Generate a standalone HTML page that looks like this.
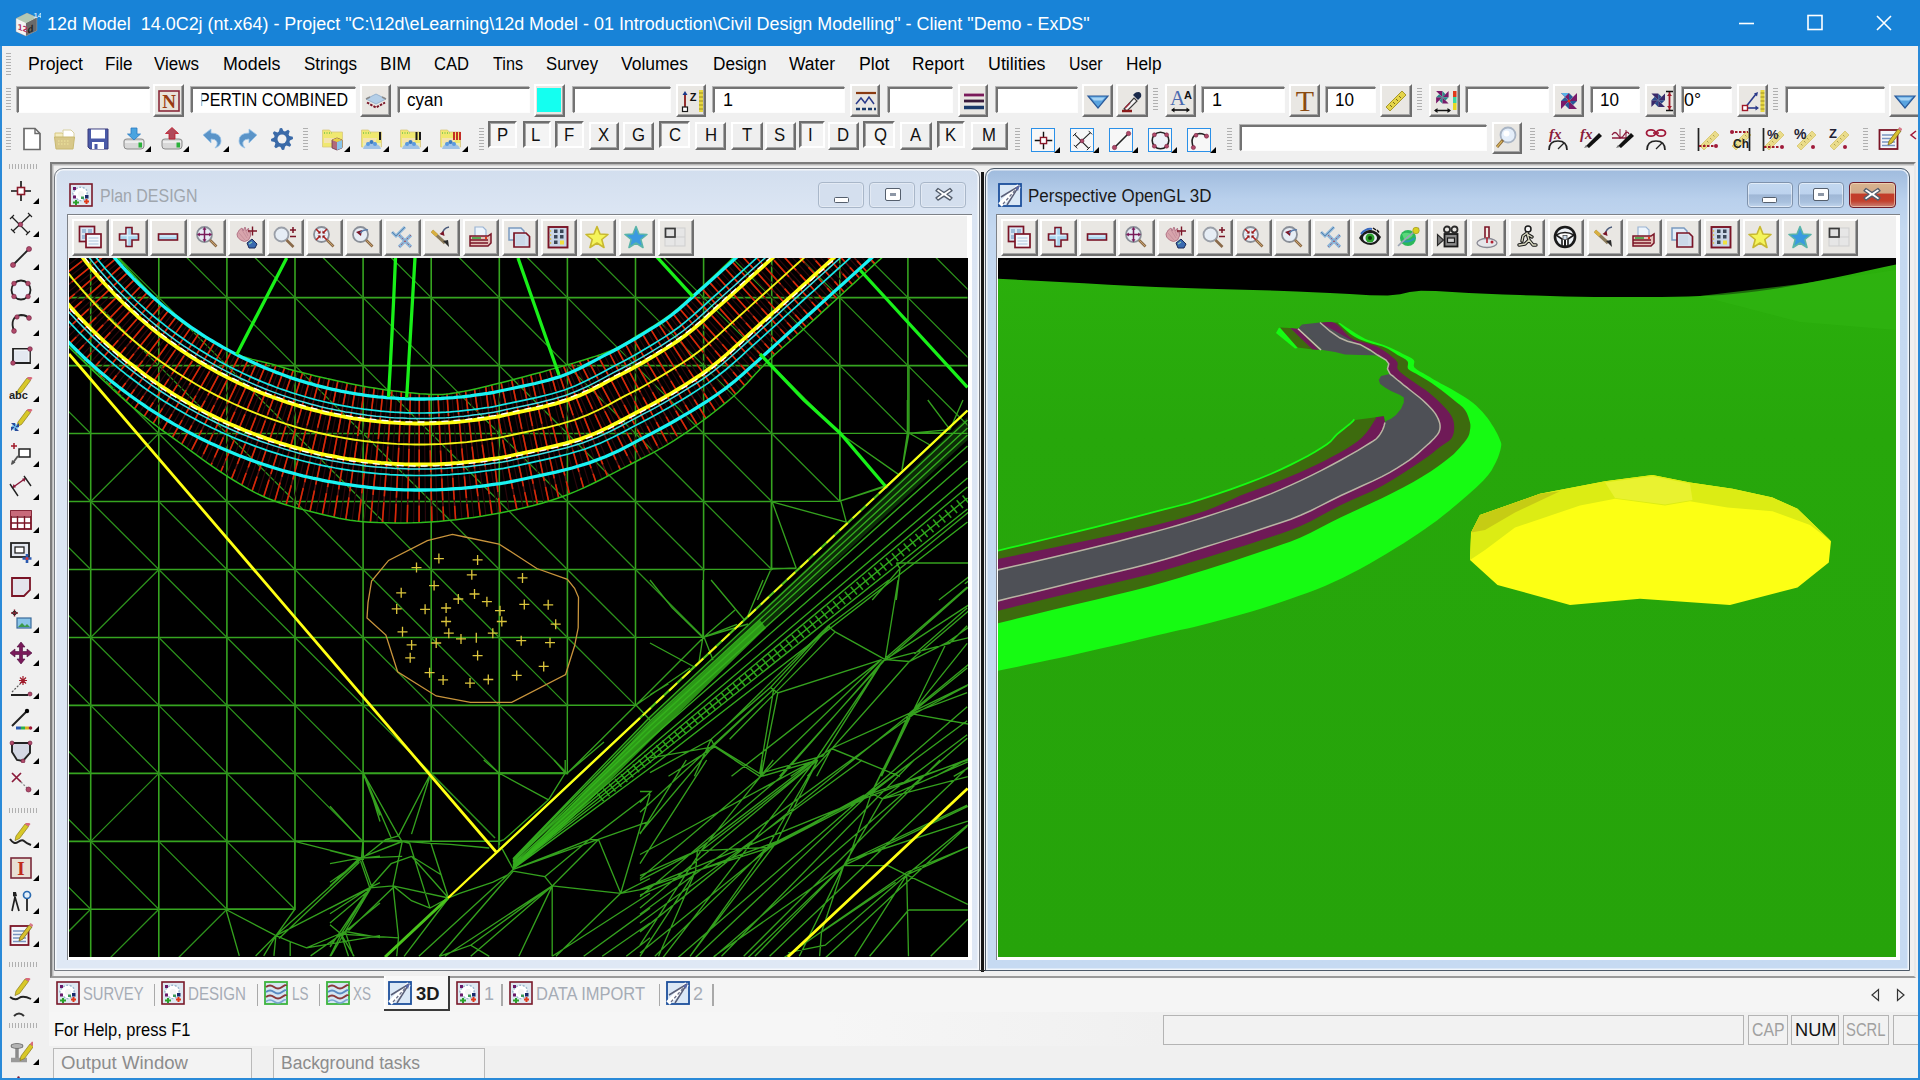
<!DOCTYPE html>
<html><head><meta charset="utf-8"><title>12d Model</title>
<style>
html,body{margin:0;padding:0}
body{width:1920px;height:1080px;position:relative;overflow:hidden;background:#f0f0f0;font-family:"Liberation Sans",sans-serif}
.abs{position:absolute}
.t{position:absolute;white-space:pre;line-height:1}
.inp{position:absolute;background:#fff;border-style:solid;border-width:2px 1px 1px 2px;border-color:#737373 #fdfdfd #fdfdfd #737373;box-shadow:-1px -1px 0 #b4b4b4}
.btn{position:absolute;background:#e9e7e3;border-style:solid;border-width:2px;border-color:#fff #6e6e6e #6e6e6e #fff;box-shadow:inset -1px -1px 0 #a6a6a6}
.btnf{position:absolute;background:#efefef;border-style:solid;border-width:2px;border-color:#fff #6e6e6e #6e6e6e #fff;box-shadow:inset -1px -1px 0 #a6a6a6}
.btns{position:absolute;background:#f4f4f4;border-style:solid;border-width:2px;border-color:#6e6e6e #fff #fff #6e6e6e;box-shadow:inset 1px 1px 0 #a6a6a6}
.gripv{position:absolute;width:5px;background:repeating-linear-gradient(180deg,#b0b0b0 0 1px,transparent 1px 3px)}
.griph{position:absolute;height:5px;background:repeating-linear-gradient(90deg,#b0b0b0 0 1px,transparent 1px 3px)}
.tri{position:absolute;width:0;height:0;border-left:6px solid transparent;border-bottom:6px solid #000}
</style></head>
<body>
<div style="position:absolute;left:0px;top:0px;width:1920px;height:46px;background:#1883d7"></div>
<div class="t" style="left:46.5px;top:14.6px;font-size:18px;color:#fff;transform:scaleX(0.9968);transform-origin:0 0;">12d Model  14.0C2j (nt.x64) - Project &quot;C:\12d\eLearning\12d Model - 01 Introduction\Civil Design Modelling&quot; - Client &quot;Demo - ExDS&quot;</div>
<div style="position:absolute;left:0px;top:46px;width:2px;height:1034px;background:#2a8ad8;z-index:9"></div>
<div style="position:absolute;left:1918px;top:46px;width:2px;height:1034px;background:#2a8ad8;z-index:9"></div>
<div style="position:absolute;left:0px;top:1078px;width:1920px;height:2px;background:#2a8ad8;z-index:9"></div>
<svg class="abs" style="left:1720px;top:0" width="200" height="46" viewBox="0 0 200 46"><g stroke="#fff" stroke-width="1.6" fill="none"><path d="M19 23.5h15"/><rect x="88" y="15.5" width="14" height="14"/><path d="M157 16l14 14M171 16l-14 14"/></g></svg>
<div class="t" style="left:27.5px;top:55.4px;font-size:18px;color:#000;transform:scaleX(0.9816);transform-origin:0 0;">Project</div>
<div class="t" style="left:105.0px;top:55.4px;font-size:18px;color:#000;transform:scaleX(0.9478);transform-origin:0 0;">File</div>
<div class="t" style="left:154.0px;top:55.4px;font-size:18px;color:#000;transform:scaleX(0.9436);transform-origin:0 0;">Views</div>
<div class="t" style="left:222.5px;top:55.4px;font-size:18px;color:#000;transform:scaleX(0.9906);transform-origin:0 0;">Models</div>
<div class="t" style="left:303.5px;top:55.4px;font-size:18px;color:#000;transform:scaleX(0.9459);transform-origin:0 0;">Strings</div>
<div class="t" style="left:380.0px;top:55.4px;font-size:18px;color:#000;transform:scaleX(0.9688);transform-origin:0 0;">BIM</div>
<div class="t" style="left:434.0px;top:55.4px;font-size:18px;color:#000;transform:scaleX(0.9211);transform-origin:0 0;">CAD</div>
<div class="t" style="left:492.5px;top:55.4px;font-size:18px;color:#000;transform:scaleX(0.8997);transform-origin:0 0;">Tins</div>
<div class="t" style="left:546.0px;top:55.4px;font-size:18px;color:#000;transform:scaleX(0.9281);transform-origin:0 0;">Survey</div>
<div class="t" style="left:621.0px;top:55.4px;font-size:18px;color:#000;transform:scaleX(0.9704);transform-origin:0 0;">Volumes</div>
<div class="t" style="left:712.5px;top:55.4px;font-size:18px;color:#000;transform:scaleX(0.9546);transform-origin:0 0;">Design</div>
<div class="t" style="left:789.0px;top:55.4px;font-size:18px;color:#000;transform:scaleX(0.9716);transform-origin:0 0;">Water</div>
<div class="t" style="left:858.5px;top:55.4px;font-size:18px;color:#000;transform:scaleX(0.9834);transform-origin:0 0;">Plot</div>
<div class="t" style="left:912.0px;top:55.4px;font-size:18px;color:#000;transform:scaleX(0.9621);transform-origin:0 0;">Report</div>
<div class="t" style="left:987.5px;top:55.4px;font-size:18px;color:#000;transform:scaleX(0.9911);transform-origin:0 0;">Utilities</div>
<div class="t" style="left:1069.0px;top:55.4px;font-size:18px;color:#000;transform:scaleX(0.8812);transform-origin:0 0;">User</div>
<div class="t" style="left:1126.0px;top:55.4px;font-size:18px;color:#000;transform:scaleX(0.9586);transform-origin:0 0;">Help</div>
<div class="gripv" style="left:6px;top:53px;height:22px"></div>
<div class="gripv" style="left:6px;top:88px;height:24px"></div>
<div class="inp" style="left:17px;top:87px;width:129.5px;height:23px"></div>
<div class="btn" style="left:153px;top:84px;width:27px;height:29px"></div>
<div class="inp" style="left:191px;top:87px;width:162px;height:23px"></div>
<div class="btn" style="left:360px;top:84px;width:27px;height:29px"></div>
<div class="inp" style="left:398px;top:87px;width:128.5px;height:23px"></div>
<div class="btn" style="left:534px;top:84px;width:27px;height:29px"></div>
<div class="inp" style="left:572.5px;top:87px;width:95.5px;height:23px"></div>
<div class="btn" style="left:675.5px;top:84px;width:26.5px;height:29px"></div>
<div class="inp" style="left:713px;top:87px;width:129px;height:23px"></div>
<div class="btn" style="left:849.5px;top:84px;width:26.5px;height:29px"></div>
<div class="inp" style="left:887.5px;top:87px;width:62px;height:23px"></div>
<div class="btn" style="left:957.5px;top:84px;width:26.5px;height:29px"></div>
<div class="inp" style="left:995.5px;top:87px;width:79px;height:23px"></div>
<div class="btn" style="left:1082px;top:84px;width:27px;height:29px"></div>
<div class="btn" style="left:1116px;top:84px;width:27.5px;height:29px"></div>
<div class="gripv" style="left:1153px;top:88px;height:24px"></div>
<div class="btn" style="left:1164.5px;top:84px;width:27px;height:29px"></div>
<div class="inp" style="left:1202px;top:87px;width:79.5px;height:23px"></div>
<div class="btn" style="left:1288.5px;top:84px;width:27.5px;height:29px"></div>
<div class="inp" style="left:1326px;top:87px;width:47px;height:23px"></div>
<div class="btn" style="left:1380px;top:84px;width:27.5px;height:29px"></div>
<div class="gripv" style="left:1417px;top:88px;height:24px"></div>
<div class="btn" style="left:1428.5px;top:84px;width:27px;height:29px"></div>
<div class="inp" style="left:1466px;top:87px;width:79.5px;height:23px"></div>
<div class="btn" style="left:1553px;top:84px;width:27px;height:29px"></div>
<div class="inp" style="left:1591px;top:87px;width:45.5px;height:23px"></div>
<div class="btn" style="left:1644.5px;top:84px;width:27px;height:29px"></div>
<div class="inp" style="left:1681.5px;top:87px;width:47.5px;height:23px"></div>
<div class="btn" style="left:1736.5px;top:84px;width:27px;height:29px"></div>
<div class="gripv" style="left:1773px;top:88px;height:24px"></div>
<div class="inp" style="left:1786px;top:87px;width:96px;height:23px"></div>
<div class="btn" style="left:1889px;top:84px;width:29px;height:29px"></div>
<div class="t" style="left:199.0px;top:91.3px;font-size:18px;color:#000;transform:scaleX(0.8886);transform-origin:0 0;clip-path:inset(0 0 0 3px);">PERTIN COMBINED</div>
<div class="t" style="left:407.0px;top:91.3px;font-size:18px;color:#000;transform:scaleX(0.9466);transform-origin:0 0;">cyan</div>
<div style="position:absolute;left:537px;top:88px;width:24px;height:24px;background:#14fff0"></div>
<div class="t" style="left:723.0px;top:91.3px;font-size:18px;color:#000;">1</div>
<div class="t" style="left:1212.0px;top:91.3px;font-size:18px;color:#000;">1</div>
<div class="t" style="left:1334.5px;top:91.3px;font-size:18px;color:#000;transform:scaleX(0.9485);transform-origin:0 0;">10</div>
<div class="t" style="left:1599.5px;top:91.3px;font-size:18px;color:#000;transform:scaleX(0.9485);transform-origin:0 0;">10</div>
<div class="t" style="left:1684.0px;top:91.3px;font-size:18px;color:#000;transform:scaleX(0.9873);transform-origin:0 0;">0°</div>
<div class="gripv" style="left:6px;top:128px;height:24px"></div>
<div class="gripv" style="left:303px;top:128px;height:24px"></div>
<div class="gripv" style="left:479px;top:128px;height:24px"></div>
<div class="btns" style="left:487.5px;top:121px;width:25.5px;height:23px"></div>
<div class="t" style="left:496.9px;top:125.8px;font-size:18px;color:#111;transform:scaleX(0.93);transform-origin:0 0;">P</div>
<div class="btns" style="left:522.5px;top:121px;width:24.5px;height:23px"></div>
<div class="t" style="left:531.3px;top:125.8px;font-size:18px;color:#111;transform:scaleX(0.93);transform-origin:0 0;">L</div>
<div class="btns" style="left:555px;top:121px;width:25px;height:23px"></div>
<div class="t" style="left:564.4px;top:125.8px;font-size:18px;color:#111;transform:scaleX(0.93);transform-origin:0 0;">F</div>
<div class="btnf" style="left:588.5px;top:122px;width:26.5px;height:24px"></div>
<div class="t" style="left:598.2px;top:125.8px;font-size:18px;color:#111;transform:scaleX(0.93);transform-origin:0 0;">X</div>
<div class="btnf" style="left:623px;top:122px;width:27px;height:24px"></div>
<div class="t" style="left:632.2px;top:125.8px;font-size:18px;color:#111;transform:scaleX(0.93);transform-origin:0 0;">G</div>
<div class="btns" style="left:658.5px;top:121px;width:27px;height:23px"></div>
<div class="t" style="left:668.5px;top:125.8px;font-size:18px;color:#111;transform:scaleX(0.93);transform-origin:0 0;">C</div>
<div class="btnf" style="left:695px;top:122px;width:27px;height:24px"></div>
<div class="t" style="left:705.0px;top:125.8px;font-size:18px;color:#111;transform:scaleX(0.93);transform-origin:0 0;">H</div>
<div class="btnf" style="left:731px;top:122px;width:27.5px;height:24px"></div>
<div class="t" style="left:742.4px;top:125.8px;font-size:18px;color:#111;transform:scaleX(0.93);transform-origin:0 0;">T</div>
<div class="btnf" style="left:765px;top:122px;width:26.5px;height:24px"></div>
<div class="t" style="left:774.4px;top:125.8px;font-size:18px;color:#111;transform:scaleX(0.93);transform-origin:0 0;">S</div>
<div class="btns" style="left:798.5px;top:121px;width:22.5px;height:23px"></div>
<div class="t" style="left:808.2px;top:125.8px;font-size:18px;color:#111;transform:scaleX(0.93);transform-origin:0 0;">I</div>
<div class="btnf" style="left:827.5px;top:122px;width:27.5px;height:24px"></div>
<div class="t" style="left:837.0px;top:125.8px;font-size:18px;color:#111;transform:scaleX(0.93);transform-origin:0 0;">D</div>
<div class="btns" style="left:862.5px;top:121px;width:28.5px;height:23px"></div>
<div class="t" style="left:873.5px;top:125.8px;font-size:18px;color:#111;transform:scaleX(0.93);transform-origin:0 0;">Q</div>
<div class="btnf" style="left:900px;top:122px;width:28px;height:24px"></div>
<div class="t" style="left:910.4px;top:125.8px;font-size:18px;color:#111;transform:scaleX(0.93);transform-origin:0 0;">A</div>
<div class="btns" style="left:937px;top:121px;width:24px;height:23px"></div>
<div class="t" style="left:945.4px;top:125.8px;font-size:18px;color:#111;transform:scaleX(0.93);transform-origin:0 0;">K</div>
<div class="btnf" style="left:971px;top:122px;width:32.5px;height:24px"></div>
<div class="t" style="left:982.0px;top:125.8px;font-size:18px;color:#111;transform:scaleX(0.93);transform-origin:0 0;">M</div>
<div class="gripv" style="left:1015px;top:128px;height:24px"></div>
<div style="position:absolute;left:1030.5px;top:127.5px;width:22px;height:22px;border:1.5px solid #2a90e8;background:#f7f7f7"></div>
<div class="tri" style="left:1054px;top:147px"></div>
<div style="position:absolute;left:1069.5px;top:127.5px;width:22px;height:22px;border:1.5px solid #2a90e8;background:#f7f7f7"></div>
<div class="tri" style="left:1093px;top:147px"></div>
<div style="position:absolute;left:1108.5px;top:127.5px;width:22px;height:22px;border:1.5px solid #2a90e8;background:#f7f7f7"></div>
<div class="tri" style="left:1132px;top:147px"></div>
<div style="position:absolute;left:1147.5px;top:127.5px;width:22px;height:22px;border:1.5px solid #2a90e8;background:#f7f7f7"></div>
<div class="tri" style="left:1171px;top:147px"></div>
<div style="position:absolute;left:1186.5px;top:127.5px;width:22px;height:22px;border:1.5px solid #2a90e8;background:#f7f7f7"></div>
<div class="tri" style="left:1210px;top:147px"></div>
<div class="gripv" style="left:1227px;top:128px;height:24px"></div>
<div class="inp" style="left:1240px;top:125px;width:244px;height:23px"></div>
<div class="btn" style="left:1491.5px;top:122px;width:26.5px;height:28px"></div>
<div class="gripv" style="left:1530px;top:128px;height:24px"></div>
<div class="gripv" style="left:1680px;top:128px;height:24px"></div>
<div class="gripv" style="left:1863px;top:128px;height:24px"></div>
<div style="position:absolute;left:49.5px;top:162px;width:1866px;height:815.5px;background:#f0f0f0;border-style:solid;border-width:2.5px;border-color:#7c7c7c #e8e8e8 #9a9a9a #7c7c7c;box-sizing:border-box;box-shadow:inset 1.5px 1.5px 0 #b9b9b9"></div>
<div style="position:absolute;left:981.3px;top:172px;width:3px;height:799.5px;background:#161616"></div>
<div style="position:absolute;left:56px;top:969.6px;width:1853px;height:1.9px;background:#2c2c2c"></div>
<div class="abs" style="left:54px;top:167.5px;width:924px;height:801.5px;background:linear-gradient(180deg,#d2deee 0px,#dbe5f3 40px,#dfe8f5 100%);border:1.5px solid #767b82;border-radius:9px 9px 0 0;box-shadow:inset 0 0 0 1.5px rgba(255,255,255,.75)"></div>
<div style="position:absolute;left:66.8px;top:214.3px;width:905.2px;height:745.7px;background:#fff;border-style:solid;border-color:#7d8187;border-width:1.5px 0 0 1.5px;box-sizing:border-box"></div>
<div style="position:absolute;left:68.3px;top:215.8px;width:899.2px;height:42.2px;background:#f0f0f0"></div>
<div class="btn" style="left:72px;top:219px;width:32.5px;height:32.5px"></div>
<div class="btn" style="left:111.05px;top:219px;width:32.5px;height:32.5px"></div>
<div class="btn" style="left:150.1px;top:219px;width:32.5px;height:32.5px"></div>
<div class="btn" style="left:189.15px;top:219px;width:32.5px;height:32.5px"></div>
<div class="btn" style="left:228.2px;top:219px;width:32.5px;height:32.5px"></div>
<div class="btn" style="left:267.25px;top:219px;width:32.5px;height:32.5px"></div>
<div class="btn" style="left:306.3px;top:219px;width:32.5px;height:32.5px"></div>
<div class="btn" style="left:345.35px;top:219px;width:32.5px;height:32.5px"></div>
<div class="btn" style="left:384.4px;top:219px;width:32.5px;height:32.5px"></div>
<div class="btn" style="left:423.45px;top:219px;width:32.5px;height:32.5px"></div>
<div class="btn" style="left:462.5px;top:219px;width:32.5px;height:32.5px"></div>
<div class="btn" style="left:501.55px;top:219px;width:32.5px;height:32.5px"></div>
<div class="btn" style="left:540.6px;top:219px;width:32.5px;height:32.5px"></div>
<div class="btn" style="left:579.65px;top:219px;width:32.5px;height:32.5px"></div>
<div class="btn" style="left:618.7px;top:219px;width:32.5px;height:32.5px"></div>
<div class="btn" style="left:657.75px;top:219px;width:32.5px;height:32.5px"></div>
<div class="t" style="left:99.5px;top:186.8px;font-size:18px;color:#a0a6ad;transform:scaleX(0.8861);transform-origin:0 0;">Plan DESIGN</div>
<div class="abs" style="left:818px;top:182px;width:44px;height:23.5px;border:1.5px solid #a9b7c9;border-radius:4px;background:#d4dfee;box-shadow:inset 0 0 0 1px rgba(255,255,255,.35)"></div>
<div class="abs" style="left:833.5px;top:196.5px;width:13px;height:4px;background:#fff;border:1.5px solid #555f6d;border-radius:1.5px"></div>
<div class="abs" style="left:869px;top:182px;width:44px;height:23.5px;border:1.5px solid #a9b7c9;border-radius:4px;background:#d4dfee;box-shadow:inset 0 0 0 1px rgba(255,255,255,.35)"></div>
<div class="abs" style="left:885.5px;top:188.5px;width:6px;height:3px;background:#8d97a6;border:4px solid #fff;outline:1.5px solid #555f6d;border-radius:1px"></div>
<div class="abs" style="left:920px;top:182px;width:44px;height:23.5px;border:1.5px solid #a9b7c9;border-radius:4px;background:#d4dfee;box-shadow:inset 0 0 0 1px rgba(255,255,255,.35)"></div>
<svg class="abs" style="left:933.5px;top:186px" width="20" height="16" viewBox="0 0 20 16"><path d="M4 2.5l6 4 6-4 2 2.2-5 3.6 5 3.6-2 2.2-6-4-6 4-2-2.2 5-3.6-5-3.6z" fill="#fff" stroke="#555f6d" stroke-width="1.4" stroke-linejoin="round"/></svg>
<div class="abs" style="left:984.5px;top:167.5px;width:923.5px;height:801.5px;background:linear-gradient(180deg,#9fbbdd 0px,#b9d0ec 30px,#c4d8f0 60px,#c6daf2 100%);border:1.5px solid #4d5a68;border-radius:9px 9px 0 0;box-shadow:inset 0 0 0 1.5px rgba(255,255,255,.75)"></div>
<div style="position:absolute;left:995.8px;top:214.3px;width:904.7px;height:745.7px;background:#fff;border-style:solid;border-color:#7d8187;border-width:1.5px 0 0 1.5px;box-sizing:border-box"></div>
<div style="position:absolute;left:997.3px;top:215.8px;width:898.7px;height:42.2px;background:#f0f0f0"></div>
<div class="btn" style="left:1001px;top:219px;width:32.5px;height:32.5px"></div>
<div class="btn" style="left:1040.05px;top:219px;width:32.5px;height:32.5px"></div>
<div class="btn" style="left:1079.1px;top:219px;width:32.5px;height:32.5px"></div>
<div class="btn" style="left:1118.15px;top:219px;width:32.5px;height:32.5px"></div>
<div class="btn" style="left:1157.2px;top:219px;width:32.5px;height:32.5px"></div>
<div class="btn" style="left:1196.25px;top:219px;width:32.5px;height:32.5px"></div>
<div class="btn" style="left:1235.3px;top:219px;width:32.5px;height:32.5px"></div>
<div class="btn" style="left:1274.35px;top:219px;width:32.5px;height:32.5px"></div>
<div class="btn" style="left:1313.4px;top:219px;width:32.5px;height:32.5px"></div>
<div class="btn" style="left:1352.45px;top:219px;width:32.5px;height:32.5px"></div>
<div class="btn" style="left:1391.5px;top:219px;width:32.5px;height:32.5px"></div>
<div class="btn" style="left:1430.55px;top:219px;width:32.5px;height:32.5px"></div>
<div class="btn" style="left:1469.6px;top:219px;width:32.5px;height:32.5px"></div>
<div class="btn" style="left:1508.65px;top:219px;width:32.5px;height:32.5px"></div>
<div class="btn" style="left:1547.7px;top:219px;width:32.5px;height:32.5px"></div>
<div class="btn" style="left:1586.75px;top:219px;width:32.5px;height:32.5px"></div>
<div class="btn" style="left:1625.8px;top:219px;width:32.5px;height:32.5px"></div>
<div class="btn" style="left:1664.85px;top:219px;width:32.5px;height:32.5px"></div>
<div class="btn" style="left:1703.9px;top:219px;width:32.5px;height:32.5px"></div>
<div class="btn" style="left:1742.95px;top:219px;width:32.5px;height:32.5px"></div>
<div class="btn" style="left:1782px;top:219px;width:32.5px;height:32.5px"></div>
<div class="btn" style="left:1821.05px;top:219px;width:32.5px;height:32.5px"></div>
<div class="t" style="left:1028.0px;top:186.8px;font-size:18px;color:#1a1a1a;transform:scaleX(0.9436);transform-origin:0 0;">Perspective OpenGL 3D</div>
<div class="abs" style="left:1746.5px;top:182px;width:44px;height:23.5px;border:1.5px solid #7f93ad;border-radius:4px;background:linear-gradient(180deg,#c3d8f0 0,#bdd3ee 45%,#9fb7d6 50%,#a9c1de 80%,#c2d6ee 100%);box-shadow:inset 0 0 0 1px rgba(255,255,255,.5)"></div>
<div class="abs" style="left:1762px;top:196.5px;width:13px;height:4px;background:#fff;border:1.5px solid #555f6d;border-radius:1.5px"></div>
<div class="abs" style="left:1797.5px;top:182px;width:44px;height:23.5px;border:1.5px solid #7f93ad;border-radius:4px;background:linear-gradient(180deg,#c3d8f0 0,#bdd3ee 45%,#9fb7d6 50%,#a9c1de 80%,#c2d6ee 100%);box-shadow:inset 0 0 0 1px rgba(255,255,255,.5)"></div>
<div class="abs" style="left:1814px;top:188.5px;width:6px;height:3px;background:#8d97a6;border:4px solid #fff;outline:1.5px solid #555f6d;border-radius:1px"></div>
<div class="abs" style="left:1848.5px;top:182px;width:45px;height:23.5px;border:1.5px solid #6e1e2c;border-radius:4px;background:linear-gradient(180deg,#d8b48e 0,#d2a98a 42%,#c23c2a 46%,#c2402c 75%,#c98378 100%);box-shadow:inset 0 0 0 1px rgba(255,230,200,.55)"></div>
<svg class="abs" style="left:1862px;top:186px" width="20" height="16" viewBox="0 0 20 16"><path d="M4 2.5l6 4 6-4 2 2.2-5 3.6 5 3.6-2 2.2-6-4-6 4-2-2.2 5-3.6-5-3.6z" fill="#fff" stroke="#555f6d" stroke-width="1.4" stroke-linejoin="round"/></svg>
<div style="position:absolute;left:69px;top:258px;width:898.5px;height:699px;background:#000"></div>
<div style="position:absolute;left:998px;top:258px;width:898px;height:699px;background:#26a50a"></div>
<svg class="abs" style="left:69px;top:258px" width="898.5" height="699" viewBox="69 258 898.5 699">
<rect x="69" y="258" width="899" height="699" fill="#000"/>
<defs><clipPath id="reg"><polygon points="69.0,258.0 967.5,258.0 967.5,434.0 841.0,434.0 841.0,502.0 772.8,502.0 772.8,570.0 704.5,570.0 704.5,638.0 636.5,638.0 636.5,706.0 568.2,706.0 568.2,774.2 363.1,774.2 363.1,842.0 295.0,842.0 295.0,910.0 225.8,910.0 225.8,957.0 69.0,957.0"/></clipPath></defs>
<g clip-path="url(#reg)">
<path d="M22.6 229.6L90.7 229.6M22.6 229.6L22.6 297.6M22.6 297.6L90.7 297.6M22.6 297.6L22.6 365.6M22.6 365.6L90.7 365.6M22.6 365.6L22.6 433.5M22.6 433.5L90.7 433.5M22.6 433.5L22.6 501.5M22.6 501.5L90.7 501.5M22.6 501.5L22.6 569.5M22.6 569.5L90.7 569.5M22.6 569.5L22.6 637.5M22.6 637.5L90.7 637.5M22.6 637.5L22.6 705.4M22.6 705.4L90.7 705.4M22.6 705.4L22.6 773.4M22.6 773.4L90.7 773.4M22.6 773.4L22.6 841.4M22.6 841.4L90.7 841.4M22.6 841.4L22.6 909.3M22.6 909.3L90.7 909.3M22.6 909.3L22.6 977.3M90.7 229.6L158.8 229.6M90.7 229.6L90.7 297.6M90.7 297.6L158.8 297.6M90.7 297.6L90.7 365.6M90.7 365.6L158.8 365.6M90.7 365.6L90.7 433.5M90.7 433.5L158.8 433.5M90.7 433.5L90.7 501.5M90.7 501.5L158.8 501.5M90.7 501.5L90.7 569.5M90.7 569.5L158.8 569.5M90.7 569.5L90.7 637.5M90.7 637.5L158.8 637.5M90.7 637.5L90.7 705.4M90.7 705.4L158.8 705.4M90.7 705.4L90.7 773.4M90.7 773.4L158.8 773.4M90.7 773.4L90.7 841.4M90.7 841.4L158.8 841.4M90.7 841.4L90.7 909.3M90.7 909.3L158.8 909.3M90.7 909.3L90.7 977.3M158.8 229.6L226.9 229.6M158.8 229.6L158.8 297.6M158.8 297.6L226.9 297.6M158.8 297.6L158.8 365.6M158.8 365.6L226.9 365.6M158.8 365.6L158.8 433.5M158.8 433.5L226.9 433.5M158.8 433.5L158.8 501.5M158.8 501.5L226.9 501.5M158.8 501.5L158.8 569.5M158.8 569.5L226.9 569.5M158.8 569.5L158.8 637.5M158.8 637.5L226.9 637.5M158.8 637.5L158.8 705.4M158.8 705.4L226.9 705.4M158.8 705.4L158.8 773.4M158.8 773.4L226.9 773.4M158.8 773.4L158.8 841.4M158.8 841.4L226.9 841.4M158.8 841.4L158.8 909.3M158.8 909.3L226.9 909.3M158.8 909.3L158.8 977.3M226.9 229.6L295.0 229.6M226.9 229.6L226.9 297.6M226.9 297.6L295.0 297.6M226.9 297.6L226.9 365.6M226.9 365.6L295.0 365.6M226.9 365.6L226.9 433.5M226.9 433.5L295.0 433.5M226.9 433.5L226.9 501.5M226.9 501.5L295.0 501.5M226.9 501.5L226.9 569.5M226.9 569.5L295.0 569.5M226.9 569.5L226.9 637.5M226.9 637.5L295.0 637.5M226.9 637.5L226.9 705.4M226.9 705.4L295.0 705.4M226.9 705.4L226.9 773.4M226.9 773.4L295.0 773.4M226.9 773.4L226.9 841.4M226.9 841.4L295.0 841.4M226.9 841.4L226.9 909.3M226.9 909.3L295.0 909.3M226.9 909.3L226.9 977.3M295.0 229.6L363.1 229.6M295.0 229.6L295.0 297.6M295.0 297.6L363.1 297.6M295.0 297.6L295.0 365.6M295.0 365.6L363.1 365.6M295.0 365.6L295.0 433.5M295.0 433.5L363.1 433.5M295.0 433.5L295.0 501.5M295.0 501.5L363.1 501.5M295.0 501.5L295.0 569.5M295.0 569.5L363.1 569.5M295.0 569.5L295.0 637.5M295.0 637.5L363.1 637.5M295.0 637.5L295.0 705.4M295.0 705.4L363.1 705.4M295.0 705.4L295.0 773.4M295.0 773.4L363.1 773.4M295.0 773.4L295.0 841.4M295.0 841.4L363.1 841.4M295.0 841.4L295.0 909.3M295.0 909.3L363.1 909.3M295.0 909.3L295.0 977.3M363.1 229.6L431.2 229.6M363.1 229.6L363.1 297.6M363.1 297.6L431.2 297.6M363.1 297.6L363.1 365.6M363.1 365.6L431.2 365.6M363.1 365.6L363.1 433.5M363.1 433.5L431.2 433.5M363.1 433.5L363.1 501.5M363.1 501.5L431.2 501.5M363.1 501.5L363.1 569.5M363.1 569.5L431.2 569.5M363.1 569.5L363.1 637.5M363.1 637.5L431.2 637.5M363.1 637.5L363.1 705.4M363.1 705.4L431.2 705.4M363.1 705.4L363.1 773.4M363.1 773.4L431.2 773.4M363.1 773.4L363.1 841.4M363.1 841.4L431.2 841.4M363.1 841.4L363.1 909.3M363.1 909.3L431.2 909.3M363.1 909.3L363.1 977.3M431.2 229.6L499.3 229.6M431.2 229.6L431.2 297.6M431.2 297.6L499.3 297.6M431.2 297.6L431.2 365.6M431.2 365.6L499.3 365.6M431.2 365.6L431.2 433.5M431.2 433.5L499.3 433.5M431.2 433.5L431.2 501.5M431.2 501.5L499.3 501.5M431.2 501.5L431.2 569.5M431.2 569.5L499.3 569.5M431.2 569.5L431.2 637.5M431.2 637.5L499.3 637.5M431.2 637.5L431.2 705.4M431.2 705.4L499.3 705.4M431.2 705.4L431.2 773.4M431.2 773.4L499.3 773.4M431.2 773.4L431.2 841.4M431.2 841.4L499.3 841.4M431.2 841.4L431.2 909.3M431.2 909.3L499.3 909.3M431.2 909.3L431.2 977.3M499.3 229.6L567.4 229.6M499.3 229.6L499.3 297.6M499.3 297.6L567.4 297.6M499.3 297.6L499.3 365.6M499.3 365.6L567.4 365.6M499.3 365.6L499.3 433.5M499.3 433.5L567.4 433.5M499.3 433.5L499.3 501.5M499.3 501.5L567.4 501.5M499.3 501.5L499.3 569.5M499.3 569.5L567.4 569.5M499.3 569.5L499.3 637.5M499.3 637.5L567.4 637.5M499.3 637.5L499.3 705.4M499.3 705.4L567.4 705.4M499.3 705.4L499.3 773.4M499.3 773.4L567.4 773.4M499.3 773.4L499.3 841.4M499.3 841.4L567.4 841.4M499.3 841.4L499.3 909.3M499.3 909.3L567.4 909.3M499.3 909.3L499.3 977.3M567.4 229.6L635.5 229.6M567.4 229.6L567.4 297.6M567.4 297.6L635.5 297.6M567.4 297.6L567.4 365.6M567.4 365.6L635.5 365.6M567.4 365.6L567.4 433.5M567.4 433.5L635.5 433.5M567.4 433.5L567.4 501.5M567.4 501.5L635.5 501.5M567.4 501.5L567.4 569.5M567.4 569.5L635.5 569.5M567.4 569.5L567.4 637.5M567.4 637.5L635.5 637.5M567.4 637.5L567.4 705.4M567.4 705.4L635.5 705.4M567.4 705.4L567.4 773.4M567.4 773.4L635.5 773.4M567.4 773.4L567.4 841.4M567.4 841.4L635.5 841.4M567.4 841.4L567.4 909.3M567.4 909.3L635.5 909.3M567.4 909.3L567.4 977.3M635.5 229.6L703.6 229.6M635.5 229.6L635.5 297.6M635.5 297.6L703.6 297.6M635.5 297.6L635.5 365.6M635.5 365.6L703.6 365.6M635.5 365.6L635.5 433.5M635.5 433.5L703.6 433.5M635.5 433.5L635.5 501.5M635.5 501.5L703.6 501.5M635.5 501.5L635.5 569.5M635.5 569.5L703.6 569.5M635.5 569.5L635.5 637.5M635.5 637.5L703.6 637.5M635.5 637.5L635.5 705.4M635.5 705.4L703.6 705.4M635.5 705.4L635.5 773.4M635.5 773.4L703.6 773.4M635.5 773.4L635.5 841.4M635.5 841.4L703.6 841.4M635.5 841.4L635.5 909.3M635.5 909.3L703.6 909.3M635.5 909.3L635.5 977.3M703.6 229.6L771.7 229.6M703.6 229.6L703.6 297.6M703.6 297.6L771.7 297.6M703.6 297.6L703.6 365.6M703.6 365.6L771.7 365.6M703.6 365.6L703.6 433.5M703.6 433.5L771.7 433.5M703.6 433.5L703.6 501.5M703.6 501.5L771.7 501.5M703.6 501.5L703.6 569.5M703.6 569.5L771.7 569.5M703.6 569.5L703.6 637.5M703.6 637.5L771.7 637.5M703.6 637.5L703.6 705.4M703.6 705.4L771.7 705.4M703.6 705.4L703.6 773.4M703.6 773.4L771.7 773.4M703.6 773.4L703.6 841.4M703.6 841.4L771.7 841.4M703.6 841.4L703.6 909.3M703.6 909.3L771.7 909.3M703.6 909.3L703.6 977.3M771.7 229.6L839.8 229.6M771.7 229.6L771.7 297.6M771.7 297.6L839.8 297.6M771.7 297.6L771.7 365.6M771.7 365.6L839.8 365.6M771.7 365.6L771.7 433.5M771.7 433.5L839.8 433.5M771.7 433.5L771.7 501.5M771.7 501.5L839.8 501.5M771.7 501.5L771.7 569.5M771.7 569.5L839.8 569.5M771.7 569.5L771.7 637.5M771.7 637.5L839.8 637.5M771.7 637.5L771.7 705.4M771.7 705.4L839.8 705.4M771.7 705.4L771.7 773.4M771.7 773.4L839.8 773.4M771.7 773.4L771.7 841.4M771.7 841.4L839.8 841.4M771.7 841.4L771.7 909.3M771.7 909.3L839.8 909.3M771.7 909.3L771.7 977.3M839.8 229.6L907.9 229.6M839.8 229.6L839.8 297.6M839.8 297.6L907.9 297.6M839.8 297.6L839.8 365.6M839.8 365.6L907.9 365.6M839.8 365.6L839.8 433.5M839.8 433.5L907.9 433.5M839.8 433.5L839.8 501.5M839.8 501.5L907.9 501.5M839.8 501.5L839.8 569.5M839.8 569.5L907.9 569.5M839.8 569.5L839.8 637.5M839.8 637.5L907.9 637.5M839.8 637.5L839.8 705.4M839.8 705.4L907.9 705.4M839.8 705.4L839.8 773.4M839.8 773.4L907.9 773.4M839.8 773.4L839.8 841.4M839.8 841.4L907.9 841.4M839.8 841.4L839.8 909.3M839.8 909.3L907.9 909.3M839.8 909.3L839.8 977.3M907.9 229.6L976.0 229.6M907.9 229.6L907.9 297.6M907.9 297.6L976.0 297.6M907.9 297.6L907.9 365.6M907.9 365.6L976.0 365.6M907.9 365.6L907.9 433.5M907.9 433.5L976.0 433.5M907.9 433.5L907.9 501.5M907.9 501.5L976.0 501.5M907.9 501.5L907.9 569.5M907.9 569.5L976.0 569.5M907.9 569.5L907.9 637.5M907.9 637.5L976.0 637.5M907.9 637.5L907.9 705.4M907.9 705.4L976.0 705.4M907.9 705.4L907.9 773.4M907.9 773.4L976.0 773.4M907.9 773.4L907.9 841.4M907.9 841.4L976.0 841.4M907.9 841.4L907.9 909.3M907.9 909.3L976.0 909.3M907.9 909.3L907.9 977.3" stroke="#36a420" stroke-width="1.6" fill="none"/>
<path d="M22.6 229.6L90.7 297.6M22.6 297.6L90.7 365.6M22.6 365.6L90.7 433.5M22.6 433.5L90.7 501.5M22.6 501.5L90.7 569.5M22.6 569.5L90.7 637.5M22.6 637.5L90.7 705.4M22.6 705.4L90.7 773.4M22.6 773.4L90.7 841.4M22.6 841.4L90.7 909.3M90.7 909.3L22.6 977.3M90.7 229.6L158.8 297.6M90.7 297.6L158.8 365.6M90.7 365.6L158.8 433.5M158.8 433.5L90.7 501.5M90.7 501.5L158.8 569.5M158.8 569.5L90.7 637.5M90.7 637.5L158.8 705.4M90.7 705.4L158.8 773.4M158.8 773.4L90.7 841.4M90.7 841.4L158.8 909.3M158.8 909.3L90.7 977.3M158.8 229.6L226.9 297.6M158.8 297.6L226.9 365.6M158.8 365.6L226.9 433.5M158.8 433.5L226.9 501.5M158.8 501.5L226.9 569.5M158.8 569.5L226.9 637.5M158.8 637.5L226.9 705.4M158.8 705.4L226.9 773.4M158.8 773.4L226.9 841.4M158.8 841.4L226.9 909.3M226.9 909.3L158.8 977.3M226.9 229.6L295.0 297.6M226.9 297.6L295.0 365.6M226.9 365.6L295.0 433.5M226.9 433.5L295.0 501.5M226.9 501.5L295.0 569.5M226.9 569.5L295.0 637.5M226.9 637.5L295.0 705.4M226.9 705.4L295.0 773.4M226.9 773.4L295.0 841.4M226.9 841.4L295.0 909.3M226.9 909.3L295.0 977.3M295.0 229.6L363.1 297.6M295.0 297.6L363.1 365.6M295.0 365.6L363.1 433.5M295.0 433.5L363.1 501.5M295.0 501.5L363.1 569.5M295.0 569.5L363.1 637.5M295.0 637.5L363.1 705.4M295.0 705.4L363.1 773.4M295.0 773.4L363.1 841.4M295.0 841.4L363.1 909.3M295.0 909.3L363.1 977.3M363.1 229.6L431.2 297.6M363.1 297.6L431.2 365.6M363.1 365.6L431.2 433.5M363.1 433.5L431.2 501.5M363.1 501.5L431.2 569.5M363.1 569.5L431.2 637.5M363.1 637.5L431.2 705.4M363.1 705.4L431.2 773.4M363.1 773.4L431.2 841.4M363.1 841.4L431.2 909.3M363.1 909.3L431.2 977.3M431.2 229.6L499.3 297.6M431.2 297.6L499.3 365.6M431.2 365.6L499.3 433.5M431.2 433.5L499.3 501.5M431.2 501.5L499.3 569.5M431.2 569.5L499.3 637.5M431.2 637.5L499.3 705.4M431.2 705.4L499.3 773.4M431.2 773.4L499.3 841.4M431.2 841.4L499.3 909.3M431.2 909.3L499.3 977.3M499.3 229.6L567.4 297.6M499.3 297.6L567.4 365.6M499.3 365.6L567.4 433.5M499.3 433.5L567.4 501.5M499.3 501.5L567.4 569.5M499.3 569.5L567.4 637.5M499.3 637.5L567.4 705.4M499.3 705.4L567.4 773.4M499.3 773.4L567.4 841.4M499.3 841.4L567.4 909.3M499.3 909.3L567.4 977.3M567.4 229.6L635.5 297.6M567.4 297.6L635.5 365.6M567.4 365.6L635.5 433.5M567.4 433.5L635.5 501.5M567.4 501.5L635.5 569.5M567.4 569.5L635.5 637.5M567.4 637.5L635.5 705.4M567.4 705.4L635.5 773.4M567.4 773.4L635.5 841.4M567.4 841.4L635.5 909.3M567.4 909.3L635.5 977.3M635.5 229.6L703.6 297.6M635.5 297.6L703.6 365.6M635.5 365.6L703.6 433.5M635.5 433.5L703.6 501.5M635.5 501.5L703.6 569.5M635.5 569.5L703.6 637.5M635.5 637.5L703.6 705.4M635.5 705.4L703.6 773.4M635.5 773.4L703.6 841.4M635.5 841.4L703.6 909.3M635.5 909.3L703.6 977.3M703.6 229.6L771.7 297.6M703.6 297.6L771.7 365.6M703.6 365.6L771.7 433.5M703.6 433.5L771.7 501.5M703.6 501.5L771.7 569.5M703.6 569.5L771.7 637.5M703.6 637.5L771.7 705.4M703.6 705.4L771.7 773.4M703.6 773.4L771.7 841.4M703.6 841.4L771.7 909.3M703.6 909.3L771.7 977.3M771.7 229.6L839.8 297.6M771.7 297.6L839.8 365.6M771.7 365.6L839.8 433.5M771.7 433.5L839.8 501.5M771.7 501.5L839.8 569.5M771.7 569.5L839.8 637.5M771.7 637.5L839.8 705.4M771.7 705.4L839.8 773.4M771.7 773.4L839.8 841.4M771.7 841.4L839.8 909.3M771.7 909.3L839.8 977.3M839.8 229.6L907.9 297.6M839.8 297.6L907.9 365.6M839.8 365.6L907.9 433.5M839.8 433.5L907.9 501.5M839.8 501.5L907.9 569.5M839.8 569.5L907.9 637.5M839.8 637.5L907.9 705.4M839.8 705.4L907.9 773.4M839.8 773.4L907.9 841.4M839.8 841.4L907.9 909.3M839.8 909.3L907.9 977.3M907.9 229.6L976.0 297.6M907.9 297.6L976.0 365.6M907.9 365.6L976.0 433.5M907.9 433.5L976.0 501.5M907.9 501.5L976.0 569.5M907.9 569.5L976.0 637.5M907.9 637.5L976.0 705.4M907.9 705.4L976.0 773.4M907.9 773.4L976.0 841.4M907.9 841.4L976.0 909.3M907.9 909.3L976.0 977.3" stroke="#2c901c" stroke-width="1.3" fill="none"/>
</g>
<path d="M363.1 773.4H568M431.2 773.4V841.3M499.3 773.4V845M363.1 841.3H499.3M363.1 841.3V857M226.9 909.3H295V841.3H363.1" stroke="#36a420" stroke-width="1.6" fill="none"/>
<path d="M431.2 773.4L495 838" stroke="#2c901c" stroke-width="1.5" fill="none"/>
<path d="M363.3 773.0L363.3 860.0M430.9 773.0L430.9 841.5M498.9 773.0L498.9 850.7M330.0 841.5L407.8 841.5L430.9 843.3L450.4 844.3L489.3 848.0M363.3 773.0L398.5 835.9M430.9 773.0L398.5 835.9M430.9 773.0L411.5 834.1M363.3 773.0L391.1 837.8M330.0 806.3L360.6 839.6M402.2 841.5L359.6 858.1M402.2 841.5L393.0 885.9M409.6 843.3L430.0 908.1M398.5 835.9L402.2 841.5L409.6 843.3M330.0 850.7L359.6 858.1L402.2 856.3M359.6 858.1L330.0 885.9M359.6 858.1L369.8 887.8M369.8 887.8L330.0 908.1M369.8 887.8L393.0 885.9M393.0 885.9L398.5 937.8L396.7 956.3M393.0 885.9L448.5 898.0M411.5 856.3L448.5 898.0M430.9 843.3L448.5 898.0M430.9 843.3L441.1 874.8M448.5 898.0L430.0 908.1L411.5 900.7L393.0 885.9M341.1 934.1L330.0 924.8M341.1 934.1L330.0 943.3M341.1 934.1L348.5 956.3M341.1 934.1L354.1 956.3M341.1 934.1L398.5 937.8M341.1 934.1L369.8 887.8M330.0 882.2L348.5 869.3L385.6 839.6L407.8 841.5M330.0 913.7L369.8 887.8L391.1 863.7L411.5 856.3M330.0 923.0L369.8 889.6M348.5 930.4L393.0 887.8M330.0 956.3L341.1 934.1M330.0 863.7L359.6 858.1M385.6 839.6L398.5 835.9M330.0 947.0L369.8 887.8M498.9 773.0L548.5 799.8M498.9 773.0L565.2 773.0M565.2 760.0L565.2 773.0L548.5 799.8M548.5 799.8L504.1 839.6M498.9 841.5L504.1 839.6M483.7 760.0L498.9 773.0M554.1 760.0L565.2 773.0M441.1 874.8L411.5 856.3M441.1 874.8L448.5 898.0M513.3 869.3L502.2 848.9M513.3 869.3L507.8 874.8L493.0 882.2L459.6 893.3L448.5 898.0M513.3 871.1L544.8 876.7L552.2 885.9L620.7 893.3M513.3 869.3L589.3 839.6L650.0 793.3M513.3 869.3L650.0 821.1M620.7 893.3L598.5 839.6M620.7 893.3L650.0 794.3M620.7 893.3L650.0 878.5M620.7 893.3L650.0 887.8M598.5 839.6L589.3 839.6L524.4 865.6M418.9 956.3L507.8 874.8M439.3 956.3L513.3 871.1M444.8 956.3L552.2 885.9M470.7 956.3L552.2 885.9M518.9 956.3L552.2 885.9M552.2 885.9L552.2 956.3M552.2 956.3L650.0 893.3M583.7 956.3L650.0 908.1M602.2 956.3L650.0 923.0M439.3 956.3L470.7 945.2L489.3 956.3M470.7 945.2L552.2 885.9M552.2 885.9L598.5 839.6M555.9 956.3L620.7 893.3M626.3 956.3L650.0 937.8M544.8 876.7L589.3 839.6M404.1 956.3L448.5 898.0M385.6 956.3L448.5 898.0M640.0 863.7L706.7 760.0M640.0 945.2L701.1 850.7L760.4 776.7L773.3 760.0M654.8 956.3L769.6 845.2L871.5 793.3L967.8 760.0M690.0 956.3L767.8 847.0L817.8 760.0M640.0 791.5L651.1 791.5L640.0 802.6M734.4 760.0L760.4 776.7L762.2 760.0M760.4 776.7L817.8 760.0M760.4 776.7L640.0 878.5M695.6 871.1L697.4 850.7M695.6 871.1L765.9 848.9M695.6 871.1L640.0 889.6M695.6 871.1L640.0 956.3M695.6 871.1L777.0 841.5M697.4 850.7L640.0 880.4M701.1 850.7L817.8 760.0M777.0 841.5L871.5 793.3M777.0 841.5L817.8 760.0M765.9 848.9L864.1 795.2M777.0 841.5L690.0 956.3M871.5 793.3L882.6 798.9M871.5 793.3L888.1 760.0M882.6 798.9L967.8 761.9M882.6 798.9L843.7 865.6M843.7 865.6L888.1 865.6M843.7 865.6L821.5 932.2M843.7 865.6L714.1 956.3M843.7 865.6L754.8 956.3M906.7 874.8L888.1 865.6M906.7 874.8L967.8 847.0M906.7 874.8L967.8 904.4M906.7 874.8L908.5 956.3M906.7 874.8L825.2 945.2L788.1 952.6M906.7 874.8L854.8 956.3M908.5 910.0L967.8 910.0M908.5 910.0L869.6 956.3M967.8 919.3L930.7 956.3M821.5 932.2L819.6 956.3M821.5 932.2L895.6 882.2M640.0 908.1L817.8 760.0M640.0 923.0L862.2 760.0M721.5 956.3L914.1 760.0M743.7 956.3L940.0 760.0M769.6 956.3L967.8 767.4M871.5 793.3L914.1 760.0M843.7 865.6L967.8 806.3M849.3 860.0L967.8 821.1M906.7 874.8L967.8 824.8M640.0 834.1L686.3 760.0M640.0 895.2L695.6 871.1M658.5 956.3L695.6 871.1M882.6 798.9L967.8 776.7M799.3 956.3L843.7 865.6M650.0 637.4L702.8 637.4M702.8 580.0L702.8 637.4L699.1 661.5M650.0 580.0L672.2 607.8L702.8 637.4M711.1 580.0L744.4 619.8M763.0 580.0L748.1 615.2M702.8 637.4L737.0 624.4M650.0 643.0L694.4 667.0M650.0 694.8L668.5 683.7M650.0 772.6L711.1 739.3L770.4 687.4L827.8 626.3L888.9 580.0M711.1 739.3L714.8 746.7L759.3 776.3M714.8 746.7L650.0 757.8M714.8 746.7L668.5 776.3M711.1 739.3L694.4 776.3M770.4 687.4L777.8 693.0L881.5 659.6M777.8 693.0L761.1 776.3M761.1 776.3L881.5 659.6M827.8 626.3L835.2 631.9L885.2 659.6M885.2 659.6L898.1 580.0M885.2 659.6L909.3 661.5L946.3 643.0L970.0 637.4M885.2 659.6L970.0 604.1M885.2 659.6L779.6 776.3M909.3 661.5L970.0 609.6M909.3 661.5L807.4 776.3M946.3 643.0L970.0 626.3M946.3 643.0L881.5 776.3M909.3 713.3L831.5 748.5L816.7 776.3M909.3 713.3L970.0 663.3M909.3 713.3L881.5 776.3M909.3 713.3L970.0 683.7M831.5 748.5L900.0 776.3M831.5 748.5L790.7 776.3M970.0 757.8L935.2 776.3M970.0 767.0L953.7 776.3M909.3 713.3L970.0 724.4M970.0 585.6L888.9 657.8M970.0 580.0L964.8 583.7M881.5 659.6L816.7 709.6L731.5 776.3M827.8 626.3L724.1 728.1M835.2 631.9L729.6 739.3M840.7 500.9L887.0 485.2M772.2 501.9L846.3 522.2M840.7 500.9L846.3 522.2M772.2 501.9L796.3 568.5M907.4 433.3L901.9 470.4M907.4 400.0L907.4 433.3M839.8 400.0L839.8 500.9M771.3 501.9L771.3 570.4M770.4 570.4L757.4 600.0M771.3 568.5L796.3 568.5M907.4 433.3L950.0 429.6M927.8 400.0L950.0 429.6M963.0 400.0L950.0 429.6M842.6 435.2L898.1 474.1M896.3 563.0L970.0 563.0M896.3 563.0L900.0 568.5L896.3 600.0M900.0 568.5L872.2 600.0M970.0 575.9L938.9 600.0M900.0 568.5L970.0 511.1M226.0 909.5L239.3 955.9M226.0 909.5L275.9 935.6M294.7 841.4L361.5 858.2M362.9 841.4L361.5 858.2L380.0 856.1M361.5 858.2L371.7 886.7M361.5 858.2L275.9 935.6M359.4 862.2L279.0 938.6M371.7 886.7L275.9 935.6M371.7 886.7L380.0 882.6M371.7 886.7L345.2 931.5M275.9 935.6L255.6 955.9M275.9 935.6L263.7 955.9M275.9 935.6L273.9 955.9M275.9 935.6L290.2 941.7L306.5 947.8L345.2 931.5M345.2 931.5L380.0 937.6M345.2 931.5L353.3 955.9M345.2 931.5L330.9 955.9M345.2 931.5L310.6 955.9M345.2 931.5L380.0 903.0M294.7 909.5L275.9 935.6M290.2 941.7L290.2 955.9M306.5 947.8L380.0 935.6M362.9 772.6L380.0 815.4M362.9 772.6L373.7 801.1L380.0 821.5M636.0 705.0L704.0 637.0M636.0 705.0L690.0 668.0M567.5 773.0L636.0 705.0M567.5 773.0L604.0 742.0M704.0 637.0L735.0 610.0M704.0 637.0L748.0 624.0M772.0 569.0L796.0 568.0M840.0 501.0L887.0 486.0M909.0 433.0L902.0 470.0M909.0 433.0L946.0 433.0M909.0 365.0L909.0 433.0M909.0 433.0L930.0 445.0M636.0 705.0L650.0 720.0M704.0 637.0L713.0 660.0M640.0 812.2L773.7 689.1L830.0 625.7M640.0 875.6L696.3 850.9L770.2 847.4L865.2 798.2L967.2 759.5M640.0 896.7L780.7 777.0L882.8 660.9L949.6 643.3L967.2 625.7M661.1 960.0L815.9 759.5L882.8 660.9M692.8 960.0L872.2 791.1L967.2 720.7M640.0 931.9L967.2 668.0M640.0 914.3L914.5 713.7L967.2 685.6M640.0 854.5L815.9 759.5M640.0 953.0L770.2 847.4M696.3 850.9L815.9 759.5M770.2 847.4L872.2 791.1L910.9 713.7L967.2 692.6M745.6 960.0L847.6 861.5L967.2 805.2M780.7 960.0L907.4 872.0L967.2 847.4M847.6 861.5L872.2 791.1M640.0 833.3L713.9 745.4L759.6 773.5L823.0 755.9L882.8 660.9M713.9 745.4L773.7 689.1M759.6 773.5L773.7 689.1M967.2 587.0L886.3 657.4M967.2 608.1L914.5 653.9M967.2 643.3L910.9 713.7M967.2 734.8L882.8 798.2M675.2 960.0L967.2 706.7M710.4 960.0L967.2 738.3M823.0 960.0L967.2 826.3M640.0 889.6L865.2 798.2" stroke="#34a01e" stroke-width="1.35" fill="none"/><path d="M513.0 858.7L650.0 717.0L967.5 420.0M513.0 859.5L650.0 721.0L967.5 428.0M513.0 860.9L650.0 726.0L967.5 435.0M513.0 861.8L650.0 731.0L967.5 446.0M513.0 863.5L650.0 739.0L967.5 461.0M513.0 865.0L650.0 747.0L967.5 478.0M513.0 866.1L650.0 752.0L967.5 487.0M513.0 867.0L650.0 757.0L967.5 498.0M513.0 867.8L650.0 762.0L967.5 509.0M513.0 868.9L650.0 768.0L967.5 522.0" stroke="#33a81e" stroke-width="1.4" fill="none"/><path d="M600 797.8L967.5 498" stroke="#2fae1c" stroke-width="10" stroke-dasharray="1.6 6" fill="none" opacity="0.9"/><polygon points="513,869 530,849 650,722 760,620 766,628 650,741 560,830" fill="#36b61c" opacity="0.8"/><polygon points="513,869 650,716 967.5,417 967.5,440 650,733" fill="#2fae1c" opacity="0.25"/>
<path d="M34.8 107.6L-53.6 133.0M37.5 116.7L-50.6 143.3M40.2 125.1L-47.0 154.3M43.4 134.3L-43.1 165.6M46.6 142.8L-39.2 176.1M50.0 151.3L-35.0 186.5M53.8 160.3L-30.3 197.5M57.6 168.5L-25.6 207.7M61.6 176.7L-20.8 217.8M66.1 185.4L-15.3 228.5M70.4 193.4L-9.9 238.3M74.9 201.3L-4.4 248.0M80.0 209.6L1.9 258.3M84.9 217.3L7.9 267.7M89.9 224.8L14.1 277.0M95.6 232.8L21.1 286.8M101.0 240.1L27.7 295.8M107.1 246.9L34.6 304.6M114.0 253.9L42.2 313.9M120.2 260.5L49.4 322.4M126.7 267.7L57.5 331.4M132.8 274.4L63.4 341.1M138.9 281.1L71.2 349.2M145.5 288.2L79.9 357.7M151.8 294.8L87.9 365.5M158.3 301.2L96.0 373.3M165.8 307.5L104.8 381.7M172.9 313.2L113.0 389.5M180.1 318.7L121.3 397.2M188.0 324.5L130.5 405.3M195.5 329.6L139.3 412.6M203.0 334.6L148.3 419.6M211.3 339.8L158.0 427.1M219.1 344.5L167.3 433.9M227.1 349.0L176.7 440.6M235.7 353.5L186.8 447.9M244.2 356.9L196.2 454.8M253.0 359.5L205.7 461.7M262.5 361.8L216.2 469.0M271.4 364.0L226.1 475.5M280.0 366.5L236.2 481.8M289.2 369.3L247.3 488.4M297.9 371.6L257.9 494.0M306.6 373.7L268.8 498.8M315.9 376.0L280.9 503.2M324.5 378.0L292.2 506.6M333.9 380.1L304.6 510.0M342.6 382.0L316.2 512.9M351.3 383.9L327.8 515.7M360.7 385.7L340.3 518.6M369.4 387.3L352.1 520.5M378.2 388.7L364.0 521.8M387.8 390.1L376.9 522.5M396.6 391.2L388.8 522.9M405.5 392.3L400.8 522.9M415.2 393.3L413.6 522.7M424.1 394.0L425.5 522.2M433.2 394.5L437.4 521.5M442.9 394.4L450.1 520.3M451.8 393.3L461.9 519.0M460.7 391.9L473.7 517.5M469.7 390.2L485.9 515.6M479.2 388.1L497.7 513.4M488.5 385.9L509.2 511.1M496.0 384.0L523.3 508.0M507.9 381.0L533.8 505.4M517.7 378.4L544.0 502.5M526.4 376.1L553.6 499.6M535.2 373.8L564.0 496.0M545.8 370.9L577.8 490.4M553.5 368.7L589.6 485.1M560.2 366.8L601.9 479.1M566.7 365.0L612.9 473.5M574.8 362.7L625.0 467.1M582.7 360.3L635.5 461.7M591.9 357.5L645.4 456.6M603.5 353.5L653.9 452.2M612.2 350.0L663.1 447.1M621.0 345.8L673.2 441.1M629.0 341.0L683.0 434.7M637.5 335.7L692.7 428.0M646.5 330.2L702.0 421.2M654.5 325.2L711.3 414.2M661.4 320.8L720.0 407.4M669.2 315.3L730.9 398.5M675.6 310.4L740.5 389.8M681.9 305.2L748.6 381.6M689.0 298.8L756.4 373.0M696.2 292.3L763.0 365.9M704.3 284.9L770.3 358.8M712.5 277.3L779.0 350.9M719.6 270.6L786.5 344.2M726.7 263.9L793.8 337.8M734.8 256.3L802.0 330.6M742.0 249.7L809.2 324.1M751.3 243.3L817.5 316.6M758.5 236.8L824.7 310.0M766.8 229.3L832.9 302.5M774.0 222.8L840.1 295.9M782.3 215.3L848.3 288.4M789.5 208.8L855.5 281.8M797.8 201.3L863.7 274.3M805.0 194.8L870.9 267.7M813.3 187.3L879.1 260.2M820.5 180.8L882.2 249.1M828.8 173.3L890.4 241.6M836.0 166.8L897.7 235.1M844.3 159.3L905.9 227.6M851.5 152.8L913.2 221.1M858.7 146.3L920.4 214.5M867.0 138.8L928.7 207.1M874.2 132.3L935.9 200.5M882.5 124.8L944.2 193.1M889.8 118.2L951.5 186.5M897.9 110.8L959.6 179.1M905.1 104.4L966.8 172.7M913.6 96.7L975.2 165.0" stroke="#2a080c" stroke-width="1.2" fill="none"/>
<path d="M33.2 102.0L-55.0 127.9M36.1 112.0L-52.2 137.8M38.9 121.1L-48.7 149.2M41.8 129.7L-45.1 160.0M44.9 138.3L-41.3 170.5M48.4 147.4L-37.0 181.7M51.9 155.8L-32.7 192.0M55.6 164.1L-28.2 202.2M59.7 172.9L-23.0 213.1M63.8 181.1L-18.0 223.1M68.0 189.1L-12.8 233.0M72.8 197.6L-6.9 243.5M77.4 205.5L-1.3 253.1M82.2 213.2L4.6 262.6M87.6 221.4L11.2 272.7M92.7 228.9L17.6 281.9M98.1 236.2L24.1 291.0M104.1 243.9L31.4 300.5M110.6 250.4L38.3 309.3M117.3 257.4L46.1 318.5M123.5 264.1L53.4 326.9M129.5 270.8L60.0 336.0M136.1 278.0L67.6 345.5M142.2 284.7L75.5 353.5M148.4 291.3L83.6 361.3M155.3 298.3L92.3 369.7M162.0 304.4L100.4 377.5M169.0 310.1L108.6 385.3M176.7 316.2L117.5 393.7M184.0 321.6L125.9 401.3M191.4 326.9L134.5 408.7M199.5 332.4L144.1 416.4M207.2 337.3L153.1 423.4M214.9 342.0L162.3 430.3M223.4 346.9L172.3 437.5M231.4 351.3L181.7 444.2M239.6 355.1L191.1 451.1M248.9 358.4L201.3 458.5M257.7 360.7L210.9 465.4M266.7 362.8L220.7 472.0M276.1 365.3L231.5 478.9M284.6 367.9L241.7 485.2M293.2 370.4L252.1 491.1M302.6 372.8L263.7 496.7M311.2 374.9L274.8 501.1M319.9 377.0L286.1 504.8M329.2 379.1L298.4 508.4M337.9 381.0L310.0 511.3M347.3 383.0L322.4 514.4M356.0 384.8L334.0 517.2M364.7 386.5L345.8 519.6M374.2 388.1L358.5 521.3M383.0 389.4L370.4 522.2M391.9 390.6L382.4 522.7M401.4 391.8L395.2 523.0M410.4 392.8L407.2 522.9M419.3 393.6L419.1 522.5M429.0 394.3L431.9 521.9M438.0 394.5L443.7 520.9M447.0 394.0L455.6 519.8M456.6 392.6L468.3 518.2M465.5 391.0L480.3 516.5M474.5 389.2L492.0 514.5M485.7 386.6L500.4 512.9M491.6 385.1L516.9 509.5M501.1 382.7L527.9 506.9M511.6 380.0L537.5 504.4M522.0 377.3L548.6 501.1M530.8 375.0L558.7 497.9M539.5 372.6L569.4 493.9M549.8 369.8L583.6 487.9M557.0 367.8L595.9 482.1M563.5 365.9L607.5 476.2M571.6 363.6L620.4 469.6M579.5 361.3L631.5 463.8M587.3 358.9L640.8 459.0M597.8 355.5L650.4 454.1M608.6 351.5L659.2 449.3M616.7 348.0L668.2 444.2M625.0 343.4L678.1 437.9M633.1 338.4L687.9 431.3M641.9 333.0L697.2 424.7M650.0 328.1L705.9 418.3M658.0 323.0L715.6 410.9M664.8 318.5L724.6 403.7M672.4 312.9L735.8 394.2M678.8 307.8L744.7 385.6M684.9 302.5L752.1 377.7M693.1 295.1L760.4 368.8M701.3 287.7L767.2 361.8M708.4 281.1L774.7 354.8M715.5 274.5L782.2 348.0M723.7 266.8L790.7 340.6M730.8 260.1L797.8 334.3M738.9 252.5L806.1 326.9M747.1 247.1L813.3 320.4M755.4 239.6L821.6 312.9M762.6 233.1L828.8 306.3M770.9 225.6L837.0 298.8M778.1 219.1L844.2 292.2M786.4 211.6L852.4 284.6M793.6 205.1L859.6 278.1M800.9 198.5L866.7 271.5M809.1 191.1L875.0 263.9M816.4 184.5L882.2 257.5M824.6 177.1L886.3 245.3M831.9 170.5L893.5 238.8M840.1 163.1L901.8 231.3M847.4 156.5L909.0 224.8M855.6 149.1L917.3 217.3M862.9 142.5L924.5 210.8M871.1 135.1L932.8 203.3M878.4 128.5L940.0 196.8M886.6 121.1L948.3 189.3M894.4 114.1L956.0 182.4M901.6 107.6L963.2 175.9M909.6 100.3L971.2 168.6M916.8 93.8L978.5 162.1" stroke="#5a1412" stroke-width="1.5" fill="none"/>
<path d="M33.2 102.0L-55.0 127.9M36.1 112.0L-52.2 137.8M38.9 121.1L-48.7 149.2M41.8 129.7L-45.1 160.0M44.9 138.3L-41.3 170.5M48.4 147.4L-37.0 181.7M51.9 155.8L-32.7 192.0M55.6 164.1L-28.2 202.2M59.7 172.9L-23.0 213.1M63.8 181.1L-18.0 223.1M68.0 189.1L-12.8 233.0M72.8 197.6L-6.9 243.5M77.4 205.5L-1.3 253.1M82.2 213.2L4.6 262.6M87.6 221.4L11.2 272.7M92.7 228.9L17.6 281.9M98.1 236.2L24.1 291.0M104.1 243.9L31.4 300.5M110.6 250.4L38.3 309.3M117.3 257.4L46.1 318.5M123.5 264.1L53.4 326.9M129.5 270.8L60.0 336.0M136.1 278.0L67.6 345.5M142.2 284.7L75.5 353.5M148.4 291.3L83.6 361.3M155.3 298.3L92.3 369.7M162.0 304.4L100.4 377.5M169.0 310.1L108.6 385.3M176.7 316.2L117.5 393.7M184.0 321.6L125.9 401.3M191.4 326.9L134.5 408.7M199.5 332.4L144.1 416.4M207.2 337.3L153.1 423.4M214.9 342.0L162.3 430.3M223.4 346.9L172.3 437.5M231.4 351.3L181.7 444.2M239.6 355.1L191.1 451.1M248.9 358.4L201.3 458.5M257.7 360.7L210.9 465.4M266.7 362.8L220.7 472.0M276.1 365.3L231.5 478.9M284.6 367.9L241.7 485.2M293.2 370.4L252.1 491.1M302.6 372.8L263.7 496.7M311.2 374.9L274.8 501.1M319.9 377.0L286.1 504.8M329.2 379.1L298.4 508.4M337.9 381.0L310.0 511.3M347.3 383.0L322.4 514.4M356.0 384.8L334.0 517.2M364.7 386.5L345.8 519.6M374.2 388.1L358.5 521.3M383.0 389.4L370.4 522.2M391.9 390.6L382.4 522.7M401.4 391.8L395.2 523.0M410.4 392.8L407.2 522.9M419.3 393.6L419.1 522.5M429.0 394.3L431.9 521.9M438.0 394.5L443.7 520.9M447.0 394.0L455.6 519.8M456.6 392.6L468.3 518.2M465.5 391.0L480.3 516.5M474.5 389.2L492.0 514.5M485.7 386.6L500.4 512.9M491.6 385.1L516.9 509.5M501.1 382.7L527.9 506.9M511.6 380.0L537.5 504.4M522.0 377.3L548.6 501.1M530.8 375.0L558.7 497.9M539.5 372.6L569.4 493.9M549.8 369.8L583.6 487.9M557.0 367.8L595.9 482.1M563.5 365.9L607.5 476.2M571.6 363.6L620.4 469.6M579.5 361.3L631.5 463.8M587.3 358.9L640.8 459.0M597.8 355.5L650.4 454.1M608.6 351.5L659.2 449.3M616.7 348.0L668.2 444.2M625.0 343.4L678.1 437.9M633.1 338.4L687.9 431.3M641.9 333.0L697.2 424.7M650.0 328.1L705.9 418.3M658.0 323.0L715.6 410.9M664.8 318.5L724.6 403.7M672.4 312.9L735.8 394.2M678.8 307.8L744.7 385.6M684.9 302.5L752.1 377.7M693.1 295.1L760.4 368.8M701.3 287.7L767.2 361.8M708.4 281.1L774.7 354.8M715.5 274.5L782.2 348.0M723.7 266.8L790.7 340.6M730.8 260.1L797.8 334.3M738.9 252.5L806.1 326.9M747.1 247.1L813.3 320.4M755.4 239.6L821.6 312.9M762.6 233.1L828.8 306.3M770.9 225.6L837.0 298.8M778.1 219.1L844.2 292.2M786.4 211.6L852.4 284.6M793.6 205.1L859.6 278.1M800.9 198.5L866.7 271.5M809.1 191.1L875.0 263.9M816.4 184.5L882.2 257.5M824.6 177.1L886.3 245.3M831.9 170.5L893.5 238.8M840.1 163.1L901.8 231.3M847.4 156.5L909.0 224.8M855.6 149.1L917.3 217.3M862.9 142.5L924.5 210.8M871.1 135.1L932.8 203.3M878.4 128.5L940.0 196.8M886.6 121.1L948.3 189.3M894.4 114.1L956.0 182.4M901.6 107.6L963.2 175.9M909.6 100.3L971.2 168.6M916.8 93.8L978.5 162.1" stroke="#d82808" stroke-width="1.6" stroke-dasharray="22 6" fill="none"/>
<polyline points="60.0,336.0 60.4,336.6 60.6,337.1 60.9,337.6 61.3,338.4 62.2,339.6 63.6,341.3 65.8,343.7 69.0,347.0 73.5,351.5 79.3,357.1 86.0,363.6 93.2,370.6 100.6,377.7 107.7,384.5 114.3,390.8 120.0,396.0 124.8,400.3 129.0,404.0 132.8,407.3 136.3,410.2 139.7,412.9 143.0,415.5 146.4,418.2 150.0,421.0 153.7,423.8 157.2,426.5 160.6,429.1 164.1,431.6 167.7,434.2 171.5,436.9 175.6,439.8 180.0,443.0 184.9,446.5 190.1,450.4 195.7,454.4 201.4,458.6 207.3,462.8 213.1,466.9 218.9,470.8 224.4,474.4 229.7,477.8 234.9,481.0 240.1,484.2 245.2,487.2 250.4,490.1 255.6,492.9 261.1,495.5 266.7,498.0 272.6,500.3 278.7,502.5 285.0,504.5 291.4,506.4 297.9,508.2 304.3,509.9 310.6,511.5 316.7,513.0 322.5,514.4 328.1,515.8 333.4,517.1 338.8,518.3 344.3,519.3 350.1,520.3 356.2,521.1 363.0,521.7 370.4,522.2 378.2,522.6 386.5,522.8 395.0,523.0 403.7,522.9 412.6,522.8 421.3,522.5 430.0,522.0 438.6,521.4 447.4,520.6 456.2,519.7 465.0,518.6 473.9,517.4 482.7,516.1 491.4,514.6 500.0,513.0 508.5,511.3 516.9,509.5 525.3,507.5 533.6,505.4 541.9,503.2 550.1,500.7 558.4,498.0 566.7,495.0 575.1,491.6 583.8,487.9 592.4,483.8 601.1,479.5 609.6,475.2 617.8,470.9 625.6,466.8 633.0,463.0 639.8,459.5 646.0,456.3 651.8,453.3 657.3,450.4 662.8,447.3 668.3,444.1 674.0,440.6 680.0,436.7 686.5,432.3 693.2,427.6 700.2,422.5 707.2,417.3 714.2,412.0 720.9,406.7 727.2,401.6 733.0,396.7 738.2,392.0 742.9,387.4 747.3,382.9 751.4,378.5 755.4,374.1 759.5,369.7 763.6,365.4 768.0,361.0 772.6,356.6 777.4,352.3 782.2,348.0 787.1,343.7 791.9,339.5 796.7,335.2 801.4,331.1 806.0,327.0 810.4,323.0 814.7,319.1 819.0,315.2 823.1,311.4 827.3,307.6 831.5,303.8 835.7,300.0 840.0,296.0 844.6,291.8 849.5,287.3 854.6,282.6 859.6,278.0 864.5,273.6 868.9,269.5 872.8,265.9 876.0,263.0 878.4,260.8 880.2,259.3 881.4,258.2 882.2,257.4 882.8,257.0 883.2,256.6 883.6,256.4 884.0,256.0" fill="none" stroke="#2cbc1c" stroke-width="1.5"/>
<polyline points="100.0,240.0 101.1,241.0 102.3,242.2 103.7,243.6 105.4,245.2 107.4,247.2 109.8,249.6 112.6,252.5 116.0,256.0 120.1,260.3 124.8,265.6 130.2,271.5 135.8,277.7 141.6,284.0 147.4,290.2 152.9,295.9 158.0,301.0 162.6,305.4 167.0,309.5 171.2,313.2 175.3,316.8 179.5,320.2 183.7,323.4 188.2,326.7 193.0,330.0 198.2,333.4 203.7,336.8 209.5,340.1 215.4,343.4 221.3,346.5 227.0,349.4 232.6,352.1 237.8,354.4 242.7,356.4 247.6,358.0 252.3,359.4 256.8,360.5 261.1,361.5 265.3,362.5 269.3,363.4 273.0,364.4 276.3,365.4 279.1,366.2 281.5,367.0 283.9,367.7 286.2,368.4 288.9,369.2 291.9,370.0 295.6,371.0 299.9,372.1 304.8,373.3 310.0,374.6 315.5,375.9 321.1,377.2 326.8,378.6 332.4,379.8 337.8,381.0 343.0,382.1 348.1,383.2 353.2,384.3 358.3,385.3 363.5,386.3 368.8,387.2 374.3,388.1 380.0,389.0 386.1,389.9 392.6,390.7 399.4,391.6 406.3,392.4 413.1,393.1 419.6,393.7 425.6,394.1 431.0,394.4 435.6,394.5 439.5,394.5 443.0,394.4 446.2,394.1 449.3,393.7 452.5,393.2 456.0,392.7 460.0,392.0 464.3,391.3 468.6,390.4 473.0,389.5 477.6,388.5 482.6,387.3 487.9,386.0 493.6,384.6 500.0,383.0 507.2,381.2 515.3,379.0 524.1,376.7 533.1,374.3 542.2,371.9 551.0,369.4 559.3,367.1 566.7,365.0 573.3,363.1 579.6,361.2 585.4,359.5 590.8,357.8 596.0,356.1 600.9,354.5 605.5,352.8 610.0,351.0 614.1,349.2 617.7,347.5 621.0,345.8 624.1,344.0 627.1,342.2 630.1,340.3 633.4,338.2 637.0,336.0 640.9,333.6 645.1,331.1 649.4,328.5 653.8,325.8 658.2,322.9 662.5,320.0 666.8,317.0 671.0,314.0 675.0,310.9 679.0,307.6 682.8,304.3 686.7,300.9 690.5,297.5 694.3,294.0 698.1,290.5 702.0,287.0 706.0,283.3 710.2,279.5 714.5,275.5 718.7,271.5 722.8,267.6 726.6,264.0 730.0,260.8 733.0,258.0 735.5,255.7 737.6,253.7 739.4,252.1 740.9,250.7 742.2,249.5 743.3,248.6 744.2,247.7 745.0,247.0" fill="none" stroke="#2cbc1c" stroke-width="1.5"/>
<polyline points="32.7,101.8 33.5,104.5 34.6,108.4 35.9,112.9 37.3,117.6 38.6,121.9 39.9,125.9 41.3,129.9 42.7,133.8 44.2,137.8 45.6,141.7 47.2,145.6 48.7,149.5 50.3,153.4 52.0,157.3 53.7,161.1 55.4,164.9 57.2,168.7 59.0,172.5 60.8,176.3 62.7,180.1 64.6,183.8 66.6,187.5 68.6,191.2 70.6,194.9 72.7,198.5 74.8,202.1 77.0,205.7 79.2,209.3 81.4,212.9 83.7,216.4 86.0,219.9 88.3,223.4 90.7,226.9 93.1,230.3 95.6,233.7 98.1,237.1 100.6,240.4 103.1,243.8 105.7,247.1 108.4,250.4 111.0,253.6 113.7,256.8 116.4,260.0 119.2,263.2 122.0,266.3 124.8,269.4 127.7,272.5 130.6,275.5 133.5,278.6 136.5,281.5 139.4,284.5 142.5,287.4 145.5,290.3 148.6,293.2 151.7,296.0 154.8,298.8 158.0,301.6 161.2,304.3 164.4,307.0 167.6,309.6 170.9,312.3 174.2,314.9 177.6,317.4 180.9,319.9 184.3,322.4 187.7,324.9 191.1,327.3 194.6,329.7 198.1,332.0 201.6,334.3 205.1,336.6 208.7,338.8 212.3,341.0 215.9,343.2 219.5,345.3 223.1,347.4 226.8,349.4 230.5,351.4 234.2,353.4 237.9,355.3 241.7,357.2 245.5,359.0 249.3,360.8 253.1,362.6 256.9,364.3 260.7,366.0 264.6,367.7 268.5,369.3 272.4,370.8 276.3,372.4 280.2,373.8 284.2,375.3 288.1,376.7 292.1,378.1 296.1,379.4 300.1,380.7 304.1,381.9 308.1,383.1 312.2,384.2 316.2,385.3 320.3,386.4 324.3,387.4 328.4,388.4 332.5,389.3 336.6,390.2 340.7,391.1 344.9,391.9 349.0,392.7 353.1,393.4 357.3,394.1 361.4,394.7 365.6,395.3 369.7,395.8 373.9,396.3 378.1,396.8 382.3,397.2 386.4,397.6 390.6,397.9 394.8,398.2 399.0,398.5 403.2,398.6 407.4,398.8 411.6,398.9 415.8,399.0 420.0,399.0 424.2,399.0 428.4,398.9 432.6,398.8 436.8,398.6 441.0,398.5 445.2,398.2 449.4,397.9 453.6,397.6 457.7,397.2 461.9,396.8 466.1,396.3 470.4,395.8 474.7,395.2 478.8,394.6 482.7,394.1 485.7,393.7 487.8,393.4 490.2,393.0 493.9,392.3 500.0,391.0 509.5,389.0 521.7,386.4 535.1,383.5 548.3,380.2 560.0,376.7 570.1,372.8 579.4,368.5 588.2,364.0 596.5,359.6 604.4,355.4 611.7,351.7 618.2,348.2 624.4,344.8 630.6,341.3 637.0,337.5 643.8,333.4 650.6,329.2 657.5,324.9 664.4,320.3 671.0,315.5 677.4,310.4 683.6,305.1 689.7,299.6 695.8,294.0 702.0,288.5 708.2,283.0 714.4,277.4 720.6,271.7 726.8,266.1 733.0,260.5 739.2,254.9 745.4,249.3 751.6,243.7 757.8,238.1 764.0,232.5 770.2,226.9 776.4,221.3 782.6,215.7 788.8,210.1 795.0,204.5 801.2,198.9 807.4,193.3 813.6,187.7 819.8,182.1 826.0,176.5 832.2,170.9 838.4,165.3 844.6,159.7 850.8,154.1 857.0,148.5 863.2,142.9 869.4,137.3 875.6,131.7 881.8,126.1 888.0,120.5 894.7,114.5 901.9,108.0 908.8,101.7 914.8,96.3 919.0,92.5 919.0,92.5" fill="none" stroke="#19f3f3" stroke-width="3.3" />
<polyline points="19.2,105.7 20.0,108.4 21.1,112.3 22.4,116.9 23.9,121.7 25.3,126.2 26.7,130.4 28.1,134.5 29.5,138.6 31.0,142.7 32.6,146.7 34.1,150.8 35.8,154.8 37.4,158.8 39.1,162.8 40.9,166.8 42.7,170.8 44.5,174.7 46.4,178.6 48.3,182.5 50.2,186.4 52.2,190.3 54.3,194.1 56.3,197.9 58.4,201.7 60.6,205.5 62.8,209.3 65.0,213.0 67.3,216.7 69.6,220.4 72.0,224.0 74.3,227.7 76.8,231.3 79.2,234.8 81.7,238.4 84.3,241.9 86.8,245.4 89.4,248.9 92.1,252.4 94.8,255.8 97.5,259.2 100.2,262.5 103.0,265.9 105.8,269.2 108.7,272.4 111.6,275.7 114.5,278.9 117.5,282.1 120.5,285.2 123.5,288.4 126.6,291.4 129.6,294.5 132.8,297.5 135.9,300.5 139.1,303.5 142.3,306.4 145.6,309.3 148.8,312.2 152.1,315.0 155.5,317.8 158.8,320.5 162.2,323.2 165.6,325.9 169.1,328.6 172.6,331.2 176.1,333.7 179.6,336.3 183.2,338.8 186.7,341.2 190.3,343.7 194.0,346.0 197.6,348.4 201.3,350.7 205.0,353.0 208.7,355.2 212.5,357.4 216.3,359.6 220.1,361.7 223.9,363.7 227.7,365.8 231.6,367.8 235.5,369.7 239.4,371.6 243.3,373.5 247.2,375.3 251.2,377.1 255.2,378.9 259.2,380.6 263.2,382.2 267.2,383.9 271.3,385.4 275.3,387.0 279.4,388.5 283.5,389.9 287.6,391.3 291.8,392.7 295.9,394.0 300.1,395.3 304.2,396.5 308.4,397.7 312.6,398.9 316.8,400.0 321.0,401.0 325.2,402.0 329.5,403.0 333.7,403.9 338.0,404.8 342.2,405.6 346.5,406.4 350.8,407.2 355.1,407.9 359.4,408.5 363.7,409.2 368.0,409.7 372.3,410.2 376.6,410.7 380.9,411.2 385.3,411.5 389.6,411.9 393.9,412.2 398.3,412.4 402.6,412.6 407.0,412.8 411.3,412.9 415.7,413.0 420.0,413.0 424.3,413.0 428.7,412.9 433.0,412.8 437.4,412.6 441.7,412.4 446.1,412.2 450.4,411.9 454.7,411.5 459.1,411.2 463.4,410.7 467.8,410.2 472.2,409.7 476.6,409.1 480.8,408.5 484.7,407.9 487.5,407.5 489.7,407.3 492.6,406.8 496.7,406.0 502.9,404.7 512.4,402.7 524.6,400.1 538.3,397.1 552.0,393.7 564.5,390.0 575.5,385.7 585.6,381.1 594.7,376.4 603.1,371.9 610.9,367.8 618.1,364.1 624.9,360.5 631.3,357.0 637.6,353.4 644.2,349.5 651.0,345.4 658.0,341.1 665.2,336.6 672.4,331.8 679.4,326.7 686.3,321.2 692.8,315.6 699.1,310.0 705.3,304.4 711.3,298.9 717.6,293.4 723.8,287.8 730.0,282.1 736.2,276.5 742.4,270.9 748.6,265.3 754.8,259.7 761.0,254.1 767.2,248.5 773.4,242.9 779.6,237.3 785.8,231.7 792.0,226.1 798.2,220.5 804.4,214.9 810.6,209.3 816.8,203.7 823.0,198.1 829.2,192.5 835.4,186.9 841.6,181.3 847.8,175.7 854.0,170.1 860.2,164.5 866.4,158.9 872.6,153.3 878.8,147.7 885.0,142.1 891.2,136.5 897.4,130.9 904.1,124.8 911.3,118.3 918.2,112.1 924.2,106.7 928.4,102.9 919.0,92.5" fill="none" stroke="#19e6e6" stroke-width="1.7" />
<polyline points="13.9,107.2 14.7,109.9 15.8,113.8 17.2,118.4 18.6,123.3 20.1,127.9 21.5,132.1 22.9,136.3 24.4,140.4 25.9,144.6 27.4,148.7 29.0,152.8 30.7,156.9 32.4,161.0 34.1,165.0 35.9,169.0 37.7,173.0 39.5,177.0 41.4,181.0 43.4,185.0 45.3,188.9 47.4,192.8 49.4,196.7 51.5,200.6 53.7,204.4 55.8,208.2 58.1,212.1 60.3,215.8 62.6,219.6 65.0,223.3 67.3,227.0 69.8,230.7 72.2,234.4 74.7,238.0 77.2,241.6 79.8,245.2 82.4,248.7 85.1,252.2 87.7,255.7 90.5,259.2 93.2,262.6 96.0,266.0 98.8,269.4 101.7,272.8 104.6,276.1 107.5,279.4 110.5,282.6 113.5,285.9 116.5,289.0 119.6,292.2 122.7,295.3 125.8,298.4 129.0,301.5 132.1,304.5 135.4,307.5 138.6,310.5 141.9,313.4 145.2,316.3 148.6,319.2 152.0,322.0 155.4,324.8 158.8,327.5 162.3,330.3 165.8,332.9 169.3,335.6 172.8,338.2 176.4,340.8 180.0,343.3 183.6,345.8 187.3,348.2 191.0,350.7 194.7,353.0 198.4,355.4 202.2,357.7 205.9,359.9 209.8,362.2 213.6,364.3 217.4,366.5 221.3,368.6 225.2,370.6 229.1,372.7 233.0,374.6 237.0,376.6 241.0,378.5 245.0,380.3 249.0,382.1 253.0,383.9 257.0,385.6 261.1,387.3 265.2,389.0 269.3,390.6 273.4,392.1 277.6,393.6 281.7,395.1 285.9,396.5 290.1,397.9 294.3,399.3 298.5,400.6 302.7,401.8 306.9,403.0 311.2,404.2 315.4,405.3 319.7,406.4 324.0,407.4 328.3,408.4 332.6,409.3 336.9,410.2 341.2,411.1 345.5,411.9 349.9,412.6 354.2,413.3 358.6,414.0 362.9,414.6 367.3,415.2 371.7,415.7 376.0,416.2 380.4,416.6 384.8,417.0 389.2,417.4 393.6,417.7 398.0,417.9 402.4,418.1 406.8,418.3 411.2,418.4 415.6,418.5 420.0,418.5 424.4,418.5 428.8,418.4 433.2,418.3 437.6,418.1 442.0,417.9 446.4,417.7 450.8,417.4 455.2,417.0 459.6,416.6 464.0,416.2 468.4,415.7 472.9,415.1 477.3,414.6 481.6,413.9 485.5,413.4 488.2,413.0 490.4,412.7 493.6,412.3 497.9,411.4 504.1,410.1 513.5,408.1 525.8,405.5 539.5,402.5 553.4,399.0 566.2,395.2 577.6,390.8 588.0,386.1 597.3,381.3 605.7,376.8 613.4,372.7 620.7,369.0 627.5,365.4 633.9,361.8 640.4,358.2 647.0,354.3 653.9,350.1 660.9,345.8 668.2,341.2 675.5,336.3 682.8,331.1 689.8,325.5 696.5,319.8 702.8,314.1 708.9,308.5 715.0,303.0 721.2,297.5 727.5,291.8 733.7,286.2 739.9,280.6 746.1,275.0 752.3,269.4 758.5,263.8 764.7,258.2 770.9,252.6 777.1,247.0 783.3,241.4 789.5,235.8 795.7,230.2 801.9,224.6 808.1,219.0 814.3,213.4 820.5,207.8 826.7,202.2 832.9,196.6 839.1,191.0 845.3,185.4 851.5,179.8 857.7,174.2 863.9,168.6 870.1,163.0 876.3,157.4 882.5,151.8 888.7,146.2 894.9,140.6 901.1,135.0 907.8,128.9 915.0,122.4 921.9,116.2 927.9,110.8 932.1,107.0 919.0,92.5" fill="none" stroke="#3fe0e8" stroke-width="1.5" />
<polyline points="9.1,108.6 9.9,111.3 11.0,115.2 12.4,119.8 13.8,124.7 15.3,129.4 16.7,133.7 18.2,137.9 19.7,142.1 21.2,146.3 22.8,150.5 24.4,154.6 26.0,158.8 27.7,162.9 29.5,167.0 31.3,171.1 33.1,175.1 35.0,179.2 36.9,183.2 38.9,187.2 40.9,191.2 42.9,195.1 45.0,199.1 47.1,203.0 49.3,206.9 51.5,210.8 53.8,214.6 56.0,218.4 58.4,222.2 60.7,226.0 63.1,229.7 65.6,233.5 68.1,237.2 70.6,240.8 73.2,244.5 75.8,248.1 78.4,251.7 81.1,255.3 83.8,258.8 86.5,262.3 89.3,265.8 92.1,269.2 95.0,272.6 97.9,276.0 100.8,279.4 103.8,282.7 106.8,286.0 109.8,289.3 112.9,292.5 116.0,295.7 119.1,298.9 122.3,302.0 125.5,305.1 128.7,308.2 132.0,311.2 135.3,314.2 138.6,317.2 142.0,320.1 145.4,323.0 148.8,325.9 152.2,328.7 155.7,331.5 159.2,334.2 162.7,336.9 166.3,339.6 169.9,342.2 173.5,344.8 177.2,347.4 180.8,349.9 184.5,352.4 188.3,354.9 192.0,357.3 195.8,359.6 199.6,362.0 203.4,364.2 207.3,366.5 211.1,368.7 215.0,370.9 218.9,373.0 222.9,375.1 226.8,377.1 230.8,379.1 234.8,381.1 238.8,383.0 242.9,384.9 246.9,386.7 251.0,388.5 255.1,390.3 259.2,392.0 263.4,393.6 267.5,395.2 271.7,396.8 275.9,398.3 280.1,399.8 284.3,401.3 288.5,402.7 292.8,404.0 297.0,405.3 301.3,406.6 305.6,407.8 309.9,409.0 314.2,410.1 318.5,411.2 322.8,412.3 327.2,413.3 331.5,414.2 335.9,415.1 340.3,416.0 344.7,416.8 349.0,417.5 353.4,418.3 357.8,418.9 362.3,419.6 366.7,420.1 371.1,420.7 375.5,421.2 380.0,421.6 384.4,422.0 388.8,422.4 393.3,422.7 397.7,422.9 402.2,423.1 406.6,423.3 411.1,423.4 415.5,423.5 420.0,423.5 424.5,423.5 428.9,423.4 433.4,423.3 437.8,423.1 442.3,422.9 446.7,422.7 451.2,422.4 455.6,422.0 460.0,421.6 464.5,421.2 469.0,420.7 473.5,420.1 478.0,419.5 482.3,418.9 486.2,418.3 488.9,417.9 491.1,417.7 494.4,417.2 498.9,416.3 505.2,415.0 514.6,412.9 526.8,410.4 540.7,407.3 554.7,403.8 567.8,399.9 579.6,395.4 590.2,390.6 599.6,385.7 608.0,381.2 615.7,377.1 623.0,373.4 629.8,369.8 636.4,366.2 642.9,362.5 649.5,358.6 656.5,354.4 663.6,350.0 670.9,345.4 678.4,340.4 685.8,335.0 693.0,329.3 699.8,323.5 706.2,317.8 712.3,312.2 718.4,306.7 724.6,301.2 730.8,295.5 737.1,289.9 743.3,284.3 749.4,278.7 755.6,273.1 761.8,267.5 768.0,261.9 774.2,256.3 780.4,250.7 786.6,245.1 792.8,239.5 799.0,233.9 805.2,228.3 811.4,222.7 817.6,217.1 823.8,211.5 830.0,205.9 836.2,200.3 842.4,194.7 848.6,189.1 854.8,183.5 861.0,177.9 867.2,172.3 873.4,166.7 879.6,161.1 885.8,155.5 892.0,149.9 898.2,144.3 904.4,138.7 911.1,132.6 918.3,126.1 925.3,119.9 931.2,114.5 935.4,110.7 919.0,92.5" fill="none" stroke="#ffff14" stroke-width="3.8" />
<polyline points="10.6,108.2 11.4,110.9 12.5,114.8 13.8,119.4 15.3,124.3 16.7,129.0 18.1,133.2 19.6,137.4 21.1,141.6 22.6,145.8 24.2,149.9 25.8,154.1 27.4,158.2 29.1,162.3 30.9,166.4 32.7,170.5 34.5,174.5 36.4,178.5 38.3,182.5 40.2,186.5 42.2,190.5 44.2,194.4 46.3,198.4 48.4,202.3 50.6,206.1 52.8,210.0 55.0,213.8 57.3,217.6 59.6,221.4 62.0,225.2 64.4,228.9 66.8,232.6 69.3,236.3 71.8,240.0 74.4,243.6 77.0,247.2 79.6,250.8 82.3,254.3 85.0,257.9 87.7,261.4 90.5,264.8 93.3,268.3 96.2,271.7 99.0,275.1 102.0,278.4 104.9,281.7 107.9,285.0 110.9,288.2 114.0,291.5 117.1,294.7 120.2,297.8 123.3,300.9 126.5,304.0 129.8,307.1 133.0,310.1 136.3,313.1 139.6,316.0 142.9,319.0 146.3,321.8 149.7,324.7 153.2,327.5 156.6,330.3 160.1,333.0 163.7,335.7 167.2,338.4 170.8,341.0 174.4,343.6 178.0,346.2 181.7,348.7 185.4,351.2 189.1,353.6 192.8,356.0 196.6,358.4 200.4,360.7 204.2,363.0 208.0,365.2 211.9,367.4 215.7,369.6 219.6,371.7 223.6,373.8 227.5,375.8 231.5,377.8 235.5,379.7 239.5,381.6 243.5,383.5 247.5,385.3 251.6,387.1 255.7,388.9 259.8,390.6 263.9,392.2 268.1,393.8 272.2,395.4 276.4,396.9 280.6,398.4 284.8,399.9 289.0,401.2 293.2,402.6 297.5,403.9 301.7,405.2 306.0,406.4 310.3,407.6 314.6,408.7 318.9,409.8 323.2,410.8 327.5,411.8 331.8,412.7 336.2,413.6 340.5,414.5 344.9,415.3 349.3,416.1 353.7,416.8 358.1,417.5 362.5,418.1 366.9,418.7 371.3,419.2 375.7,419.7 380.1,420.1 384.5,420.5 388.9,420.9 393.4,421.2 397.8,421.4 402.2,421.6 406.7,421.8 411.1,421.9 415.6,422.0 420.0,422.0 424.4,422.0 428.9,421.9 433.3,421.8 437.8,421.6 442.2,421.4 446.6,421.2 451.1,420.9 455.5,420.5 459.9,420.1 464.3,419.7 468.8,419.2 473.4,418.6 477.8,418.0 482.1,417.4 486.0,416.8 488.7,416.5 490.9,416.2 494.2,415.7 498.6,414.9 504.8,413.5 514.3,411.5 526.5,408.9 540.3,405.9 554.3,402.4 567.4,398.5 579.0,394.0 589.5,389.2 598.9,384.4 607.3,379.9 615.0,375.8 622.3,372.1 629.1,368.4 635.6,364.9 642.1,361.2 648.8,357.3 655.7,353.1 662.8,348.8 670.1,344.1 677.5,339.2 684.9,333.8 692.0,328.2 698.8,322.4 705.2,316.7 711.3,311.1 717.4,305.6 723.6,300.1 729.8,294.4 736.1,288.8 742.3,283.2 748.4,277.6 754.6,272.0 760.8,266.4 767.0,260.8 773.2,255.2 779.4,249.6 785.6,244.0 791.8,238.4 798.0,232.8 804.2,227.2 810.4,221.6 816.6,216.0 822.8,210.4 829.0,204.8 835.2,199.2 841.4,193.6 847.6,188.0 853.8,182.4 860.0,176.8 866.2,171.2 872.4,165.6 878.6,160.0 884.8,154.4 891.0,148.8 897.2,143.2 903.4,137.6 910.1,131.5 917.3,125.0 924.2,118.8 930.2,113.4 934.4,109.6 919.0,92.5" fill="none" stroke="#ffffff" stroke-width="1.3" stroke-dasharray="7 5"/>
<polyline points="-11.0,114.4 -10.3,117.1 -9.1,121.0 -7.8,125.8 -6.2,130.9 -4.7,135.8 -3.2,140.4 -1.7,144.8 -0.1,149.2 1.5,153.6 3.2,158.0 4.9,162.4 6.6,166.7 8.4,171.0 10.2,175.3 12.1,179.6 14.0,183.9 16.0,188.1 18.0,192.3 20.1,196.5 22.2,200.7 24.3,204.9 26.5,209.0 28.7,213.1 31.0,217.2 33.3,221.2 35.7,225.3 38.1,229.3 40.5,233.3 43.0,237.2 45.5,241.2 48.1,245.1 50.7,249.0 53.4,252.8 56.0,256.6 58.8,260.4 61.5,264.2 64.3,268.0 67.2,271.7 70.1,275.3 73.0,279.0 76.0,282.6 79.0,286.2 82.0,289.8 85.1,293.3 88.2,296.8 91.3,300.2 94.5,303.7 97.7,307.0 101.0,310.4 104.3,313.7 107.6,317.0 111.0,320.3 114.3,323.5 117.8,326.7 121.2,329.8 124.7,332.9 128.2,336.0 131.8,339.0 135.4,342.0 139.0,345.0 142.7,347.9 146.3,350.8 150.0,353.7 153.8,356.5 157.6,359.2 161.4,362.0 165.2,364.6 169.0,367.3 172.9,369.9 176.8,372.5 180.8,375.0 184.7,377.5 188.7,379.9 192.7,382.3 196.8,384.7 200.8,387.0 204.9,389.3 209.0,391.5 213.1,393.7 217.3,395.8 221.5,397.9 225.7,400.0 229.9,402.0 234.1,404.0 238.4,405.9 242.7,407.8 247.0,409.6 251.3,411.4 255.6,413.1 260.0,414.8 264.4,416.5 268.8,418.1 273.2,419.7 277.6,421.2 282.0,422.6 286.5,424.1 290.9,425.4 295.4,426.8 299.9,428.1 304.4,429.3 309.0,430.5 313.5,431.6 318.0,432.7 322.6,433.7 327.2,434.7 331.7,435.7 336.3,436.6 340.9,437.4 345.5,438.2 350.2,439.0 354.8,439.7 359.4,440.4 364.0,441.0 368.7,441.5 373.3,442.1 378.0,442.5 382.6,442.9 387.3,443.3 392.0,443.6 396.6,443.9 401.3,444.1 406.0,444.3 410.6,444.4 415.3,444.5 420.0,444.5 424.7,444.5 429.4,444.4 434.0,444.3 438.7,444.1 443.4,443.9 448.0,443.6 452.7,443.3 457.4,442.9 462.0,442.5 466.7,442.1 471.5,441.5 476.2,440.9 480.9,440.3 485.3,439.7 489.2,439.1 491.6,438.8 493.9,438.5 498.1,437.9 503.2,436.9 509.6,435.5 518.9,433.5 531.3,430.9 545.4,427.8 560.2,424.1 574.6,419.8 587.7,414.8 599.3,409.5 609.4,404.3 617.9,399.7 625.4,395.7 632.7,392.0 639.8,388.3 646.6,384.5 653.4,380.6 660.3,376.6 667.3,372.4 674.7,367.9 682.4,363.0 690.4,357.6 698.4,351.8 706.3,345.6 713.6,339.3 720.3,333.4 726.4,327.8 732.4,322.4 738.6,316.8 744.9,311.1 751.2,305.4 757.4,299.8 763.5,294.2 769.7,288.7 775.9,283.1 782.1,277.5 788.3,271.9 794.5,266.3 800.7,260.7 806.9,255.1 813.1,249.5 819.3,243.9 825.5,238.3 831.7,232.7 837.9,227.1 844.1,221.5 850.3,215.9 856.5,210.3 862.7,204.7 868.9,199.1 875.1,193.5 881.3,187.9 887.5,182.3 893.7,176.7 899.9,171.1 906.1,165.5 912.3,159.9 918.5,154.3 925.2,148.2 932.4,141.7 939.3,135.4 945.3,130.1 949.5,126.3 919.0,92.5" fill="none" stroke="#f4f414" stroke-width="1.9" />
<polyline points="-30.3,120.0 -29.5,122.7 -28.4,126.6 -27.0,131.4 -25.4,136.7 -23.7,142.0 -22.1,146.8 -20.6,151.4 -18.9,156.0 -17.2,160.6 -15.5,165.2 -13.7,169.7 -11.9,174.3 -10.0,178.8 -8.1,183.3 -6.2,187.7 -4.2,192.2 -2.1,196.6 0.0,201.0 2.2,205.4 4.3,209.8 6.6,214.1 8.9,218.4 11.2,222.7 13.6,227.0 16.0,231.2 18.5,235.5 21.0,239.7 23.5,243.8 26.1,248.0 28.8,252.1 31.4,256.2 34.2,260.2 36.9,264.2 39.7,268.2 42.6,272.2 45.5,276.1 48.4,280.0 51.4,283.9 54.4,287.8 57.5,291.6 60.6,295.4 63.7,299.1 66.9,302.8 70.1,306.5 73.3,310.1 76.6,313.8 79.9,317.3 83.3,320.9 86.7,324.4 90.1,327.9 93.6,331.3 97.1,334.7 100.7,338.1 104.2,341.4 107.9,344.7 111.5,347.9 115.2,351.1 118.9,354.3 122.6,357.4 126.4,360.5 130.2,363.6 134.1,366.6 138.0,369.6 141.9,372.5 145.8,375.4 149.8,378.3 153.8,381.1 157.8,383.8 161.8,386.6 165.9,389.2 170.0,391.9 174.2,394.5 178.3,397.0 182.5,399.5 186.8,402.0 191.0,404.4 195.3,406.8 199.6,409.1 203.9,411.4 208.2,413.7 212.6,415.8 217.0,418.0 221.4,420.1 225.8,422.2 230.3,424.2 234.7,426.1 239.2,428.0 243.7,429.9 248.3,431.7 252.8,433.5 257.4,435.2 262.0,436.9 266.6,438.6 271.2,440.1 275.8,441.7 280.5,443.2 285.2,444.6 289.9,446.0 294.5,447.3 299.3,448.6 304.0,449.8 308.7,451.0 313.5,452.2 318.2,453.3 323.0,454.3 327.8,455.3 332.6,456.2 337.4,457.1 342.2,458.0 347.0,458.8 351.9,459.5 356.7,460.2 361.5,460.8 366.4,461.4 371.2,461.9 376.1,462.4 381.0,462.9 385.8,463.2 390.7,463.6 395.6,463.9 400.5,464.1 405.3,464.3 410.2,464.4 415.1,464.5 420.0,464.5 424.9,464.5 429.8,464.4 434.7,464.3 439.5,464.1 444.4,463.9 449.3,463.6 454.2,463.2 459.0,462.9 463.9,462.4 468.8,461.9 473.8,461.4 478.8,460.8 483.6,460.1 488.2,459.5 492.1,458.9 494.1,458.6 496.6,458.3 501.6,457.6 507.3,456.5 513.8,455.0 523.0,453.1 535.5,450.5 550.0,447.2 565.5,443.4 581.0,438.7 595.5,433.2 608.1,427.4 618.7,422.0 627.3,417.4 634.7,413.5 641.9,409.7 649.3,405.9 656.4,402.0 663.4,397.9 670.5,393.8 677.7,389.5 685.3,384.8 693.3,379.7 701.8,374.1 710.5,367.7 719.0,361.0 726.8,354.4 733.7,348.2 739.8,342.6 745.7,337.3 751.9,331.7 758.3,325.9 764.6,320.2 770.8,314.6 776.9,309.1 783.1,303.5 789.3,297.9 795.5,292.3 801.7,286.7 807.9,281.1 814.1,275.5 820.3,269.9 826.5,264.3 832.7,258.7 838.9,253.1 845.1,247.5 851.3,241.9 857.5,236.3 863.7,230.7 869.9,225.1 876.1,219.5 882.3,213.9 888.5,208.3 894.7,202.7 900.9,197.1 907.1,191.5 913.3,185.9 919.5,180.3 925.7,174.7 931.9,169.1 938.6,163.1 945.8,156.6 952.7,150.3 958.7,144.9 962.9,141.1 919.0,92.5" fill="none" stroke="#ffff14" stroke-width="3.8" />
<polyline points="-31.7,120.4 -30.9,123.1 -29.8,127.0 -28.4,131.8 -26.8,137.2 -25.2,142.4 -23.6,147.3 -22.0,151.9 -20.3,156.5 -18.6,161.1 -16.9,165.7 -15.1,170.3 -13.3,174.8 -11.4,179.4 -9.5,183.9 -7.5,188.4 -5.5,192.8 -3.5,197.3 -1.3,201.7 0.8,206.1 3.0,210.5 5.3,214.8 7.5,219.2 9.9,223.5 12.3,227.7 14.7,232.0 17.2,236.2 19.7,240.4 22.3,244.6 24.9,248.8 27.5,252.9 30.2,257.0 32.9,261.1 35.7,265.1 38.5,269.1 41.4,273.1 44.3,277.0 47.2,281.0 50.2,284.8 53.2,288.7 56.3,292.5 59.4,296.3 62.5,300.1 65.7,303.8 68.9,307.5 72.2,311.2 75.5,314.8 78.8,318.4 82.2,321.9 85.6,325.4 89.1,328.9 92.6,332.4 96.1,335.8 99.6,339.2 103.2,342.5 106.8,345.8 110.5,349.1 114.2,352.3 117.9,355.5 121.7,358.6 125.5,361.7 129.3,364.8 133.2,367.8 137.0,370.8 141.0,373.7 144.9,376.6 148.9,379.5 152.9,382.3 156.9,385.1 161.0,387.8 165.1,390.5 169.2,393.1 173.4,395.7 177.6,398.3 181.8,400.8 186.0,403.3 190.3,405.7 194.5,408.1 198.8,410.5 203.2,412.7 207.5,415.0 211.9,417.2 216.3,419.3 220.7,421.5 225.2,423.5 229.6,425.5 234.1,427.5 238.6,429.4 243.2,431.3 247.7,433.1 252.3,434.9 256.9,436.6 261.5,438.3 266.1,440.0 270.7,441.6 275.4,443.1 280.0,444.6 284.7,446.0 289.4,447.4 294.1,448.8 298.9,450.1 303.6,451.3 308.4,452.5 313.1,453.6 317.9,454.7 322.7,455.8 327.5,456.8 332.3,457.7 337.1,458.6 342.0,459.4 346.8,460.2 351.6,461.0 356.5,461.7 361.3,462.3 366.2,462.9 371.1,463.4 376.0,463.9 380.8,464.4 385.7,464.7 390.6,465.1 395.5,465.4 400.4,465.6 405.3,465.8 410.2,465.9 415.1,466.0 420.0,466.0 424.9,466.0 429.8,465.9 434.7,465.8 439.6,465.6 444.5,465.4 449.4,465.1 454.3,464.7 459.2,464.4 464.0,463.9 469.0,463.4 474.0,462.9 479.0,462.3 483.8,461.6 488.4,461.0 492.3,460.4 494.3,460.1 496.8,459.8 501.8,459.0 507.6,457.9 514.1,456.5 523.4,454.5 535.8,451.9 550.3,448.7 565.9,444.9 581.5,440.2 596.0,434.6 608.7,428.8 619.4,423.3 628.0,418.7 635.4,414.8 642.6,411.1 650.0,407.2 657.1,403.3 664.2,399.2 671.3,395.1 678.5,390.7 686.1,386.1 694.1,381.0 702.6,375.3 711.4,368.9 720.0,362.2 727.8,355.5 734.7,349.3 740.9,343.7 746.7,338.4 752.9,332.8 759.3,327.1 765.6,321.4 771.8,315.7 777.9,310.2 784.1,304.6 790.3,299.0 796.5,293.4 802.7,287.8 808.9,282.2 815.1,276.6 821.3,271.0 827.5,265.4 833.7,259.8 839.9,254.2 846.1,248.6 852.3,243.0 858.5,237.4 864.7,231.8 870.9,226.2 877.1,220.6 883.3,215.0 889.5,209.4 895.7,203.8 901.9,198.2 908.1,192.6 914.3,187.0 920.5,181.4 926.7,175.8 932.9,170.2 939.6,164.2 946.8,157.7 953.7,151.4 959.7,146.0 963.9,142.2 919.0,92.5" fill="none" stroke="#ffffff" stroke-width="1.3" stroke-dasharray="7 5"/>
<polyline points="-34.6,121.3 -33.8,123.9 -32.7,127.8 -31.3,132.7 -29.7,138.0 -28.0,143.3 -26.4,148.2 -24.8,152.9 -23.2,157.5 -21.5,162.2 -19.7,166.8 -17.9,171.4 -16.1,176.0 -14.2,180.5 -12.3,185.1 -10.3,189.6 -8.3,194.1 -6.2,198.5 -4.0,203.0 -1.9,207.4 0.3,211.8 2.6,216.2 4.9,220.6 7.3,224.9 9.7,229.2 12.1,233.5 14.6,237.8 17.1,242.0 19.7,246.2 22.3,250.4 25.0,254.5 27.7,258.6 30.4,262.7 33.2,266.8 36.1,270.8 39.0,274.8 41.9,278.8 44.8,282.8 47.8,286.7 50.9,290.6 54.0,294.4 57.1,298.2 60.3,302.0 63.5,305.8 66.7,309.5 70.0,313.2 73.3,316.8 76.7,320.4 80.1,324.0 83.5,327.5 87.0,331.0 90.5,334.5 94.0,337.9 97.6,341.3 101.2,344.7 104.8,348.0 108.5,351.3 112.2,354.5 116.0,357.7 119.8,360.9 123.6,364.0 127.4,367.1 131.3,370.2 135.2,373.2 139.2,376.1 143.2,379.0 147.2,381.9 151.2,384.8 155.3,387.6 159.4,390.3 163.5,393.0 167.6,395.7 171.8,398.3 176.0,400.9 180.2,403.4 184.5,405.9 188.8,408.3 193.1,410.7 197.4,413.1 201.8,415.4 206.2,417.7 210.6,419.9 215.0,422.0 219.5,424.2 223.9,426.3 228.4,428.3 232.9,430.3 237.5,432.2 242.0,434.1 246.6,435.9 251.2,437.7 255.8,439.5 260.5,441.2 265.1,442.8 269.8,444.4 274.5,445.9 279.2,447.4 283.9,448.9 288.6,450.3 293.3,451.6 298.1,453.0 302.9,454.2 307.7,455.4 312.4,456.6 317.3,457.7 322.1,458.7 326.9,459.7 331.7,460.7 336.6,461.6 341.5,462.4 346.3,463.2 351.2,463.9 356.1,464.6 361.0,465.3 365.9,465.9 370.8,466.4 375.7,466.9 380.6,467.3 385.5,467.7 390.4,468.1 395.3,468.4 400.3,468.6 405.2,468.8 410.1,468.9 415.1,469.0 420.0,469.0 424.9,469.0 429.9,468.9 434.8,468.8 439.7,468.6 444.7,468.4 449.6,468.1 454.5,467.7 459.4,467.3 464.3,466.9 469.3,466.4 474.3,465.8 479.3,465.2 484.2,464.6 488.9,463.9 492.7,463.3 494.7,463.1 497.2,462.8 502.4,462.0 508.2,460.9 514.7,459.4 524.0,457.5 536.4,454.9 551.0,451.6 566.6,447.7 582.4,443.0 597.2,437.4 610.0,431.5 620.8,426.0 629.4,421.3 636.8,417.5 644.0,413.7 651.4,409.8 658.6,405.9 665.7,401.8 672.8,397.6 680.0,393.3 687.6,388.7 695.8,383.5 704.3,377.8 713.2,371.3 721.9,364.5 729.7,357.8 736.7,351.5 742.9,345.9 748.7,340.6 755.0,335.1 761.4,329.3 767.6,323.6 773.8,318.0 780.0,312.4 786.1,306.8 792.3,301.2 798.5,295.6 804.7,290.0 810.9,284.4 817.1,278.8 823.3,273.2 829.5,267.6 835.7,262.0 841.9,256.4 848.1,250.8 854.3,245.2 860.5,239.6 866.7,234.0 872.9,228.4 879.1,222.8 885.3,217.2 891.5,211.6 897.7,206.0 903.9,200.4 910.1,194.8 916.3,189.2 922.5,183.6 928.7,178.0 934.9,172.4 941.6,166.4 948.8,159.9 955.8,153.6 961.7,148.3 965.9,144.4 919.0,92.5" fill="none" stroke="#3fe0e8" stroke-width="1.5" />
<polyline points="-40.8,123.1 -40.1,125.7 -38.9,129.6 -37.5,134.5 -35.9,139.9 -34.2,145.3 -32.6,150.3 -30.9,155.0 -29.3,159.7 -27.6,164.4 -25.8,169.1 -24.0,173.8 -22.1,178.4 -20.2,183.0 -18.2,187.6 -16.2,192.2 -14.2,196.8 -12.1,201.3 -9.9,205.8 -7.7,210.3 -5.5,214.8 -3.2,219.2 -0.8,223.6 1.6,228.0 4.0,232.4 6.5,236.7 9.0,241.1 11.6,245.4 14.2,249.6 16.8,253.9 19.5,258.1 22.3,262.2 25.1,266.4 27.9,270.5 30.8,274.6 33.7,278.7 36.7,282.7 39.7,286.7 42.7,290.7 45.8,294.6 48.9,298.5 52.1,302.4 55.3,306.2 58.5,310.0 61.8,313.8 65.1,317.5 68.5,321.2 71.9,324.9 75.4,328.5 78.8,332.1 82.4,335.6 85.9,339.2 89.5,342.6 93.1,346.1 96.8,349.5 100.5,352.9 104.2,356.2 108.0,359.5 111.8,362.7 115.6,365.9 119.5,369.1 123.4,372.2 127.3,375.3 131.3,378.3 135.3,381.3 139.3,384.3 143.4,387.2 147.5,390.1 151.6,392.9 155.8,395.7 159.9,398.5 164.1,401.2 168.4,403.8 172.6,406.4 176.9,409.0 181.3,411.5 185.6,414.0 190.0,416.4 194.4,418.8 198.8,421.2 203.2,423.5 207.7,425.7 212.2,427.9 216.7,430.1 221.2,432.2 225.8,434.2 230.4,436.2 235.0,438.2 239.6,440.1 244.2,442.0 248.9,443.8 253.6,445.6 258.3,447.3 263.0,448.9 267.7,450.6 272.4,452.1 277.2,453.6 282.0,455.1 286.8,456.5 291.6,457.9 296.4,459.2 301.3,460.5 306.1,461.7 311.0,462.9 315.8,464.0 320.7,465.1 325.6,466.1 330.5,467.0 335.4,468.0 340.4,468.8 345.3,469.6 350.2,470.4 355.2,471.1 360.2,471.7 365.1,472.3 370.1,472.9 375.1,473.4 380.0,473.8 385.0,474.2 390.0,474.6 395.0,474.8 400.0,475.1 405.0,475.3 410.0,475.4 415.0,475.5 420.0,475.5 425.0,475.5 430.0,475.4 435.0,475.3 440.0,475.1 445.0,474.8 450.0,474.6 455.0,474.2 460.0,473.8 464.9,473.4 470.0,472.9 475.1,472.3 480.2,471.7 485.1,471.0 489.8,470.4 493.6,469.8 495.6,469.5 498.1,469.2 503.5,468.4 509.5,467.2 516.1,465.8 525.3,463.8 537.8,461.2 552.5,457.9 568.3,454.0 584.5,449.2 599.7,443.4 612.9,437.3 623.8,431.7 632.5,427.1 639.8,423.2 647.0,419.5 654.5,415.6 661.7,411.6 669.0,407.5 676.1,403.2 683.4,398.9 691.1,394.2 699.3,388.9 708.1,383.1 717.1,376.5 726.0,369.5 734.0,362.6 741.1,356.3 747.2,350.7 753.1,345.4 759.3,339.9 765.7,334.1 772.0,328.4 778.2,322.8 784.3,317.2 790.5,311.7 796.7,306.1 802.9,300.5 809.1,294.9 815.3,289.3 821.5,283.7 827.7,278.1 833.9,272.5 840.1,266.9 846.3,261.3 852.5,255.7 858.7,250.1 864.9,244.5 871.1,238.9 877.3,233.3 883.5,227.7 889.7,222.1 895.9,216.5 902.1,210.9 908.3,205.3 914.5,199.7 920.7,194.1 926.9,188.5 933.1,182.9 939.3,177.3 946.0,171.2 953.2,164.7 960.1,158.5 966.1,153.1 970.3,149.3 919.0,92.5" fill="none" stroke="#19e6e6" stroke-width="1.7" />
<polyline points="-54.7,127.1 -54.0,129.7 -52.9,133.6 -51.4,138.6 -49.8,144.2 -48.0,149.8 -46.3,154.9 -44.6,159.8 -42.9,164.7 -41.1,169.5 -39.3,174.3 -37.5,179.1 -35.5,183.9 -33.6,188.7 -31.5,193.4 -29.5,198.1 -27.3,202.8 -25.2,207.5 -23.0,212.1 -20.7,216.8 -18.4,221.4 -16.0,225.9 -13.6,230.5 -11.1,235.0 -8.6,239.5 -6.1,244.0 -3.5,248.4 -0.8,252.9 1.9,257.3 4.6,261.6 7.4,266.0 10.2,270.3 13.1,274.5 16.0,278.8 19.0,283.0 22.0,287.2 25.0,291.3 28.1,295.5 31.2,299.6 34.4,303.6 37.6,307.6 40.9,311.6 44.2,315.6 47.6,319.5 50.9,323.4 54.4,327.2 57.8,331.0 61.3,334.8 64.9,338.5 68.5,342.2 72.1,345.9 75.8,349.5 79.5,353.1 83.2,356.7 87.0,360.2 90.8,363.6 94.6,367.1 98.5,370.4 102.4,373.8 106.4,377.1 110.4,380.4 114.4,383.6 118.4,386.8 122.5,389.9 126.7,393.0 130.8,396.0 135.0,399.0 139.2,402.0 143.5,404.9 147.7,407.8 152.0,410.6 156.4,413.4 160.7,416.1 165.1,418.8 169.6,421.5 174.0,424.1 178.5,426.6 183.0,429.1 187.5,431.6 192.1,434.0 196.6,436.4 201.2,438.7 205.9,441.0 210.5,443.2 215.2,445.3 219.9,447.5 224.6,449.5 229.3,451.6 234.1,453.5 238.9,455.5 243.7,457.3 248.5,459.1 253.3,460.9 258.2,462.6 263.1,464.3 268.0,465.9 272.9,467.5 277.8,469.0 282.7,470.5 287.7,471.9 292.7,473.2 297.6,474.5 302.6,475.8 307.7,477.0 312.7,478.2 317.7,479.2 322.8,480.3 327.8,481.3 332.9,482.2 338.0,483.1 343.0,483.9 348.1,484.7 353.2,485.4 358.3,486.1 363.5,486.7 368.6,487.3 373.7,487.8 378.8,488.3 384.0,488.7 389.1,489.0 394.3,489.3 399.4,489.6 404.5,489.8 409.7,489.9 414.8,490.0 420.0,490.0 425.2,490.0 430.3,489.9 435.5,489.8 440.6,489.6 445.7,489.3 450.9,489.0 456.0,488.7 461.2,488.3 466.3,487.8 471.5,487.3 476.8,486.7 482.0,486.1 487.1,485.4 491.9,484.7 495.7,484.1 497.4,483.9 500.0,483.6 506.0,482.7 512.5,481.4 519.1,480.0 528.3,478.0 540.8,475.4 555.8,472.1 572.1,468.0 589.1,462.9 605.3,456.7 619.2,450.4 630.5,444.6 639.3,439.9 646.5,436.1 653.7,432.4 661.4,428.3 668.8,424.2 676.2,420.0 683.5,415.7 690.9,411.3 698.7,406.5 707.2,401.1 716.3,395.0 725.9,388.1 735.2,380.7 743.6,373.5 750.8,367.1 757.0,361.5 762.8,356.2 769.0,350.7 775.4,344.9 781.8,339.1 787.9,333.5 794.0,328.0 800.2,322.4 806.4,316.8 812.6,311.2 818.8,305.6 825.0,300.0 831.2,294.4 837.4,288.8 843.6,283.2 849.8,277.6 856.0,272.0 862.2,266.4 868.4,260.8 874.6,255.2 880.8,249.6 887.0,244.0 893.2,238.4 899.4,232.8 905.6,227.2 911.8,221.6 918.0,216.0 924.2,210.4 930.4,204.8 936.6,199.2 942.8,193.6 949.0,188.0 955.7,182.0 962.9,175.5 969.8,169.2 975.8,163.8 980.0,160.0 919.0,92.5" fill="none" stroke="#19f3f3" stroke-width="3.3" />
<path d="M286.7 258L236.7 354.4M395.5 258Q392.5 330 388.5 397M415 258Q411 330 406.7 397.5M518 258L559 375M656 256L693 296.7M760 354L804 400L840 433L887 488M860 270L967.5 387.5" stroke="#19f019" stroke-width="3.3" fill="none"/>
<path d="M448 898L385 957" stroke="#4bc41c" stroke-width="3" fill="none"/>
<path d="M967.5 410.5L497 852" stroke="#58c81c" stroke-width="2.2" fill="none"/>
<path d="M69 354L497 853M787.8 957L967.6 788.4" stroke="#ffff14" stroke-width="2.8" fill="none"/>
<path d="M640 718L448 898M967.5 410.5L887 486" stroke="#ffff14" stroke-width="2.3" fill="none"/>
<path d="M887 486L640 718" stroke="#f4f414" stroke-width="1.9" stroke-dasharray="11 7" fill="none"/>
<polygon points="452.4,534.4 465.0,537.0 499.0,544.0 536.8,568.5 567.4,579.3 574.6,588.3 578.5,597.3 578.2,627.8 574.6,645.8 565.6,674.5 511.7,702.4 470.4,702.4 436.2,696.0 397.6,671.8 385.9,635.0 367.0,618.0 368.0,602.6 371.6,581.0 388.6,560.4 427.3,540.7" fill="none" stroke="#c8943c" stroke-width="1.3"/>
<path d="M433.9 558.6h10M438.9 553.6v10M472.6 559.9h10M477.6 554.9v10M411.5 567.6h10M416.5 562.6v10M466.8 574.8h10M471.8 569.8v10M517.5 577.9h10M522.5 572.9v10M429.1 585.6h10M434.1 580.6v10M396.2 592.8h10M401.2 587.8v10M469.5 594.0h10M474.5 589.0v10M453.3 599.0h10M458.3 594.0v10M481.9 601.7h10M486.9 596.7v10M519.3 604.4h10M524.3 599.4v10M543.2 604.8h10M548.2 599.8v10M391.7 608.9h10M396.7 603.9v10M420.1 609.3h10M425.1 604.3v10M441.1 608.0h10M446.1 603.0v10M495.0 610.7h10M500.0 605.7v10M441.1 621.5h10M446.1 616.5v10M496.8 621.5h10M501.8 616.5v10M550.7 624.2h10M555.7 619.2v10M397.5 631.8h10M402.5 626.8v10M443.8 633.2h10M448.8 628.2v10M487.8 633.2h10M492.8 628.2v10M456.0 638.9h10M461.0 633.9v10M431.2 643.0h10M436.2 638.0v10M516.2 640.7h10M521.2 635.7v10M545.0 642.7h10M550.0 637.7v10M406.6 644.9h10M411.6 639.9v10M405.2 657.8h10M410.2 652.8v10M472.6 655.6h10M477.6 650.6v10M538.7 666.4h10M543.7 661.4v10M424.6 672.7h10M429.6 667.7v10M511.7 675.4h10M516.7 670.4v10M438.1 679.9h10M443.1 674.9v10M465.0 683.1h10M470.0 678.1v10M483.3 679.5h10M488.3 674.5v10M476.3 632.7v10" stroke="#dcc53c" stroke-width="1.3" fill="none"/>
</svg>
<svg class="abs" style="left:998px;top:258px" width="898" height="699" viewBox="998 258 898 699">
<defs><linearGradient id="gg" x1="0" y1="0" x2="0" y2="1"><stop offset="0" stop-color="#2bb00c"/><stop offset="0.25" stop-color="#27a70b"/><stop offset="1" stop-color="#26a30a"/></linearGradient></defs>
<rect x="998" y="258" width="898" height="699" fill="url(#gg)"/>
<polygon points="998,258 998.0,278.7 1013.6,279.5 1036.2,280.7 1060.0,282.0 1084.0,283.3 1109.2,284.8 1133.7,286.0 1155.9,287.0 1177.3,287.7 1200.0,288.5 1225.9,289.3 1253.1,290.0 1277.5,290.7 1296.7,291.5 1313.0,292.2 1330.0,293.0 1349.8,294.1 1370.1,295.2 1387.7,295.5 1400.1,294.2 1409.7,292.0 1421.0,290.7 1435.8,291.0 1452.2,292.0 1469.0,293.0 1486.0,293.7 1503.3,294.4 1520.0,295.0 1535.4,295.6 1550.2,296.1 1565.0,296.5 1579.8,296.8 1594.6,296.9 1610.0,297.0 1627.0,297.1 1644.7,297.1 1661.0,297.0 1675.1,296.8 1687.9,296.4 1700.0,296.0 1711.2,295.5 1721.7,294.9 1732.7,294.0 1744.9,292.7 1757.6,291.2 1770.0,289.5 1781.3,287.7 1792.4,285.8 1804.6,283.5 1818.9,280.8 1834.4,277.7 1850.0,274.5 1867.0,270.8 1884.1,267.1 1896.0,264.4 1896,258" fill="#000"/>
<polygon points="1700,296 1800,284 1896,270 1896,330 1800,322" fill="#30b412" opacity="0.6"/>
<polygon points="997.5,670.8 1005.3,669.2 1016.6,666.9 1028.9,664.3 1040.0,662.0 1049.3,660.0 1058.0,658.2 1066.4,656.4 1075.0,654.5 1083.6,652.6 1092.2,650.6 1100.9,648.6 1110.0,646.5 1119.9,644.2 1130.3,641.7 1140.6,639.2 1150.0,637.0 1158.4,635.0 1166.2,633.2 1173.4,631.5 1180.0,630.0 1185.0,628.9 1188.8,628.2 1193.1,627.2 1200.0,625.5 1210.6,622.7 1223.8,619.3 1237.5,615.6 1250.0,612.0 1260.8,608.7 1270.9,605.5 1280.6,602.2 1290.0,599.0 1299.1,595.8 1307.8,592.8 1316.4,589.5 1325.0,586.0 1333.7,582.1 1342.5,578.0 1351.2,573.6 1360.0,569.0 1369.0,564.1 1378.0,558.8 1386.9,553.5 1395.4,548.3 1403.3,543.4 1410.9,538.5 1418.1,533.7 1425.0,529.0 1431.3,524.6 1437.0,520.4 1442.9,515.8 1449.6,510.4 1457.9,503.5 1467.2,495.5 1476.2,487.5 1483.4,480.6 1488.2,475.1 1491.5,470.4 1493.9,466.1 1496.0,462.0 1497.9,457.8 1499.3,453.8 1500.4,450.1 1501.0,447.0 1501.3,444.8 1501.2,443.3 1500.8,441.9 1500.0,440.0 1498.9,437.3 1497.4,434.1 1495.6,430.8 1493.8,427.5 1491.8,424.4 1489.8,421.2 1487.5,418.1 1485.0,415.0 1482.3,411.8 1479.3,408.7 1476.1,405.5 1472.5,402.5 1468.4,399.5 1463.8,396.6 1459.2,393.8 1455.0,391.2 1451.3,389.1 1448.0,387.3 1444.7,385.6 1441.2,383.8 1437.5,381.6 1433.6,379.4 1429.8,377.1 1426.2,375.0 1422.8,373.0 1419.4,371.2 1416.5,369.3 1414.4,367.5 1413.7,365.6 1414.0,363.7 1414.4,361.8 1413.8,360.0 1411.7,358.3 1408.9,356.8 1405.6,355.3 1402.5,353.8 1399.5,352.1 1396.3,350.5 1393.2,348.9 1390.0,347.5 1386.9,346.2 1383.8,345.1 1380.6,344.1 1377.5,343.0 1374.4,342.0 1371.2,341.1 1368.1,340.0 1365.0,338.8 1361.9,337.1 1358.8,335.2 1355.6,333.3 1352.5,331.2 1349.1,329.0 1345.5,326.7 1342.2,324.5 1340.0,323.0 1320.0,322.5 1320.0,322.5 1330.0,331.2 1340.0,338.0 1347.5,341.2 1360.0,344.4 1370.0,350.0 1377.5,355.0 1386.0,360.0 1388.8,363.8 1387.5,368.8 1390.0,373.8 1390.0,373.8 1391.2,374.8 1393.0,376.2 1395.1,378.0 1397.5,380.0 1400.3,382.2 1403.4,384.8 1406.8,387.4 1410.0,390.0 1413.2,392.5 1416.4,395.0 1419.6,397.5 1422.5,400.0 1425.3,402.6 1428.0,405.2 1430.4,407.7 1432.5,410.0 1434.2,412.1 1435.5,413.9 1436.5,415.7 1437.5,417.5 1438.4,419.4 1439.1,421.2 1439.7,423.1 1440.0,425.0 1440.1,426.9 1439.9,428.8 1439.5,430.6 1438.8,432.5 1437.6,434.4 1436.0,436.3 1434.3,438.2 1432.5,440.0 1430.9,441.6 1429.4,443.1 1427.5,444.8 1425.0,447.0 1421.9,449.8 1418.2,453.1 1414.0,456.6 1409.0,460.3 1403.3,464.1 1397.0,468.1 1389.9,472.3 1381.9,476.6 1372.6,481.1 1362.3,485.8 1351.5,490.7 1341.0,495.5 1330.9,500.5 1320.8,505.7 1310.7,510.7 1300.6,515.3 1290.8,519.2 1281.2,522.5 1271.2,525.8 1260.0,529.5 1247.3,533.7 1233.4,538.1 1219.1,542.6 1205.0,547.0 1191.7,551.1 1178.8,555.2 1165.2,559.3 1150.0,563.5 1132.7,568.0 1113.9,572.6 1094.4,577.3 1075.0,582.0 1054.0,587.2 1031.6,592.7 1011.5,597.6 997.5,601.0" fill="#16fb12"/>
<polygon points="997.5,623.3 1011.5,619.9 1031.6,615.0 1054.0,609.6 1075.0,604.5 1094.4,599.9 1113.9,595.2 1132.7,590.7 1150.0,586.3 1165.2,582.1 1178.8,578.1 1191.7,574.1 1205.0,570.0 1219.1,565.5 1233.4,560.9 1247.3,556.3 1260.0,552.0 1271.2,548.2 1281.2,544.8 1290.8,541.4 1300.6,537.4 1310.7,532.7 1320.8,527.6 1330.9,522.3 1341.0,517.2 1351.2,512.4 1361.4,507.8 1371.7,503.1 1381.9,498.2 1392.4,492.9 1403.1,487.4 1413.3,481.9 1422.5,476.6 1430.6,471.5 1437.8,466.5 1444.2,461.8 1449.6,457.6 1453.9,453.9 1457.1,450.6 1459.7,447.7 1462.0,445.0 1464.0,442.7 1465.7,440.6 1466.9,438.8 1468.0,437.0 1468.8,435.2 1469.4,433.5 1469.7,431.8 1470.0,430.0 1470.3,428.3 1470.4,426.6 1470.4,424.7 1470.0,422.5 1469.2,419.7 1468.2,416.4 1466.8,413.1 1465.0,410.0 1462.7,407.3 1459.8,404.8 1456.8,402.4 1453.8,400.0 1450.7,397.5 1447.6,394.9 1444.4,392.4 1441.2,390.0 1438.1,387.7 1435.0,385.5 1431.9,383.3 1428.8,381.2 1425.5,379.2 1422.2,377.3 1419.1,375.4 1416.2,373.8 1413.7,372.4 1411.4,371.2 1409.4,370.1 1408.0,368.8 1407.6,367.0 1407.9,365.1 1408.1,363.1 1407.5,361.2 1405.7,359.6 1403.2,358.1 1400.4,356.6 1397.5,355.0 1394.6,353.1 1391.4,351.1 1388.2,349.1 1385.0,347.5 1381.9,346.3 1378.8,345.4 1375.6,344.6 1372.5,343.8 1369.3,342.7 1366.1,341.7 1362.9,340.6 1360.0,339.4 1357.4,338.2 1355.0,337.0 1352.6,335.6 1350.0,333.8 1346.8,331.1 1343.1,327.8 1339.8,324.7 1337.5,322.5 1320.0,322.5 1320.0,322.5 1330.0,331.2 1340.0,338.0 1347.5,341.2 1360.0,344.4 1370.0,350.0 1377.5,355.0 1386.0,360.0 1388.8,363.8 1387.5,368.8 1390.0,373.8 1390.0,373.8 1391.2,374.8 1393.0,376.2 1395.1,378.0 1397.5,380.0 1400.3,382.2 1403.4,384.8 1406.8,387.4 1410.0,390.0 1413.2,392.5 1416.4,395.0 1419.6,397.5 1422.5,400.0 1425.3,402.6 1428.0,405.2 1430.4,407.7 1432.5,410.0 1434.2,412.1 1435.5,413.9 1436.5,415.7 1437.5,417.5 1438.4,419.4 1439.1,421.2 1439.7,423.1 1440.0,425.0 1440.1,426.9 1439.9,428.8 1439.5,430.6 1438.8,432.5 1437.6,434.4 1436.0,436.3 1434.3,438.2 1432.5,440.0 1430.9,441.6 1429.4,443.1 1427.5,444.8 1425.0,447.0 1421.9,449.8 1418.2,453.1 1414.0,456.6 1409.0,460.3 1403.3,464.1 1397.0,468.1 1389.9,472.3 1381.9,476.6 1372.6,481.1 1362.3,485.8 1351.5,490.7 1341.0,495.5 1330.9,500.5 1320.8,505.7 1310.7,510.7 1300.6,515.3 1290.8,519.2 1281.2,522.5 1271.2,525.8 1260.0,529.5 1247.3,533.7 1233.4,538.1 1219.1,542.6 1205.0,547.0 1191.7,551.1 1178.8,555.2 1165.2,559.3 1150.0,563.5 1132.7,568.0 1113.9,572.6 1094.4,577.3 1075.0,582.0 1054.0,587.2 1031.6,592.7 1011.5,597.6 997.5,601.0" fill="#3d6b0e"/>
<polygon points="997.5,610.8 1011.5,607.4 1031.6,602.5 1054.0,597.1 1075.0,592.0 1094.4,587.4 1113.9,582.9 1132.7,578.5 1150.0,574.2 1165.2,570.1 1178.8,566.1 1191.7,562.1 1205.0,558.0 1219.1,553.6 1233.4,549.1 1247.3,544.7 1260.0,540.5 1271.2,536.8 1281.2,533.5 1290.8,530.0 1300.6,526.0 1310.7,521.2 1320.8,515.8 1330.9,510.3 1341.0,505.0 1351.2,500.3 1361.4,495.8 1371.7,491.2 1381.9,486.0 1392.6,479.8 1403.7,472.8 1414.0,466.0 1422.5,460.3 1428.7,456.0 1433.2,452.5 1436.7,449.6 1440.0,447.0 1443.2,444.8 1445.9,443.1 1448.1,441.6 1450.0,440.0 1451.5,438.2 1452.5,436.4 1453.2,434.6 1453.8,432.5 1454.1,430.1 1454.2,427.6 1454.1,425.0 1453.8,422.5 1453.2,420.3 1452.4,418.1 1451.4,416.0 1450.0,413.8 1448.3,411.4 1446.2,408.9 1443.8,406.4 1441.2,403.8 1438.4,401.0 1435.2,398.0 1432.0,395.2 1428.8,392.5 1425.6,390.1 1422.5,388.0 1419.4,385.9 1416.2,383.8 1413.0,381.5 1409.6,379.2 1406.4,377.0 1403.8,375.0 1401.6,373.3 1399.8,371.7 1398.5,370.3 1397.5,368.8 1397.2,367.2 1397.5,365.6 1397.8,364.1 1397.5,362.5 1396.5,361.0 1395.2,359.5 1393.4,358.0 1391.2,356.2 1388.6,354.1 1385.4,351.8 1382.0,349.4 1378.8,347.5 1375.6,346.0 1372.4,344.9 1369.3,343.9 1366.2,343.0 1363.3,342.2 1360.3,341.5 1357.5,340.9 1355.0,340.0 1353.0,339.1 1351.3,338.1 1349.6,336.8 1347.5,335.0 1344.7,332.2 1341.6,328.7 1338.2,325.4 1335.0,323.0 1331.6,322.1 1328.0,322.0 1324.7,322.3 1322.5,322.5 1320.0,322.5 1320.0,322.5 1330.0,331.2 1340.0,338.0 1347.5,341.2 1360.0,344.4 1370.0,350.0 1377.5,355.0 1386.0,360.0 1388.8,363.8 1387.5,368.8 1390.0,373.8 1390.0,373.8 1391.2,374.8 1393.0,376.2 1395.1,378.0 1397.5,380.0 1400.3,382.2 1403.4,384.8 1406.8,387.4 1410.0,390.0 1413.2,392.5 1416.4,395.0 1419.6,397.5 1422.5,400.0 1425.3,402.6 1428.0,405.2 1430.4,407.7 1432.5,410.0 1434.2,412.1 1435.5,413.9 1436.5,415.7 1437.5,417.5 1438.4,419.4 1439.1,421.2 1439.7,423.1 1440.0,425.0 1440.1,426.9 1439.9,428.8 1439.5,430.6 1438.8,432.5 1437.6,434.4 1436.0,436.3 1434.3,438.2 1432.5,440.0 1430.9,441.6 1429.4,443.1 1427.5,444.8 1425.0,447.0 1421.9,449.8 1418.2,453.1 1414.0,456.6 1409.0,460.3 1403.3,464.1 1397.0,468.1 1389.9,472.3 1381.9,476.6 1372.6,481.1 1362.3,485.8 1351.5,490.7 1341.0,495.5 1330.9,500.5 1320.8,505.7 1310.7,510.7 1300.6,515.3 1290.8,519.2 1281.2,522.5 1271.2,525.8 1260.0,529.5 1247.3,533.7 1233.4,538.1 1219.1,542.6 1205.0,547.0 1191.7,551.1 1178.8,555.2 1165.2,559.3 1150.0,563.5 1132.7,568.0 1113.9,572.6 1094.4,577.3 1075.0,582.0 1054.0,587.2 1031.6,592.7 1011.5,597.6 997.5,601.0" fill="#6f1a57"/>
<polyline points="997.5,551.7 1011.5,548.3 1031.6,543.5 1054.0,538.1 1075.0,533.0 1094.5,528.2 1114.1,523.2 1132.9,518.4 1150.0,514.0 1164.4,510.3 1176.9,507.1 1188.9,503.9 1201.7,500.0 1216.2,495.2 1231.6,489.9 1246.6,484.5 1260.0,479.3 1271.6,474.5 1281.9,469.9 1291.3,465.4 1300.0,461.0 1308.2,456.7 1315.6,452.5 1322.1,448.5 1327.5,445.0 1331.2,442.1 1333.4,439.6 1335.2,437.4 1337.5,435.0 1340.6,432.4 1344.1,429.7 1347.3,427.1 1350.0,425.0 1351.9,423.3 1353.3,421.9 1354.3,420.8 1355.0,420.0" fill="none" stroke="#16fb12" stroke-width="3.5"/>
<polygon points="997.5,551.7 1011.5,548.3 1031.6,543.5 1054.0,538.1 1075.0,533.0 1094.5,528.2 1114.1,523.2 1132.9,518.4 1150.0,514.0 1164.4,510.3 1176.9,507.1 1188.9,503.9 1201.7,500.0 1216.2,495.2 1231.6,489.9 1246.6,484.5 1260.0,479.3 1271.6,474.5 1281.9,469.9 1291.3,465.4 1300.0,461.0 1308.2,456.7 1315.6,452.5 1322.1,448.5 1327.5,445.0 1331.2,442.1 1333.4,439.6 1335.2,437.4 1337.5,435.0 1340.6,432.4 1344.1,429.7 1347.3,427.1 1350.0,425.0 1351.9,423.3 1353.3,421.9 1354.3,420.8 1355.0,420.0 1383.8,416.2 1385.0,422.5 1385.0,422.5 1384.6,423.8 1384.1,425.8 1383.4,427.9 1382.5,430.0 1381.5,431.9 1380.3,433.9 1379.0,435.8 1377.5,437.5 1376.3,438.7 1375.2,439.7 1373.4,440.9 1370.0,443.0 1364.5,446.4 1357.6,450.6 1349.6,455.2 1341.0,460.0 1331.7,465.0 1321.5,470.3 1311.0,475.6 1300.6,480.6 1290.8,485.1 1281.2,489.4 1271.2,493.6 1260.0,498.0 1247.3,502.7 1233.4,507.6 1219.1,512.4 1205.0,517.0 1191.7,521.1 1178.8,525.0 1165.2,528.9 1150.0,533.0 1132.7,537.6 1113.9,542.4 1094.4,547.2 1075.0,552.0 1054.0,557.0 1031.6,562.2 1011.5,566.8 997.5,570.0" fill="#3d6b0e"/>
<polygon points="997.5,559.2 1011.5,556.3 1031.6,552.1 1054.0,547.5 1075.0,543.0 1094.4,538.9 1113.9,534.7 1132.7,530.6 1150.0,526.5 1165.6,522.5 1180.0,518.7 1193.1,514.8 1205.0,511.0 1215.2,507.1 1223.9,503.2 1231.8,499.4 1240.0,495.8 1248.4,492.5 1256.8,489.5 1265.0,486.5 1273.3,483.3 1281.6,479.9 1290.0,476.5 1298.4,472.9 1306.7,469.2 1315.3,465.2 1324.1,460.9 1332.5,456.6 1340.0,452.5 1346.5,448.7 1352.2,445.1 1357.4,441.5 1362.0,437.5 1366.3,432.7 1370.2,427.4 1373.3,422.5 1375.5,419.0 1376.3,417.4 1376.1,417.0 1375.4,417.2 1375.0,417.3 1383.8,416.2 1385.0,422.5 1385.0,422.5 1384.6,423.8 1384.1,425.8 1383.4,427.9 1382.5,430.0 1381.5,431.9 1380.3,433.9 1379.0,435.8 1377.5,437.5 1376.3,438.7 1375.2,439.7 1373.4,440.9 1370.0,443.0 1364.5,446.4 1357.6,450.6 1349.6,455.2 1341.0,460.0 1331.7,465.0 1321.5,470.3 1311.0,475.6 1300.6,480.6 1290.8,485.1 1281.2,489.4 1271.2,493.6 1260.0,498.0 1247.3,502.7 1233.4,507.6 1219.1,512.4 1205.0,517.0 1191.7,521.1 1178.8,525.0 1165.2,528.9 1150.0,533.0 1132.7,537.6 1113.9,542.4 1094.4,547.2 1075.0,552.0 1054.0,557.0 1031.6,562.2 1011.5,566.8 997.5,570.0" fill="#6f1a57"/>
<polygon points="997.5,570.0 1011.5,566.8 1031.6,562.2 1054.0,557.0 1075.0,552.0 1094.4,547.2 1113.9,542.4 1132.7,537.6 1150.0,533.0 1165.2,528.9 1178.8,525.0 1191.7,521.1 1205.0,517.0 1219.1,512.4 1233.4,507.6 1247.3,502.7 1260.0,498.0 1271.2,493.6 1281.2,489.4 1290.8,485.1 1300.6,480.6 1311.0,475.6 1321.5,470.3 1331.7,465.0 1341.0,460.0 1349.6,455.2 1357.6,450.6 1364.5,446.4 1370.0,443.0 1373.4,440.9 1375.2,439.7 1376.3,438.7 1377.5,437.5 1379.0,435.8 1380.3,433.9 1381.5,431.9 1382.5,430.0 1383.4,427.9 1384.1,425.8 1384.6,423.8 1385.0,422.5 1386.0,421.0 1391.0,418.8 1396.0,415.0 1401.0,408.8 1403.8,402.5 1403.8,397.5 1400.0,395.0 1391.0,391.0 1385.0,387.5 1380.0,383.8 1378.8,380.0 1381.0,376.0 1387.5,374.4 1390.0,373.8 1390.0,373.8 1391.2,374.8 1393.0,376.2 1395.1,378.0 1397.5,380.0 1400.3,382.2 1403.4,384.8 1406.8,387.4 1410.0,390.0 1413.2,392.5 1416.4,395.0 1419.6,397.5 1422.5,400.0 1425.3,402.6 1428.0,405.2 1430.4,407.7 1432.5,410.0 1434.2,412.1 1435.5,413.9 1436.5,415.7 1437.5,417.5 1438.4,419.4 1439.1,421.2 1439.7,423.1 1440.0,425.0 1440.1,426.9 1439.9,428.8 1439.5,430.6 1438.8,432.5 1437.6,434.4 1436.0,436.3 1434.3,438.2 1432.5,440.0 1430.9,441.6 1429.4,443.1 1427.5,444.8 1425.0,447.0 1421.9,449.8 1418.2,453.1 1414.0,456.6 1409.0,460.3 1403.3,464.1 1397.0,468.1 1389.9,472.3 1381.9,476.6 1372.6,481.1 1362.3,485.8 1351.5,490.7 1341.0,495.5 1330.9,500.5 1320.8,505.7 1310.7,510.7 1300.6,515.3 1290.8,519.2 1281.2,522.5 1271.2,525.8 1260.0,529.5 1247.3,533.7 1233.4,538.1 1219.1,542.6 1205.0,547.0 1191.7,551.1 1178.8,555.2 1165.2,559.3 1150.0,563.5 1132.7,568.0 1113.9,572.6 1094.4,577.3 1075.0,582.0 1054.0,587.2 1031.6,592.7 1011.5,597.6 997.5,601.0" fill="#4e5056"/>
<polygon points="1320.0,322.5 1302.0,324.4 1310.0,335.0 1316.0,342.5 1322.5,350.0 1335.0,351.9 1345.0,354.4 1360.0,355.0 1372.5,355.2 1377.5,355.6 1320.0,322.5 1330.0,331.2 1340.0,338.0 1347.5,341.2 1360.0,344.4 1370.0,350.0 1377.5,355.0" fill="#4e5056"/>
<polygon points="1276,333 1278.5,328.5 1280,327.5 1298,348 1295,348.5" fill="#16fb12"/>
<polygon points="1280,327.5 1290,328 1313,349.6 1297.5,347.5" fill="#3d6b0e"/>
<polygon points="1290,328 1298,328.75 1319,350 1312.5,349.4" fill="#6f1a57"/>
<polygon points="1298,328.75 1302,324.4 1322.5,350 1319,350" fill="#4e5056"/>
<path d="M1298 328.75L1321 350" stroke="#c9c3ad" stroke-width="1.6"/>
<polyline points="997.5,570.0 1011.5,566.8 1031.6,562.2 1054.0,557.0 1075.0,552.0 1094.4,547.2 1113.9,542.4 1132.7,537.6 1150.0,533.0 1165.2,528.9 1178.8,525.0 1191.7,521.1 1205.0,517.0 1219.1,512.4 1233.4,507.6 1247.3,502.7 1260.0,498.0 1271.2,493.6 1281.2,489.4 1290.8,485.1 1300.6,480.6 1311.0,475.6 1321.5,470.3 1331.7,465.0 1341.0,460.0 1349.6,455.2 1357.6,450.6 1364.5,446.4 1370.0,443.0 1373.4,440.9 1375.2,439.7 1376.3,438.7 1377.5,437.5 1379.0,435.8 1380.3,433.9 1381.5,431.9 1382.5,430.0 1383.4,427.9 1384.1,425.8 1384.6,423.8 1385.0,422.5" fill="none" stroke="#b9b4a4" stroke-width="1.5"/>
<polyline points="997.5,601.0 1011.5,597.6 1031.6,592.7 1054.0,587.2 1075.0,582.0 1094.4,577.3 1113.9,572.6 1132.7,568.0 1150.0,563.5 1165.2,559.3 1178.8,555.2 1191.7,551.1 1205.0,547.0 1219.1,542.6 1233.4,538.1 1247.3,533.7 1260.0,529.5 1271.2,525.8 1281.2,522.5 1290.8,519.2 1300.6,515.3 1310.7,510.7 1320.8,505.7 1330.9,500.5 1341.0,495.5 1351.5,490.7 1362.3,485.8 1372.6,481.1 1381.9,476.6 1389.9,472.3 1397.0,468.1 1403.3,464.1 1409.0,460.3 1414.0,456.6 1418.2,453.1 1421.9,449.8 1425.0,447.0 1427.5,444.8 1429.4,443.1 1430.9,441.6 1432.5,440.0 1434.3,438.2 1436.0,436.3 1437.6,434.4 1438.8,432.5 1439.5,430.6 1439.9,428.8 1440.1,426.9 1440.0,425.0 1439.7,423.1 1439.1,421.2 1438.4,419.4 1437.5,417.5 1436.5,415.7 1435.5,413.9 1434.2,412.1 1432.5,410.0 1430.4,407.7 1428.0,405.2 1425.3,402.6 1422.5,400.0 1419.6,397.5 1416.4,395.0 1413.2,392.5 1410.0,390.0 1406.8,387.4 1403.4,384.8 1400.3,382.2 1397.5,380.0 1395.1,378.0 1393.0,376.2 1391.2,374.8 1390.0,373.8 1387.5,368.8 1388.8,363.8 1386.0,360.0 1377.5,355.0 1370.0,350.0 1360.0,344.4 1347.5,341.2 1340.0,338.0 1330.0,331.2 1320.0,322.5" fill="none" stroke="#b9b4a4" stroke-width="1.5"/>
<polygon points="1470.0,560.0 1471.0,532.5 1480.0,515.0 1540.0,493.8 1605.0,481.2 1652.5,475.0 1690.0,482.5 1732.5,488.8 1772.5,497.5 1797.5,508.8 1831.0,541.2 1828.8,562.5 1797.5,587.5 1730.0,605.0 1640.0,598.8 1570.0,605.0 1497.5,585.0" fill="#fcff14"/>
<polygon points="1470.0,560.0 1471.2,532.5 1480.0,515.0 1540.0,493.8 1605.0,481.2 1652.5,475.0 1690.0,482.5 1732.5,488.8 1772.5,497.5 1797.5,508.8 1831.2,541.2 1810.0,525.0 1772.5,511.2 1727.5,507.5 1690.0,501.2 1665.0,505.5 1615.0,498.8 1580.0,505.5 1515.0,527.5 1485.0,550.0" fill="#dcec14"/>
<polygon points="1471.2,532.5 1480.0,515.0 1540.0,493.8 1560.0,491.2 1515.0,512.5 1485.0,530.0" fill="#c6cc14"/>
<polygon points="1605.0,482.5 1652.5,476.2 1690.0,483.8 1692.5,500.0 1665.0,504.5 1615.0,498.0" fill="#e9f230"/>
</svg>
<svg class="abs" style="left:77.5px;top:224.5px" width="24" height="24" viewBox="0 0 24 24"><rect x="1.500" y="1.500" width="15" height="15" fill="#dbe7f3" stroke="#7a1426" stroke-width="1.7"/><rect x="4" y="4" width="4" height="4" fill="#9ebbd8"/><rect x="10" y="4" width="4" height="4" fill="#9ebbd8"/><rect x="4" y="10" width="4" height="4" fill="#9ebbd8"/><rect x="8" y="9" width="15" height="13.500" fill="#f4f8fc" stroke="#7a1426" stroke-width="1.7"/><path d="M10.500 13h10M10.500 16h10M10.500 19h10" stroke="#a9c3dc" stroke-width="1.2"/></svg>
<svg class="abs" style="left:116.55px;top:224.5px" width="24" height="24" viewBox="0 0 24 24"><path d="M9 2.500h6v6.500h6.500v6H15v6.500H9V15H2.500V9H9z" fill="#a9d4ee" stroke="#7a1426" stroke-width="1.6"/><path d="M10.500 4v16M4 10.500h16" stroke="#d9eefa" stroke-width="1.5"/></svg>
<svg class="abs" style="left:155.6px;top:224.5px" width="24" height="24" viewBox="0 0 24 24"><rect x="2.500" y="9" width="19" height="6" fill="#a9d4ee" stroke="#7a1426" stroke-width="1.6"/><path d="M4 11h16" stroke="#d9eefa" stroke-width="1.5"/></svg>
<svg class="abs" style="left:194.65px;top:224.5px" width="24" height="24" viewBox="0 0 24 24"><circle cx="9.500" cy="9.500" r="7.5" fill="#e6edf5" stroke="#8a8f98" stroke-width="1.8"/><path d="M15 15l6.500 6.500" stroke="#8a6a4a" stroke-width="2.6"/><path d="M15.500 15.500l6 6" stroke="#c9a36a" stroke-width="1"/><path d="M9.500 3.500v12M3.500 9.500h12" stroke="#7a1a5a" stroke-width="1.5"/><path d="M9.500 2l-2 2.800h4zM9.500 17l-2-2.800h4zM2 9.500l2.800-2v4zM17 9.500l-2.800-2v4z" fill="#7a1a5a"/></svg>
<svg class="abs" style="left:233.7px;top:224.5px" width="24" height="24" viewBox="0 0 24 24"><path d="M3 9q2-5 5-6l1 3 2-4 1.500 4 2-3 .5 5 1.500-1q1 4-2 8-4 3-8 0-4-3-3.500-6z" fill="#d8a4ac" stroke="#b4788a" stroke-width="1"/><path d="M5 8l6 7M8 5l5 8M11 4l3 7" stroke="#c08c98" stroke-width=".8"/><path d="M18.500 1.500v9M14 6h9" stroke="#7a1426" stroke-width="1.4"/><path d="M13 18l5-4 5 5-2 4h-6z" fill="#3a6ab0" stroke="#1a2a5a" stroke-width="1"/><path d="M15 19l3-2" stroke="#8ad0b0" stroke-width="1.2"/></svg>
<svg class="abs" style="left:272.75px;top:224.5px" width="24" height="24" viewBox="0 0 24 24"><circle cx="8.500" cy="9.500" r="7" fill="#e6edf5" stroke="#9a9fa8" stroke-width="1.8"/><path d="M13.500 15l7 7" stroke="#8a6a4a" stroke-width="2.6"/><path d="M17 5h6M20 2v6M17 11.500h6" stroke="#7a1426" stroke-width="1.5"/></svg>
<svg class="abs" style="left:311.8px;top:224.5px" width="24" height="24" viewBox="0 0 24 24"><circle cx="9.500" cy="9.500" r="7.5" fill="#e6edf5" stroke="#8a8f98" stroke-width="1.8"/><path d="M15 15l6.500 6.500" stroke="#8a6a4a" stroke-width="2.6"/><path d="M15.500 15.500l6 6" stroke="#c9a36a" stroke-width="1"/><path d="M4 4l4 4M15 4l-4 4M4 15l4-4M15 15l-4-4" stroke="#b02020" stroke-width="1.6"/><path d="M8.500 5.500v3h-3zM10.500 5.500v3h3zM8.500 13.500v-3h-3zM10.500 13.500v-3h3z" fill="#8a1a1a"/></svg>
<svg class="abs" style="left:350.85px;top:224.5px" width="24" height="24" viewBox="0 0 24 24"><circle cx="9.500" cy="9.500" r="7.5" fill="#e6edf5" stroke="#8a8f98" stroke-width="1.8"/><path d="M15 15l6.500 6.500" stroke="#8a6a4a" stroke-width="2.6"/><path d="M15.500 15.500l6 6" stroke="#c9a36a" stroke-width="1"/><path d="M5 7l6-2-1 6z" fill="#7a1426"/><path d="M9 8q4-4 8-3" stroke="#5a7aa8" stroke-width="1.4" fill="none"/></svg>
<svg class="abs" style="left:389.9px;top:224.5px" width="24" height="24" viewBox="0 0 24 24"><path d="M2 7l4 4 9-9" stroke="#8ab4d8" stroke-width="3" fill="none"/><path d="M2 7l4 4 9-9" stroke="#5a86b0" stroke-width="1" fill="none"/><path d="M9 10l12 12M21 10L9 22" stroke="#8ab4d8" stroke-width="3.2"/><path d="M9 10l12 12M21 10L9 22" stroke="#a04a5a" stroke-width=".8" stroke-dasharray="2 2"/></svg>
<svg class="abs" style="left:428.95px;top:224.5px" width="24" height="24" viewBox="0 0 24 24"><path d="M3 6l13 12" stroke="#8a7a5a" stroke-width="3.2"/><path d="M3 6l5 4.500" stroke="#d8b040" stroke-width="3.2"/><path d="M14 16l6 6-1-7z" fill="#2a2a2a"/><path d="M20 2q-6 1-7 8" stroke="#4a5a7a" stroke-width="1.5" fill="none"/><path d="M10.500 9l5 2-1-5z" fill="#7a1426"/></svg>
<svg class="abs" style="left:468px;top:224.5px" width="24" height="24" viewBox="0 0 24 24"><path d="M7 2h8l3 3v7H7z" fill="#eef4fb" stroke="#9ab4d4" stroke-width="1.2"/><path d="M2 11h18l3-2v9l-3 3H2z" fill="#e4c0b8" stroke="#7a1426" stroke-width="1.5"/><path d="M2 15h18M2 18h18" stroke="#7a1426" stroke-width="1.3"/><rect x="4" y="12.200" width="9" height="1.600" fill="#3aa03a"/><rect x="17" y="12" width="2" height="2" fill="#e03a1a"/></svg>
<svg class="abs" style="left:507.05px;top:224.5px" width="24" height="24" viewBox="0 0 24 24"><path d="M2 3h12l3 3v9H2z" fill="#e4edf8" stroke="#7a9ac0" stroke-width="1.5"/><path d="M7 8h12l3.500 3.500V22H7z" fill="#d4e0ee" stroke="#7a1426" stroke-width="1.7"/><path d="M9 10h9v10H9z" fill="#c4d4e6" opacity=".6"/></svg>
<svg class="abs" style="left:546.1px;top:224.5px" width="24" height="24" viewBox="0 0 24 24"><rect x="2.500" y="2" width="19" height="20.500" fill="#c9d6e6" stroke="#7a1426" stroke-width="1.9"/><g fill="#3a4656"><rect x="8" y="4.500" width="3.500" height="3.500"/><rect x="14" y="4.500" width="3.500" height="3.500"/><rect x="8" y="10" width="3.500" height="3.500"/><rect x="14" y="10" width="3.500" height="3.500"/><rect x="8" y="15.500" width="3.500" height="3.500"/></g><rect x="14" y="15.500" width="4" height="4" fill="#f0e040"/><path d="M4.500 5v15" stroke="#d8c060" stroke-width="1.4" stroke-dasharray="2 2"/></svg>
<svg class="abs" style="left:585.15px;top:224.5px" width="24" height="24" viewBox="0 0 24 24"><path d="M12 1.500l3 7.500 8 .5-6.200 5 2.200 8-7-4.500-7 4.500 2.200-8L1 9.500l8-.5z" fill="#f4f45a" stroke="#c8b830" stroke-width="1.6" stroke-linejoin="round"/></svg>
<svg class="abs" style="left:624.2px;top:224.5px" width="24" height="24" viewBox="0 0 24 24"><path d="M12 1.500l3 7.500 8 .5-6.200 5 2.200 8-7-4.500-7 4.500 2.200-8L1 9.500l8-.5z" fill="#3a9ae0" stroke="#5ab4a8" stroke-width="1.6" stroke-linejoin="round"/></svg>
<svg class="abs" style="left:663.25px;top:224.5px" width="24" height="24" viewBox="0 0 24 24"><rect x="2" y="3" width="20" height="18" fill="#e6e6e6" stroke="#cfcfcf" stroke-width="1"/><path d="M12 3v18M2 12h20" stroke="#cfcfcf" stroke-width="1"/><rect x="2.500" y="3.500" width="9.500" height="8.500" fill="#e0e0e0" stroke="#3a3a3a" stroke-width="1.7"/></svg>
<svg class="abs" style="left:1006.5px;top:224.5px" width="24" height="24" viewBox="0 0 24 24"><rect x="1.500" y="1.500" width="15" height="15" fill="#dbe7f3" stroke="#7a1426" stroke-width="1.7"/><rect x="4" y="4" width="4" height="4" fill="#9ebbd8"/><rect x="10" y="4" width="4" height="4" fill="#9ebbd8"/><rect x="4" y="10" width="4" height="4" fill="#9ebbd8"/><rect x="8" y="9" width="15" height="13.500" fill="#f4f8fc" stroke="#7a1426" stroke-width="1.7"/><path d="M10.500 13h10M10.500 16h10M10.500 19h10" stroke="#a9c3dc" stroke-width="1.2"/></svg>
<svg class="abs" style="left:1045.55px;top:224.5px" width="24" height="24" viewBox="0 0 24 24"><path d="M9 2.500h6v6.500h6.500v6H15v6.500H9V15H2.500V9H9z" fill="#a9d4ee" stroke="#7a1426" stroke-width="1.6"/><path d="M10.500 4v16M4 10.500h16" stroke="#d9eefa" stroke-width="1.5"/></svg>
<svg class="abs" style="left:1084.6px;top:224.5px" width="24" height="24" viewBox="0 0 24 24"><rect x="2.500" y="9" width="19" height="6" fill="#a9d4ee" stroke="#7a1426" stroke-width="1.6"/><path d="M4 11h16" stroke="#d9eefa" stroke-width="1.5"/></svg>
<svg class="abs" style="left:1123.65px;top:224.5px" width="24" height="24" viewBox="0 0 24 24"><circle cx="9.500" cy="9.500" r="7.5" fill="#e6edf5" stroke="#8a8f98" stroke-width="1.8"/><path d="M15 15l6.500 6.500" stroke="#8a6a4a" stroke-width="2.6"/><path d="M15.500 15.500l6 6" stroke="#c9a36a" stroke-width="1"/><path d="M9.500 3.500v12M3.500 9.500h12" stroke="#7a1a5a" stroke-width="1.5"/><path d="M9.500 2l-2 2.800h4zM9.500 17l-2-2.800h4zM2 9.500l2.800-2v4zM17 9.500l-2.800-2v4z" fill="#7a1a5a"/></svg>
<svg class="abs" style="left:1162.7px;top:224.5px" width="24" height="24" viewBox="0 0 24 24"><path d="M3 9q2-5 5-6l1 3 2-4 1.500 4 2-3 .5 5 1.500-1q1 4-2 8-4 3-8 0-4-3-3.500-6z" fill="#d8a4ac" stroke="#b4788a" stroke-width="1"/><path d="M5 8l6 7M8 5l5 8M11 4l3 7" stroke="#c08c98" stroke-width=".8"/><path d="M18.500 1.500v9M14 6h9" stroke="#7a1426" stroke-width="1.4"/><path d="M13 18l5-4 5 5-2 4h-6z" fill="#3a6ab0" stroke="#1a2a5a" stroke-width="1"/><path d="M15 19l3-2" stroke="#8ad0b0" stroke-width="1.2"/></svg>
<svg class="abs" style="left:1201.75px;top:224.5px" width="24" height="24" viewBox="0 0 24 24"><circle cx="8.500" cy="9.500" r="7" fill="#e6edf5" stroke="#9a9fa8" stroke-width="1.8"/><path d="M13.500 15l7 7" stroke="#8a6a4a" stroke-width="2.6"/><path d="M17 5h6M20 2v6M17 11.500h6" stroke="#7a1426" stroke-width="1.5"/></svg>
<svg class="abs" style="left:1240.8px;top:224.5px" width="24" height="24" viewBox="0 0 24 24"><circle cx="9.500" cy="9.500" r="7.5" fill="#e6edf5" stroke="#8a8f98" stroke-width="1.8"/><path d="M15 15l6.500 6.500" stroke="#8a6a4a" stroke-width="2.6"/><path d="M15.500 15.500l6 6" stroke="#c9a36a" stroke-width="1"/><path d="M4 4l4 4M15 4l-4 4M4 15l4-4M15 15l-4-4" stroke="#b02020" stroke-width="1.6"/><path d="M8.500 5.500v3h-3zM10.500 5.500v3h3zM8.500 13.500v-3h-3zM10.500 13.500v-3h3z" fill="#8a1a1a"/></svg>
<svg class="abs" style="left:1279.85px;top:224.5px" width="24" height="24" viewBox="0 0 24 24"><circle cx="9.500" cy="9.500" r="7.5" fill="#e6edf5" stroke="#8a8f98" stroke-width="1.8"/><path d="M15 15l6.500 6.500" stroke="#8a6a4a" stroke-width="2.6"/><path d="M15.500 15.500l6 6" stroke="#c9a36a" stroke-width="1"/><path d="M5 7l6-2-1 6z" fill="#7a1426"/><path d="M9 8q4-4 8-3" stroke="#5a7aa8" stroke-width="1.4" fill="none"/></svg>
<svg class="abs" style="left:1318.9px;top:224.5px" width="24" height="24" viewBox="0 0 24 24"><path d="M2 7l4 4 9-9" stroke="#8ab4d8" stroke-width="3" fill="none"/><path d="M2 7l4 4 9-9" stroke="#5a86b0" stroke-width="1" fill="none"/><path d="M9 10l12 12M21 10L9 22" stroke="#8ab4d8" stroke-width="3.2"/><path d="M9 10l12 12M21 10L9 22" stroke="#a04a5a" stroke-width=".8" stroke-dasharray="2 2"/></svg>
<svg class="abs" style="left:1357.95px;top:224.5px" width="24" height="24" viewBox="0 0 24 24"><path d="M1 13q5-9 12-8 6 1 10 7-3 7-10 8-8 0-12-7z" fill="#1a1a1a"/><path d="M3 9q5-6 11-5" stroke="#3a6ac0" stroke-width="2" fill="none"/><ellipse cx="12" cy="13" rx="7" ry="5" fill="#e8f0f8"/><circle cx="12" cy="13" r="4.500" fill="#2aa02a"/><circle cx="12" cy="13" r="2" fill="#0a3a0a"/><path d="M15 3l3 2M19 5l2 2.500" stroke="#111" stroke-width="1.5"/></svg>
<svg class="abs" style="left:1397px;top:224.5px" width="24" height="24" viewBox="0 0 24 24"><circle cx="11" cy="13" r="8" fill="#2ab85a"/><path d="M5 9q5-3 11 1-3 5-9 4z" fill="#5ad87a"/><path d="M6 16q6 2 12-3" stroke="#2a9ab0" stroke-width="2" fill="none"/><path d="M1 21Q8 14 22 3" stroke="#9aa4b4" stroke-width="1.6" fill="none"/><circle cx="19" cy="5.500" r="3.200" fill="#d8d020" stroke="#a8a020" stroke-width=".8"/></svg>
<svg class="abs" style="left:1436.05px;top:224.5px" width="24" height="24" viewBox="0 0 24 24"><circle cx="11" cy="4.500" r="3" fill="none" stroke="#2a2a2a" stroke-width="1.8"/><circle cx="18.500" cy="4.500" r="3" fill="none" stroke="#2a2a2a" stroke-width="1.8"/><rect x="8.500" y="9" width="13" height="12.500" fill="#8a8a8a" stroke="#1a1a1a" stroke-width="1.8"/><rect x="11.500" y="13" width="7" height="4.500" fill="#d0d0d0" stroke="#1a1a1a" stroke-width="1.2"/><path d="M1.500 9.500v11l6-5.500z" fill="#7a7a7a" stroke="#2a2a2a" stroke-width="1.2"/></svg>
<svg class="abs" style="left:1475.1px;top:224.5px" width="24" height="24" viewBox="0 0 24 24"><path d="M10 2h4v14h-4z" fill="#f2ece4" stroke="#7a1426" stroke-width="1.6"/><ellipse cx="12" cy="18" rx="10" ry="4.500" fill="#e6e6ea" stroke="#8a8a94" stroke-width="1.3"/><path d="M12 12v6" stroke="#b02030" stroke-width="1.6"/><circle cx="17" cy="17" r="1.500" fill="#b02030"/></svg>
<svg class="abs" style="left:1514.15px;top:224.5px" width="24" height="24" viewBox="0 0 24 24"><circle cx="14" cy="4" r="3" fill="#f4f4f4" stroke="#1a1a1a" stroke-width="1.5"/><path d="M13 8l-4 3-1 5M13 8l2 7-4 4-6 1M15 15l4 5h3M13 9l5 3" stroke="#1a1a1a" stroke-width="3.400" fill="none" stroke-linecap="round" stroke-linejoin="round"/><path d="M13 8l-4 3-1 5M13 8l2 7-4 4-6 1M15 15l4 5h3M13 9l5 3" stroke="#d8d8c0" stroke-width="1.300" fill="none" stroke-linecap="round" stroke-linejoin="round"/></svg>
<svg class="abs" style="left:1553.2px;top:224.5px" width="24" height="24" viewBox="0 0 24 24"><circle cx="12" cy="12" r="10" fill="#eef2f6" stroke="#1a1a1a" stroke-width="2.600"/><path d="M3 10q9-5 18 0l-6 4v7h-6v-7z" fill="#fff" stroke="#1a1a1a" stroke-width="1.600"/><rect x="10" y="10.500" width="4" height="4" fill="#cfe0f0" stroke="#4a4a4a" stroke-width=".8"/><path d="M12 15v7" stroke="#1a1a1a" stroke-width="2"/></svg>
<svg class="abs" style="left:1592.25px;top:224.5px" width="24" height="24" viewBox="0 0 24 24"><path d="M3 6l13 12" stroke="#8a7a5a" stroke-width="3.2"/><path d="M3 6l5 4.500" stroke="#d8b040" stroke-width="3.2"/><path d="M14 16l6 6-1-7z" fill="#2a2a2a"/><path d="M20 2q-6 1-7 8" stroke="#4a5a7a" stroke-width="1.5" fill="none"/><path d="M10.500 9l5 2-1-5z" fill="#7a1426"/></svg>
<svg class="abs" style="left:1631.3px;top:224.5px" width="24" height="24" viewBox="0 0 24 24"><path d="M7 2h8l3 3v7H7z" fill="#eef4fb" stroke="#9ab4d4" stroke-width="1.2"/><path d="M2 11h18l3-2v9l-3 3H2z" fill="#e4c0b8" stroke="#7a1426" stroke-width="1.5"/><path d="M2 15h18M2 18h18" stroke="#7a1426" stroke-width="1.3"/><rect x="4" y="12.200" width="9" height="1.600" fill="#3aa03a"/><rect x="17" y="12" width="2" height="2" fill="#e03a1a"/></svg>
<svg class="abs" style="left:1670.35px;top:224.5px" width="24" height="24" viewBox="0 0 24 24"><path d="M2 3h12l3 3v9H2z" fill="#e4edf8" stroke="#7a9ac0" stroke-width="1.5"/><path d="M7 8h12l3.500 3.500V22H7z" fill="#d4e0ee" stroke="#7a1426" stroke-width="1.7"/><path d="M9 10h9v10H9z" fill="#c4d4e6" opacity=".6"/></svg>
<svg class="abs" style="left:1709.4px;top:224.5px" width="24" height="24" viewBox="0 0 24 24"><rect x="2.500" y="2" width="19" height="20.500" fill="#c9d6e6" stroke="#7a1426" stroke-width="1.9"/><g fill="#3a4656"><rect x="8" y="4.500" width="3.500" height="3.500"/><rect x="14" y="4.500" width="3.500" height="3.500"/><rect x="8" y="10" width="3.500" height="3.500"/><rect x="14" y="10" width="3.500" height="3.500"/><rect x="8" y="15.500" width="3.500" height="3.500"/></g><rect x="14" y="15.500" width="4" height="4" fill="#f0e040"/><path d="M4.500 5v15" stroke="#d8c060" stroke-width="1.4" stroke-dasharray="2 2"/></svg>
<svg class="abs" style="left:1748.45px;top:224.5px" width="24" height="24" viewBox="0 0 24 24"><path d="M12 1.500l3 7.500 8 .5-6.200 5 2.200 8-7-4.500-7 4.500 2.200-8L1 9.500l8-.5z" fill="#f4f45a" stroke="#c8b830" stroke-width="1.6" stroke-linejoin="round"/></svg>
<svg class="abs" style="left:1787.5px;top:224.5px" width="24" height="24" viewBox="0 0 24 24"><path d="M12 1.500l3 7.500 8 .5-6.200 5 2.200 8-7-4.500-7 4.500 2.200-8L1 9.500l8-.5z" fill="#3a9ae0" stroke="#5ab4a8" stroke-width="1.6" stroke-linejoin="round"/></svg>
<svg class="abs" style="left:1826.55px;top:224.5px" width="24" height="24" viewBox="0 0 24 24"><rect x="2" y="3" width="20" height="18" fill="#e6e6e6" stroke="#cfcfcf" stroke-width="1"/><path d="M12 3v18M2 12h20" stroke="#cfcfcf" stroke-width="1"/><rect x="2.500" y="3.500" width="9.500" height="8.500" fill="#e0e0e0" stroke="#3a3a3a" stroke-width="1.7"/></svg>
<svg class="abs" style="left:157px;top:88.5px" width="24" height="24" viewBox="0 0 24 24"><rect x="2" y="2" width="20" height="20" fill="#e8e2d8" stroke="#8a2a3a" stroke-width="1.6"/><text x="12" y="19" text-anchor="middle" font-family="Liberation Serif,serif" font-weight="bold" font-size="19" fill="#9a3a10">N</text></svg>
<svg class="abs" style="left:364px;top:88.5px" width="24" height="24" viewBox="0 0 24 24"><path d="M2 10l10-5 10 5-10 5z" fill="#b4cfe8" stroke="#8aa8c8" stroke-width=".8"/><path d="M2 10l4-2M22 10l-4-2" stroke="#8a8a8a" stroke-width="1.5"/><path d="M3 13.500l9 5 9-5" stroke="#7a1426" stroke-width="2" stroke-dasharray="2.500 1.200" fill="none"/></svg>
<svg class="abs" style="left:679.5px;top:88.5px" width="24" height="24" viewBox="0 0 24 24"><path d="M5 5v14" stroke="#8a1a1a" stroke-width="1.8"/><path d="M5 2l-2.500 4h5z" fill="#1a3a8a"/><rect x="2.500" y="18" width="5" height="4.500" fill="#fff" stroke="#1a1a1a" stroke-width="1.2"/><text x="13" y="12" text-anchor="middle" font-family="Liberation Sans,sans-serif" font-weight="bold" font-size="11" fill="#111">Z</text><rect x="19" y="1" width="4" height="22" fill="#e8d840"/><path d="M19 4h4M19 8h4M19 12h4M19 16h4M19 20h4" stroke="#8a7a20" stroke-width=".8"/></svg>
<svg class="abs" style="left:853.5px;top:88.5px" width="24" height="24" viewBox="0 0 24 24"><path d="M2 4h20" stroke="#8a3a10" stroke-width="2.200"/><path d="M2 15l5-6 4 5 4-6 5 7" stroke="#2a3a8a" stroke-width="1.500" fill="none"/><path d="M2 20h20" stroke="#1a3a6a" stroke-width="2.400" stroke-dasharray="4 2"/></svg>
<svg class="abs" style="left:961.5px;top:88.5px" width="24" height="24" viewBox="0 0 24 24"><path d="M2 6h20" stroke="#7a1a5a" stroke-width="2.800"/><path d="M2 12h20" stroke="#3a1a3a" stroke-width="2.800"/><path d="M2 18.500h20" stroke="#1a3a6a" stroke-width="3.500"/></svg>
<svg class="abs" style="left:1086px;top:88.5px" width="24" height="24" viewBox="0 0 24 24"><path d="M2 7h20L12 19z" fill="#5aa4e0" stroke="#2a5a9a" stroke-width="1.200"/><path d="M5 8.500h14l-3 3H8z" fill="#a8d4f4"/></svg>
<svg class="abs" style="left:1120px;top:88.5px" width="24" height="24" viewBox="0 0 24 24"><path d="M4 20l10-11 3 3L7 22z" fill="#f4f4f4" stroke="#3a3a3a" stroke-width="1.200"/><path d="M13 6l5 5 3-3q1-4-2-5-3 0-4 1z" fill="#1a2a4a"/><path d="M2 22h10" stroke="#8a1a1a" stroke-width="2.500"/><path d="M5 19l5-5" stroke="#a02a3a" stroke-width="1.500"/></svg>
<svg class="abs" style="left:1168.5px;top:88.5px" width="24" height="24" viewBox="0 0 24 24"><text x="8.500" y="16" text-anchor="middle" font-family="Liberation Serif,serif" font-size="21" fill="#4a6ab0">A</text><text x="19" y="10" text-anchor="middle" font-family="Liberation Sans,sans-serif" font-weight="bold" font-size="11" fill="#111">A</text><path d="M3 21h17" stroke="#111" stroke-width="1.600"/><path d="M2 21l3.500-2.500v5zM21 21l-3.500-2.500v5z" fill="#111"/></svg>
<svg class="abs" style="left:1292.5px;top:88.5px" width="24" height="24" viewBox="0 0 24 24"><text x="12" y="22" text-anchor="middle" font-family="Liberation Serif,serif" font-size="30" fill="#8a4a10">T</text></svg>
<svg class="abs" style="left:1384px;top:88.5px" width="24" height="24" viewBox="0 0 24 24"><path d="M2 18L18 2l4 4L6 22z" fill="#e4d44a" stroke="#a8982a" stroke-width="1"/><path d="M6 16l2 2M9 13l2 2M12 10l2 2M15 7l2 2" stroke="#7a6a1a" stroke-width="1"/></svg>
<svg class="abs" style="left:1432.5px;top:88.5px" width="24" height="24" viewBox="0 0 24 24"><g transform="translate(0,-1) scale(.78)"><path d="M12 12L4 4h8zM12 12l8-8v8zM12 12l8 8h-8zM12 12l-8 8v-8z" fill="#7a1a6a"/><path d="M12 12V4l4 4zM12 12h8l-4 4zM12 12v8l-4-4zM12 12H4l4-4z" fill="#2a8a8a"/></g><path d="M2 21.500h15" stroke="#111" stroke-width="1.500"/><path d="M1 21.500l3.500-2.500v5zM18 21.500l-3.500-2.500v5z" fill="#111"/><rect x="20" y="2" width="3.500" height="6" fill="#e03a1a"/><rect x="20" y="8" width="3.500" height="6" fill="#3ad8a0"/><rect x="20" y="14" width="3.500" height="7" fill="#e8d820"/></svg>
<svg class="abs" style="left:1557px;top:88.5px" width="24" height="24" viewBox="0 0 24 24"><path d="M12 12L4 4h8zM12 12l8-8v8zM12 12l8 8h-8zM12 12l-8 8v-8z" fill="#7a1a6a"/><path d="M12 12V4l4 4zM12 12h8l-4 4zM12 12v8l-4-4zM12 12H4l4-4z" fill="#2a5a9a"/><circle cx="12" cy="12" r="1.500" fill="#e03a1a"/><path d="M4 4h8L8 8z" fill="#5ab4e8"/></svg>
<svg class="abs" style="left:1648.5px;top:88.5px" width="24" height="24" viewBox="0 0 24 24"><g transform="translate(-1,1) scale(.85)"><path d="M12 12L4 4h8zM12 12l8-8v8zM12 12l8 8h-8zM12 12l-8 8v-8z" fill="#3a2a6a"/><path d="M12 12V4l4 4zM12 12h8l-4 4zM12 12v8l-4-4zM12 12H4l4-4z" fill="#2a4a8a"/></g><path d="M20.500 3v18" stroke="#a01a2a" stroke-width="1.800"/><path d="M17 2.500h7M17 21.500h7" stroke="#111" stroke-width="1.600"/><path d="M20.500 4l-2.500 3h5zM20.500 20l-2.500-3h5z" fill="#a01a2a"/></svg>
<svg class="abs" style="left:1740.5px;top:88.5px" width="24" height="24" viewBox="0 0 24 24"><path d="M4 19L15 5" stroke="#2a3a8a" stroke-width="1.600"/><path d="M4 19h12" stroke="#2a3a8a" stroke-width="1.600"/><path d="M17 3l-4 1.500 3 3zM18 19l-3.500-2.500v5z" fill="#2a3a8a"/><rect x="1.500" y="16.500" width="5" height="5" fill="#fff" stroke="#a01a2a" stroke-width="1.400"/><rect x="19.500" y="1" width="4" height="22" fill="#e8d840"/><path d="M19.500 4h4M19.500 8h4M19.500 12h4M19.500 16h4M19.500 20h4" stroke="#8a7a20" stroke-width=".8"/></svg>
<svg class="abs" style="left:1893px;top:88.5px" width="24" height="24" viewBox="0 0 24 24"><path d="M2 7h20L12 19z" fill="#5aa4e0" stroke="#2a5a9a" stroke-width="1.200"/><path d="M5 8.500h14l-3 3H8z" fill="#a8d4f4"/></svg>
<svg class="abs" style="left:20px;top:127px" width="24" height="24" viewBox="0 0 24 24"><path d="M4 1.500h11l5 5v16H4z" fill="#fff" stroke="#6a6a6a" stroke-width="1.700"/><path d="M15 1.500v5h5" fill="none" stroke="#6a6a6a" stroke-width="1.400"/></svg>
<svg class="abs" style="left:53px;top:127px" width="24" height="24" viewBox="0 0 24 24"><path d="M2 6h7l2 2h8v3H2z" fill="#f4ecc0" stroke="#d8c880" stroke-width="1"/><path d="M10 3h8l3 3v6h-11z" fill="#fff" stroke="#d8d0a0" stroke-width="1"/><path d="M1.500 10h20l-1.500 12H3z" fill="#d8c88a" stroke="#c8b870" stroke-width="1"/><path d="M5 14h12M5 17h12" stroke="#f0e8a0" stroke-width="1.200" stroke-dasharray="1.500 1.500"/></svg>
<svg class="abs" style="left:86px;top:127px" width="24" height="24" viewBox="0 0 24 24"><path d="M2 2h20v20H4l-2-2z" fill="#4a5aa8" stroke="#3a3a7a" stroke-width="1"/><rect x="5" y="2.500" width="14" height="9" fill="#fff"/><rect x="6" y="15" width="12" height="7" fill="#fff"/><rect x="8.500" y="17" width="3" height="5" fill="#4a5aa8"/></svg>
<svg class="abs" style="left:122px;top:127px" width="24" height="24" viewBox="0 0 24 24"><path d="M2 14q0-2 3-2h14q3 0 3 2v5q0 3-3 3H5q-3 0-3-3z" fill="#d8d8d8" stroke="#8a8a8a" stroke-width="1"/><path d="M3 15h18" stroke="#f4f4f4" stroke-width="1.500"/><rect x="16.500" y="15.500" width="3.500" height="5" fill="#2ab03a"/><path d="M9 1h6v6h3.500L12 13 5.500 7H9z" fill="#4aa4e0" stroke="#2a7ac0" stroke-width=".8"/></svg>
<svg class="abs" style="left:160px;top:127px" width="24" height="24" viewBox="0 0 24 24"><path d="M2 14q0-2 3-2h14q3 0 3 2v5q0 3-3 3H5q-3 0-3-3z" fill="#d8d8d8" stroke="#8a8a8a" stroke-width="1"/><path d="M3 15h18" stroke="#f4f4f4" stroke-width="1.500"/><rect x="16.500" y="15.500" width="3.500" height="5" fill="#2ab03a"/><path d="M9 12h6V6.500h3.500L12 .5 5.500 6.500H9z" fill="#b04a5a" stroke="#c01a2a" stroke-width=".8"/></svg>
<svg class="abs" style="left:200px;top:127px" width="24" height="24" viewBox="0 0 24 24"><path d="M3 8l8-6v4q10 0 10 8 0 5-6 7 3-3 2-6-1-3-6-3v4z" fill="#5a94c8" stroke="#9ac4e8" stroke-width=".8"/></svg>
<svg class="abs" style="left:236px;top:127px" width="24" height="24" viewBox="0 0 24 24"><path d="M21 8l-8-6v4Q3 6 3 14q0 5 6 7-3-3-2-6 1-3 6-3v4z" fill="#5a94c8" stroke="#9ac4e8" stroke-width=".8"/></svg>
<svg class="abs" style="left:270px;top:127px" width="24" height="24" viewBox="0 0 24 24"><polygon points="22.8,9.8 23.0,12.0 19.9,13.5 19.4,15.0 21.2,18.1 19.8,19.7 16.5,18.6 15.1,19.4 14.2,22.8 12.0,23.0 10.5,19.9 9.0,19.4 5.9,21.2 4.3,19.8 5.4,16.5 4.6,15.1 1.2,14.2 1.0,12.0 4.1,10.5 4.6,9.0 2.8,5.9 4.2,4.3 7.5,5.4 8.9,4.6 9.8,1.2 12.0,1.0 13.5,4.1 15.0,4.6 18.1,2.8 19.7,4.2 18.6,7.5 19.4,8.9" fill="#3a6aa8"/><circle cx="12" cy="12" r="4.500" fill="#f0f0f0"/></svg>
<svg class="abs" style="left:321px;top:127px" width="24" height="24" viewBox="0 0 24 24"><path d="M1.500 3h7l1.500 2h11.500v15h-20z" fill="#f0e870" stroke="#d8c880" stroke-width=".8"/><path d="M3 6h8" stroke="#3ab03a" stroke-width="1" stroke-dasharray="1 1.500"/><path d="M3 11h14l-2 5H3z" fill="#f4e4b0"/><path d="M11 13l5-2 5 2v8l-5 2-5-2z" fill="#b06a7a" stroke="#6a3a4a" stroke-width=".8"/><path d="M16 15l5-2v8l-5 2z" fill="#8ac4e8"/><path d="M11 13l5 2 5-2-5-2z" fill="#e8d040"/></svg>
<svg class="abs" style="left:360px;top:127px" width="24" height="24" viewBox="0 0 24 24"><path d="M1.500 3h7l1.500 2h11.500v15h-20z" fill="#f0e870" stroke="#d8c880" stroke-width=".8"/><path d="M3 6h8" stroke="#3ab03a" stroke-width="1" stroke-dasharray="1 1.500"/><path d="M3 11h14l-2 5H3z" fill="#f4e4b0"/><path d="M3 22q1-4 4-5 1-3 3-1 1-2 3 0 2-2 3 1 4 1 5 5z" fill="#4a8ad0"/><path d="M3 16h18v6H3z" fill="#e8f0f8" opacity=".55"/><circle cx="8" cy="17" r="2" fill="#5a9ae0"/><circle cx="15" cy="17" r="2" fill="#5a9ae0"/><circle cx="11.500" cy="15" r="2" fill="#3a7ac0"/><path d="M20 5v8" stroke="#1a1a1a" stroke-width="2"/></svg>
<svg class="abs" style="left:399px;top:127px" width="24" height="24" viewBox="0 0 24 24"><path d="M1.500 3h7l1.500 2h11.500v15h-20z" fill="#f0e870" stroke="#d8c880" stroke-width=".8"/><path d="M3 6h8" stroke="#3ab03a" stroke-width="1" stroke-dasharray="1 1.500"/><path d="M3 11h14l-2 5H3z" fill="#f4e4b0"/><path d="M3 22q1-4 4-5 1-3 3-1 1-2 3 0 2-2 3 1 4 1 5 5z" fill="#4a8ad0"/><path d="M3 16h18v6H3z" fill="#e8f0f8" opacity=".55"/><circle cx="8" cy="17" r="2" fill="#5a9ae0"/><circle cx="15" cy="17" r="2" fill="#5a9ae0"/><circle cx="11.500" cy="15" r="2" fill="#3a7ac0"/><path d="M17.500 5v8M21 5v8" stroke="#1a1a1a" stroke-width="2"/></svg>
<svg class="abs" style="left:439px;top:127px" width="24" height="24" viewBox="0 0 24 24"><path d="M1.500 3h7l1.500 2h11.500v15h-20z" fill="#f0e870" stroke="#d8c880" stroke-width=".8"/><path d="M3 6h8" stroke="#3ab03a" stroke-width="1" stroke-dasharray="1 1.500"/><path d="M3 11h14l-2 5H3z" fill="#f4e4b0"/><path d="M3 22q1-4 4-5 1-3 3-1 1-2 3 0 2-2 3 1 4 1 5 5z" fill="#4a8ad0"/><path d="M3 16h18v6H3z" fill="#e8f0f8" opacity=".55"/><circle cx="8" cy="17" r="2" fill="#5a9ae0"/><circle cx="15" cy="17" r="2" fill="#5a9ae0"/><circle cx="11.500" cy="15" r="2" fill="#3a7ac0"/><path d="M15 5v8M18 5v8M21 5v8" stroke="#c01a1a" stroke-width="1.800"/></svg>
<div class="tri" style="left:145px;top:146px"></div>
<div class="tri" style="left:183px;top:146px"></div>
<div class="tri" style="left:223px;top:146px"></div>
<div class="tri" style="left:344px;top:146px"></div>
<div class="tri" style="left:383px;top:146px"></div>
<div class="tri" style="left:422px;top:146px"></div>
<div class="tri" style="left:462px;top:146px"></div>
<svg class="abs" style="left:1032.5px;top:129.5px" width="21" height="21" viewBox="0 0 24 24"><path d="M12 2v20M2 12h20" stroke="#111" stroke-width="1.600"/><rect x="8.500" y="8.500" width="7" height="7" fill="#fff" stroke="#8a1a2a" stroke-width="1.600"/></svg>
<svg class="abs" style="left:1071.5px;top:129.5px" width="21" height="21" viewBox="0 0 24 24"><path d="M3 5l16 16M21 3L4 19" stroke="#222" stroke-width="1.300"/><path d="M1 7l4-4M17 23l4-4M19 1l4 4M2 17l4 4" stroke="#222" stroke-width="1.100"/><circle cx="11.500" cy="12.500" r="2.200" fill="#b04a6a" stroke="#6a1a3a" stroke-width=".6"/></svg>
<svg class="abs" style="left:1110.5px;top:129.5px" width="21" height="21" viewBox="0 0 24 24"><path d="M4 20L20 4" stroke="#222" stroke-width="1.800"/><circle cx="4" cy="20" r="2.500" fill="#b04a6a" stroke="#6a1a3a" stroke-width=".6"/><circle cx="20" cy="4" r="2.500" fill="#b04a6a" stroke="#6a1a3a" stroke-width=".6"/></svg>
<svg class="abs" style="left:1149.5px;top:129.5px" width="21" height="21" viewBox="0 0 24 24"><circle cx="12" cy="12" r="9.500" fill="#eef2f8" stroke="#222" stroke-width="1.800"/><circle cx="5" cy="5.500" r="2.300" fill="#b04a6a" stroke="#6a1a3a" stroke-width=".6"/><circle cx="19" cy="5.500" r="2.300" fill="#b04a6a" stroke="#6a1a3a" stroke-width=".6"/><circle cx="5" cy="18.500" r="2.300" fill="#b04a6a" stroke="#6a1a3a" stroke-width=".6"/><circle cx="19" cy="18.500" r="2.300" fill="#b04a6a" stroke="#6a1a3a" stroke-width=".6"/></svg>
<svg class="abs" style="left:1188.5px;top:129.5px" width="21" height="21" viewBox="0 0 24 24"><path d="M5 20Q0 6 12 4q6 0 8 4" fill="none" stroke="#222" stroke-width="1.800"/><circle cx="5" cy="20" r="2.400" fill="#b04a6a" stroke="#6a1a3a" stroke-width=".6"/><circle cx="20" cy="7" r="2.400" fill="#b04a6a" stroke="#6a1a3a" stroke-width=".6"/><circle cx="8" cy="6" r="2.200" fill="#b04a6a" stroke="#6a1a3a" stroke-width=".6"/></svg>
<svg class="abs" style="left:1494.5px;top:125.5px" width="24" height="24" viewBox="0 0 24 24"><circle cx="13" cy="9" r="7.500" fill="#e4eefa" stroke="#a8b4c4" stroke-width="1.800"/><circle cx="11.500" cy="7.500" r="3" fill="#fff"/><path d="M8 14l-6 7" stroke="#8a6a3a" stroke-width="3"/><path d="M7 15l-5 6" stroke="#d8b45a" stroke-width="1.200"/></svg>
<svg class="abs" style="left:1545.5px;top:127px" width="24" height="24" viewBox="0 0 24 24"><text x="3" y="12" font-family="Liberation Serif,serif" font-style="italic" font-weight="bold" font-size="15" fill="#8a1a3a">fx</text><path d="M3 23q0-9 9-9t9 9" fill="none" stroke="#222" stroke-width="1.700"/><path d="M12 22l6-6" stroke="#222" stroke-width="1.300"/></svg>
<svg class="abs" style="left:1579px;top:127px" width="24" height="24" viewBox="0 0 24 24"><text x="1" y="12" font-family="Liberation Serif,serif" font-style="italic" font-weight="bold" font-size="15" fill="#8a1a3a">fx</text><g transform="translate(0,-4)"><path d="M7 23L20 10l3 3L10 25z" fill="#111"/><path d="M5 25l2-3 2 2z" fill="#777"/></g></svg>
<svg class="abs" style="left:1610.5px;top:127px" width="24" height="24" viewBox="0 0 24 24"><path d="M1 8q3-5 6 0t6 0 5-1M1 11h16" stroke="#8a1a3a" stroke-width="1.300" fill="none"/><path d="M9 2v10M15 3v9" stroke="#8a1a3a" stroke-width="1"/><g transform="translate(0,-4)"><path d="M7 23L20 10l3 3L10 25z" fill="#111"/><path d="M5 25l2-3 2 2z" fill="#777"/></g></svg>
<svg class="abs" style="left:1644px;top:127px" width="24" height="24" viewBox="0 0 24 24"><ellipse cx="7" cy="6" rx="4.500" ry="3.200" fill="none" stroke="#a01a3a" stroke-width="1.800"/><ellipse cx="17" cy="6" rx="4.500" ry="3.200" fill="none" stroke="#a01a3a" stroke-width="1.800"/><path d="M9 6h6" stroke="#a01a3a" stroke-width="1.600"/><path d="M3 23q0-9 9-9t9 9" fill="none" stroke="#222" stroke-width="1.700"/><path d="M12 22l6-6" stroke="#222" stroke-width="1.300"/></svg>
<svg class="abs" style="left:1695.5px;top:127px" width="24" height="24" viewBox="0 0 24 24"><path d="M4 19L19 4l4 4L8 23z" fill="#eadc8a" stroke="#d4c46a" stroke-width=".8"/><path d="M8 17l1.500 1.500M11 14l1.500 1.500M14 11l1.500 1.500M17 8l1.500 1.500" stroke="#a89a4a" stroke-width=".9"/><path d="M2.500 1v23" stroke="#222" stroke-width="1.700"/><path d="M3 19h15" stroke="#a01a2a" stroke-width="1.800" stroke-dasharray="2.500 1.500"/><circle cx="20" cy="19" r="2" fill="#a01a3a"/></svg>
<svg class="abs" style="left:1728px;top:127px" width="24" height="24" viewBox="0 0 24 24"><path d="M4 19L19 4l4 4L8 23z" fill="#eadc8a" stroke="#d4c46a" stroke-width=".8"/><path d="M8 17l1.500 1.500M11 14l1.500 1.500M14 11l1.500 1.500M17 8l1.500 1.500" stroke="#a89a4a" stroke-width=".9"/><path d="M21.500 1v23" stroke="#222" stroke-width="1.700"/><path d="M3 5h17" stroke="#a01a2a" stroke-width="1.800" stroke-dasharray="2.500 1.500"/><circle cx="4" cy="5" r="2" fill="#a01a3a"/><text x="5" y="21" font-family="Liberation Sans,sans-serif" font-weight="bold" font-size="12" fill="#222">Ch</text></svg>
<svg class="abs" style="left:1761px;top:127px" width="24" height="24" viewBox="0 0 24 24"><path d="M4 19L19 4l4 4L8 23z" fill="#eadc8a" stroke="#d4c46a" stroke-width=".8"/><path d="M8 17l1.500 1.500M11 14l1.500 1.500M14 11l1.500 1.500M17 8l1.500 1.500" stroke="#a89a4a" stroke-width=".9"/><path d="M2.500 1v23" stroke="#222" stroke-width="1.700"/><text x="6" y="12" font-family="Liberation Sans,sans-serif" font-weight="bold" font-size="13" fill="#223">%</text><path d="M3 20h16" stroke="#a01a2a" stroke-width="1.800" stroke-dasharray="2.500 1.500"/><circle cx="21" cy="20" r="2" fill="#a01a3a"/></svg>
<svg class="abs" style="left:1793px;top:127px" width="24" height="24" viewBox="0 0 24 24"><path d="M4 19L19 4l4 4L8 23z" fill="#eadc8a" stroke="#d4c46a" stroke-width=".8"/><path d="M8 17l1.500 1.500M11 14l1.500 1.500M14 11l1.500 1.500M17 8l1.500 1.500" stroke="#a89a4a" stroke-width=".9"/><text x="1" y="12" font-family="Liberation Sans,sans-serif" font-weight="bold" font-size="14" fill="#223">%</text><circle cx="20" cy="20" r="2" fill="#a01a3a"/></svg>
<svg class="abs" style="left:1825.5px;top:127px" width="24" height="24" viewBox="0 0 24 24"><path d="M4 19L19 4l4 4L8 23z" fill="#eadc8a" stroke="#d4c46a" stroke-width=".8"/><path d="M8 17l1.500 1.500M11 14l1.500 1.500M14 11l1.500 1.500M17 8l1.500 1.500" stroke="#a89a4a" stroke-width=".9"/><text x="3" y="11" font-family="Liberation Sans,sans-serif" font-weight="bold" font-size="13" fill="#223">Z</text><circle cx="19" cy="20" r="2" fill="#a01a3a"/></svg>
<svg class="abs" style="left:1878px;top:126px" width="24" height="24" viewBox="0 0 24 24"><rect x="1.500" y="4" width="18" height="19" fill="#f4f6fa" stroke="#7a1426" stroke-width="1.800"/><path d="M4 9h13M4 12.500h13M4 16h13M4 19.500h13" stroke="#7a94c0" stroke-width="1.300"/><path d="M11 15L20 3l3 2-9 12-4 2z" fill="#d8c030" stroke="#7a6a1a" stroke-width=".8"/><path d="M20 3l1.500-2 3 2-1.500 2z" fill="#d87a8a"/></svg>
<div class="griph" style="left:9px;top:164px;width:28px"></div>
<div class="griph" style="left:9px;top:808px;width:28px"></div>
<div class="griph" style="left:9px;top:962px;width:28px"></div>
<div class="griph" style="left:9px;top:1023px;width:28px"></div>
<svg class="abs" style="left:9px;top:178.5px" width="24" height="24" viewBox="0 0 24 24"><path d="M12 2v20M2 12h20" stroke="#111" stroke-width="1.600"/><rect x="8.500" y="8.500" width="7" height="7" fill="#fff" stroke="#8a1a2a" stroke-width="1.600"/></svg>
<div class="tri" style="left:33px;top:197.5px"></div>
<svg class="abs" style="left:9px;top:211.5px" width="24" height="24" viewBox="0 0 24 24"><path d="M3 5l16 16M21 3L4 19" stroke="#222" stroke-width="1.300"/><path d="M1 7l4-4M17 23l4-4M19 1l4 4M2 17l4 4" stroke="#222" stroke-width="1.100"/><circle cx="11.500" cy="12.500" r="2.200" fill="#b04a6a" stroke="#6a1a3a" stroke-width=".6"/></svg>
<div class="tri" style="left:33px;top:230.5px"></div>
<svg class="abs" style="left:9px;top:244.5px" width="24" height="24" viewBox="0 0 24 24"><path d="M4 20L20 4" stroke="#222" stroke-width="1.800"/><circle cx="4" cy="20" r="2.500" fill="#b04a6a" stroke="#6a1a3a" stroke-width=".6"/><circle cx="20" cy="4" r="2.500" fill="#b04a6a" stroke="#6a1a3a" stroke-width=".6"/></svg>
<div class="tri" style="left:33px;top:263.5px"></div>
<svg class="abs" style="left:9px;top:278px" width="24" height="24" viewBox="0 0 24 24"><circle cx="12" cy="12" r="9.500" fill="#eef2f8" stroke="#222" stroke-width="1.800"/><circle cx="5" cy="5.500" r="2.300" fill="#b04a6a" stroke="#6a1a3a" stroke-width=".6"/><circle cx="19" cy="5.500" r="2.300" fill="#b04a6a" stroke="#6a1a3a" stroke-width=".6"/><circle cx="5" cy="18.500" r="2.300" fill="#b04a6a" stroke="#6a1a3a" stroke-width=".6"/><circle cx="19" cy="18.500" r="2.300" fill="#b04a6a" stroke="#6a1a3a" stroke-width=".6"/></svg>
<div class="tri" style="left:33px;top:297px"></div>
<svg class="abs" style="left:9px;top:310.5px" width="24" height="24" viewBox="0 0 24 24"><path d="M5 20Q0 6 12 4q6 0 8 4" fill="none" stroke="#222" stroke-width="1.800"/><circle cx="5" cy="20" r="2.400" fill="#b04a6a" stroke="#6a1a3a" stroke-width=".6"/><circle cx="20" cy="7" r="2.400" fill="#b04a6a" stroke="#6a1a3a" stroke-width=".6"/><circle cx="8" cy="6" r="2.200" fill="#b04a6a" stroke="#6a1a3a" stroke-width=".6"/></svg>
<div class="tri" style="left:33px;top:329.5px"></div>
<svg class="abs" style="left:9px;top:343.5px" width="24" height="24" viewBox="0 0 24 24"><path d="M4 5h17v14H4z" fill="#e4e8f0" stroke="#222" stroke-width="1.800"/><path d="M5 6h15v12" fill="none" stroke="#fff" stroke-width="1"/><circle cx="4" cy="19" r="2.300" fill="#b04a6a" stroke="#6a1a3a" stroke-width=".6"/><circle cx="21" cy="5" r="2.300" fill="#b04a6a" stroke="#6a1a3a" stroke-width=".6"/></svg>
<div class="tri" style="left:33px;top:362.5px"></div>
<svg class="abs" style="left:9px;top:376.5px" width="24" height="24" viewBox="0 0 24 24"><path d="M9 13l9-12 3.500 2.500-9 12-4.500 2z" fill="#d8c828" stroke="#8a7a1a" stroke-width=".7"/><path d="M18 1l2-2.600 3.500 2.500-2 2.600z" fill="#d86a7a"/><text x="0" y="22" font-family="Liberation Sans,sans-serif" font-weight="bold" font-size="11" fill="#222">abc</text></svg>
<div class="tri" style="left:33px;top:395.5px"></div>
<svg class="abs" style="left:9px;top:409px" width="24" height="24" viewBox="0 0 24 24"><path d="M9 13l9-12 3.500 2.500-9 12-4.500 2z" fill="#d8c828" stroke="#8a7a1a" stroke-width=".7"/><path d="M18 1l2-2.600 3.500 2.500-2 2.600z" fill="#d86a7a"/><g transform="translate(0,12) scale(.5)"><path d="M12 12L4 4h8zM12 12l8-8v8zM12 12l8 8h-8zM12 12l-8 8v-8z" fill="#2a4a9a"/><path d="M12 12V4l4 4zM12 12h8l-4 4zM12 12v8l-4-4zM12 12H4l4-4z" fill="#5ab4e8"/></g></svg>
<div class="tri" style="left:33px;top:428px"></div>
<svg class="abs" style="left:9px;top:442px" width="24" height="24" viewBox="0 0 24 24"><rect x="10" y="7" width="11" height="8" fill="#fff" stroke="#222" stroke-width="1.500"/><path d="M2 4h6M5 1v6" stroke="#a01a2a" stroke-width="1.500"/><path d="M9 14l-6 8" stroke="#555" stroke-width="1.800"/><path d="M2 23l1-5 3.500 2.500z" fill="#555"/></svg>
<div class="tri" style="left:33px;top:461px"></div>
<svg class="abs" style="left:9px;top:475px" width="24" height="24" viewBox="0 0 24 24"><path d="M3 13L17 3" stroke="#8a1a3a" stroke-width="1.500"/><path d="M3 13l4-.8-2.300-3.200zM17 3l-4 .8 2.300 3.200z" fill="#8a1a3a"/><path d="M1 9l8 12M15 1l7 10" stroke="#222" stroke-width="1.400"/></svg>
<div class="tri" style="left:33px;top:494px"></div>
<svg class="abs" style="left:9px;top:508px" width="24" height="24" viewBox="0 0 24 24"><rect x="2" y="3" width="20" height="18" fill="#fff" stroke="#7a1426" stroke-width="1.800"/><path d="M2 9h20M2 15h20M8.500 3v18M15.500 3v18" stroke="#7a1426" stroke-width="1.400"/><rect x="2" y="3" width="20" height="5" fill="#c86a7a"/></svg>
<div class="tri" style="left:33px;top:527px"></div>
<svg class="abs" style="left:9px;top:541px" width="24" height="24" viewBox="0 0 24 24"><rect x="2" y="2" width="18" height="14" fill="#e4e8f0" stroke="#222" stroke-width="1.800"/><rect x="6" y="6" width="9" height="6" fill="#fff" stroke="#222" stroke-width="1.300"/><path d="M18 13v9M13.500 17.500h9" stroke="#2a5ab0" stroke-width="2.600"/><circle cx="18" cy="17.500" r="1.500" fill="#d83a3a"/></svg>
<div class="tri" style="left:33px;top:560px"></div>
<svg class="abs" style="left:9px;top:574px" width="24" height="24" viewBox="0 0 24 24"><path d="M3 4h18v12l-6 6H3z" fill="#e4e4ec" stroke="#7a1426" stroke-width="1.800"/></svg>
<div class="tri" style="left:33px;top:593px"></div>
<svg class="abs" style="left:9px;top:607.5px" width="24" height="24" viewBox="0 0 24 24"><rect x="8" y="10" width="14" height="10" fill="#8ac4e8" stroke="#3a6a9a" stroke-width="1.200"/><path d="M9 19l4-4 3 3 2-2 3 3z" fill="#3a9a4a"/><path d="M2 5h7M5.500 1.500v7" stroke="#8a1a2a" stroke-width="1.400"/><circle cx="5.500" cy="5" r="1.800" fill="none" stroke="#222" stroke-width="1"/></svg>
<div class="tri" style="left:33px;top:626.5px"></div>
<svg class="abs" style="left:9px;top:640.5px" width="24" height="24" viewBox="0 0 24 24"><path d="M12 1l4 5h-2.500v4.500H18V8l5 4-5 4v-2.500h-4.500V18H16l-4 5-4-5h2.500v-4.500H6V16l-5-4 5-4v2.500h4.500V6H8z" fill="#7a1a5a" stroke="#4a0a3a" stroke-width=".6"/></svg>
<div class="tri" style="left:33px;top:659.5px"></div>
<svg class="abs" style="left:9px;top:673.5px" width="24" height="24" viewBox="0 0 24 24"><path d="M2 21h17" stroke="#222" stroke-width="2"/><path d="M3 18L14 7" stroke="#555" stroke-width="1.200" stroke-dasharray="2 1.500"/><path d="M14 2v9M10 6.500h8M11 3.500l6 6M17 3.500l-6 6" stroke="#a01a2a" stroke-width="1.200"/><circle cx="21" cy="20" r="2" fill="#b04a6a" stroke="#6a1a3a" stroke-width=".6"/></svg>
<div class="tri" style="left:33px;top:692.5px"></div>
<svg class="abs" style="left:9px;top:706.5px" width="24" height="24" viewBox="0 0 24 24"><path d="M3 19L18 4" stroke="#222" stroke-width="2"/><circle cx="18" cy="4" r="2.200" %s/><path d="M7 21h5" stroke="#2a5ab0" stroke-width="3"/><path d="M12 21h4" stroke="#2ab04a" stroke-width="3"/><path d="M16 21h4" stroke="#d8b020" stroke-width="3"/><circle cx="21.500" cy="21" r="1.800" fill="#a01a3a"/></svg>
<div class="tri" style="left:33px;top:725.5px"></div>
<svg class="abs" style="left:9px;top:739px" width="24" height="24" viewBox="0 0 24 24"><path d="M3 4h18v10l-7 8-6-1-5-8z" fill="#d4d8e4" stroke="#222" stroke-width="1.900"/><circle cx="3" cy="4" r="2" fill="#b04a6a" stroke="#6a1a3a" stroke-width=".6"/><circle cx="21" cy="4" r="2" fill="#b04a6a" stroke="#6a1a3a" stroke-width=".6"/><circle cx="14" cy="22" r="2" fill="#b04a6a" stroke="#6a1a3a" stroke-width=".6"/></svg>
<div class="tri" style="left:33px;top:758px"></div>
<svg class="abs" style="left:9px;top:770px" width="24" height="24" viewBox="0 0 24 24"><path d="M3 3l9 9M12 3l-9 9" stroke="#8a1a3a" stroke-width="1.700"/><path d="M12 12l6 6" stroke="#8a8a8a" stroke-width="1.300" stroke-dasharray="2 1.500"/><circle cx="19.500" cy="19.500" r="2.500" fill="#b04a6a" stroke="#6a1a3a" stroke-width=".6"/></svg>
<div class="tri" style="left:33px;top:789px"></div>
<svg class="abs" style="left:9px;top:823px" width="24" height="24" viewBox="0 0 24 24"><path d="M7 13l9-12 3.500 2.500-9 12-4.500 2z" fill="#d8c828" stroke="#8a7a1a" stroke-width=".7"/><path d="M16 1l2-2.600 3.500 2.500-2 2.600z" fill="#d86a7a"/><path d="M1 16q4 6 8 3t6-1 7 4" fill="none" stroke="#222" stroke-width="1.900"/></svg>
<div class="tri" style="left:33px;top:842px"></div>
<svg class="abs" style="left:9px;top:856px" width="24" height="24" viewBox="0 0 24 24"><rect x="2" y="2" width="20" height="20" fill="#e8e0d4" stroke="#7a2a3a" stroke-width="1.600"/><text x="12" y="19" text-anchor="middle" font-family="Liberation Serif,serif" font-weight="bold" font-size="19" fill="#c02a1a">I</text></svg>
<div class="tri" style="left:33px;top:875px"></div>
<svg class="abs" style="left:9px;top:889px" width="24" height="24" viewBox="0 0 24 24"><path d="M6 8L3 22M6 8l4 14" stroke="#222" stroke-width="1.700"/><path d="M4 3h3l1 4-2.500 1L4 7z" fill="#222"/><circle cx="18" cy="6" r="3.500" fill="#e4f0fa" stroke="#2a6ab0" stroke-width="1.700"/><path d="M18 10v12" stroke="#222" stroke-width="1.800"/></svg>
<div class="tri" style="left:33px;top:908px"></div>
<svg class="abs" style="left:9px;top:922px" width="24" height="24" viewBox="0 0 24 24"><rect x="1.500" y="4" width="18" height="19" fill="#f4f6fa" stroke="#7a1426" stroke-width="1.800"/><path d="M4 9h13M4 12.500h13M4 16h13M4 19.500h13" stroke="#7a94c0" stroke-width="1.300"/><path d="M11 15L20 3l3 2-9 12-4 2z" fill="#d8c030" stroke="#7a6a1a" stroke-width=".8"/><path d="M20 3l1.500-2 3 2-1.500 2z" fill="#d87a8a"/></svg>
<div class="tri" style="left:33px;top:941px"></div>
<svg class="abs" style="left:9px;top:978px" width="24" height="24" viewBox="0 0 24 24"><path d="M7 13l9-12 3.500 2.500-9 12-4.500 2z" fill="#d8c828" stroke="#8a7a1a" stroke-width=".7"/><path d="M16 1l2-2.600 3.500 2.500-2 2.600z" fill="#d86a7a"/><path d="M1 19q5 4 9 1t12 1" fill="none" stroke="#222" stroke-width="1.900"/></svg>
<div class="tri" style="left:33px;top:997px"></div>
<svg class="abs" style="left:9px;top:1040px" width="24" height="24" viewBox="0 0 24 24"><path d="M2 6h12M8 6v14M3 20h14" stroke="#8a8a8a" stroke-width="3.500"/><ellipse cx="8" cy="6" rx="6" ry="2.500" fill="#b4b4b4" stroke="#6a6a6a" stroke-width=".8"/><path d="M2 20h16" stroke="#9a9a9a" stroke-width="4.500"/><path d="M12 16l9-12 3.500 2.500-9 12-4.500 2z" fill="#d8c828" stroke="#8a7a1a" stroke-width=".7"/><path d="M21 4l2-2.600 3.500 2.500-2 2.600z" fill="#d86a7a"/></svg>
<div class="tri" style="left:33px;top:1059px"></div>
<svg class="abs" style="left:12px;top:1010px" width="14" height="8" viewBox="0 0 14 8"><path d="M2 6q5-5 10 0" fill="none" stroke="#333" stroke-width="2"/></svg>
<svg class="abs" style="left:17px;top:1076px" width="3" height="3" viewBox="0 0 3 3"><circle cx="1.500" cy="1.500" r="1.200" fill="#7a1a3a"/></svg>
<svg class="abs" style="left:1908px;top:130px" width="10" height="10" viewBox="0 0 10 10"><path d="M8 1L3 5l5 4" fill="none" stroke="#a01a3a" stroke-width="1.600"/></svg>
<svg class="abs" style="left:13px;top:10px" width="28" height="28" viewBox="0 0 26 26"><path d="M3 8l10-5 9 4v12l-10 5-9-4z" fill="#e8e8e8" stroke="#9a9a9a" stroke-width=".8"/><path d="M3 8l9 4v12l-9-4z" fill="#f4f4f4"/><path d="M12 12l10-5v12l-10 5z" fill="#6a6a6a"/><path d="M3 8l10-5 9 4-10 5z" fill="#b4c8b4"/><text x="4.500" y="19" font-family="Liberation Sans,sans-serif" font-weight="bold" font-size="8" fill="#b02a5a" transform="skewY(22) translate(0,-3)">12</text><text x="13.500" y="21" font-family="Liberation Sans,sans-serif" font-weight="bold" font-size="9" fill="#222" transform="skewY(-24) translate(0,7)">d</text><text x="19" y="7" font-family="Liberation Sans,sans-serif" font-weight="bold" font-size="7" fill="#cfe4f8">14</text></svg>
<svg class="abs" style="left:69px;top:183px" width="24" height="24" viewBox="0 0 24 24"><rect x="1" y="1" width="22" height="22" fill="#dfe9f2" stroke="#7a1a2a" stroke-width="1.6"/><path d="M7 6q4-3 8-1t3 6-4 6-7-2-3-6z" fill="#fff" stroke="#9db8cf" stroke-width="1.4" stroke-dasharray="2 1.5"/><circle cx="12" cy="11" r="3" fill="#f4f4f4"/><rect x="4" y="4" width="3" height="3" fill="#6a1a6a"/><rect x="4" y="12.5" width="3" height="3" fill="#6a1a6a"/><rect x="16" y="12" width="3.5" height="3.5" fill="#1a2a6a"/><rect x="12" y="13.5" width="3" height="2.5" fill="#3a9a5a"/><path d="M4 19.5h6M7 17v5" stroke="#2aa02a" stroke-width="2"/><path d="M15 18.5h5M17.5 16v5" stroke="#e03a1a" stroke-width="2"/></svg>
<svg class="abs" style="left:997.5px;top:183px" width="24" height="24" viewBox="0 0 24 24"><rect x="1" y="1" width="22" height="22" fill="#dbe8f6" stroke="#1c4f9c" stroke-width="1.8"/><path d="M2 22L21 3" stroke="#fff" stroke-width="5"/><path d="M3 14L21 3M9 22L21 3" stroke="#5a5f78" stroke-width="1.5" fill="none"/><path d="M5 21L20 4" stroke="#6a6f88" stroke-width="1.2" stroke-dasharray="3 2"/><path d="M17 5l5-3-2 6z" fill="#5a6aa8"/></svg>
<div style="position:absolute;left:49px;top:977.5px;width:1869px;height:34.5px;background:#f5f5f5"></div>
<div style="position:absolute;left:383.5px;top:976px;width:66px;height:34.5px;background:#f8f8f8;border-style:solid;border-width:0 2px 2px 0;border-color:#3a3a3a;box-sizing:border-box;box-shadow:inset 1.5px 0 0 #fff"></div>
<svg class="abs" style="left:55.5px;top:981px" width="24" height="24" viewBox="0 0 24 24"><rect x="1" y="1" width="22" height="22" fill="#dfe9f2" stroke="#7a1a2a" stroke-width="1.6"/><path d="M7 6q4-3 8-1t3 6-4 6-7-2-3-6z" fill="#fff" stroke="#9db8cf" stroke-width="1.4" stroke-dasharray="2 1.5"/><circle cx="12" cy="11" r="3" fill="#f4f4f4"/><rect x="4" y="4" width="3" height="3" fill="#6a1a6a"/><rect x="4" y="12.5" width="3" height="3" fill="#6a1a6a"/><rect x="16" y="12" width="3.5" height="3.5" fill="#1a2a6a"/><rect x="12" y="13.5" width="3" height="2.5" fill="#3a9a5a"/><path d="M4 19.5h6M7 17v5" stroke="#2aa02a" stroke-width="2"/><path d="M15 18.5h5M17.5 16v5" stroke="#e03a1a" stroke-width="2"/></svg>
<div class="t" style="left:83.0px;top:985.3px;font-size:18px;color:#a6acb6;transform:scaleX(0.8212);transform-origin:0 0;">SURVEY</div>
<svg class="abs" style="left:160.5px;top:981px" width="24" height="24" viewBox="0 0 24 24"><rect x="1" y="1" width="22" height="22" fill="#dfe9f2" stroke="#7a1a2a" stroke-width="1.6"/><path d="M7 6q4-3 8-1t3 6-4 6-7-2-3-6z" fill="#fff" stroke="#9db8cf" stroke-width="1.4" stroke-dasharray="2 1.5"/><circle cx="12" cy="11" r="3" fill="#f4f4f4"/><rect x="4" y="4" width="3" height="3" fill="#6a1a6a"/><rect x="4" y="12.5" width="3" height="3" fill="#6a1a6a"/><rect x="16" y="12" width="3.5" height="3.5" fill="#1a2a6a"/><rect x="12" y="13.5" width="3" height="2.5" fill="#3a9a5a"/><path d="M4 19.5h6M7 17v5" stroke="#2aa02a" stroke-width="2"/><path d="M15 18.5h5M17.5 16v5" stroke="#e03a1a" stroke-width="2"/></svg>
<div class="t" style="left:188.0px;top:985.3px;font-size:18px;color:#a6acb6;transform:scaleX(0.8406);transform-origin:0 0;">DESIGN</div>
<svg class="abs" style="left:263.5px;top:981px" width="24" height="24" viewBox="0 0 24 24"><rect x="1" y="1" width="22" height="22" fill="#d4e6f2" stroke="#3cb43c" stroke-width="1.8"/><path d="M2 6q4-3 8 0t8 0 4-1" fill="none" stroke="#8a3a3a" stroke-width="2"/><path d="M2 11q4-3 8 0t8 0 4-1" fill="none" stroke="#5a8ac0" stroke-width="2"/><path d="M2 16q4-3 8 0t8 0 4-1" fill="none" stroke="#8a3a3a" stroke-width="2"/><path d="M2 20.5q4-3 8 0t8 0 4-1" fill="none" stroke="#7aa6d0" stroke-width="1.6"/></svg>
<div class="t" style="left:292.0px;top:985.3px;font-size:18px;color:#a6acb6;transform:scaleX(0.7495);transform-origin:0 0;">LS</div>
<svg class="abs" style="left:325.5px;top:981px" width="24" height="24" viewBox="0 0 24 24"><rect x="1" y="1" width="22" height="22" fill="#d4e6f2" stroke="#3cb43c" stroke-width="1.8"/><path d="M2 6q4-3 8 0t8 0 4-1" fill="none" stroke="#8a3a3a" stroke-width="2"/><path d="M2 11q4-3 8 0t8 0 4-1" fill="none" stroke="#5a8ac0" stroke-width="2"/><path d="M2 16q4-3 8 0t8 0 4-1" fill="none" stroke="#8a3a3a" stroke-width="2"/><path d="M2 20.5q4-3 8 0t8 0 4-1" fill="none" stroke="#7aa6d0" stroke-width="1.6"/></svg>
<div class="t" style="left:353.0px;top:985.3px;font-size:18px;color:#a6acb6;transform:scaleX(0.7500);transform-origin:0 0;">XS</div>
<svg class="abs" style="left:388px;top:981px" width="24" height="24" viewBox="0 0 24 24"><rect x="1" y="1" width="22" height="22" fill="#dbe8f6" stroke="#1c4f9c" stroke-width="1.8"/><path d="M2 22L21 3" stroke="#fff" stroke-width="5"/><path d="M3 14L21 3M9 22L21 3" stroke="#5a5f78" stroke-width="1.5" fill="none"/><path d="M5 21L20 4" stroke="#6a6f88" stroke-width="1.2" stroke-dasharray="3 2"/><path d="M17 5l5-3-2 6z" fill="#5a6aa8"/></svg>
<div class="t" style="left:416.0px;top:985.3px;font-size:18px;color:#1c1c1c;transform:scaleX(1.0210);transform-origin:0 0;font-weight:bold;">3D</div>
<svg class="abs" style="left:456px;top:981px" width="24" height="24" viewBox="0 0 24 24"><rect x="1" y="1" width="22" height="22" fill="#dfe9f2" stroke="#7a1a2a" stroke-width="1.6"/><path d="M7 6q4-3 8-1t3 6-4 6-7-2-3-6z" fill="#fff" stroke="#9db8cf" stroke-width="1.4" stroke-dasharray="2 1.5"/><circle cx="12" cy="11" r="3" fill="#f4f4f4"/><rect x="4" y="4" width="3" height="3" fill="#6a1a6a"/><rect x="4" y="12.5" width="3" height="3" fill="#6a1a6a"/><rect x="16" y="12" width="3.5" height="3.5" fill="#1a2a6a"/><rect x="12" y="13.5" width="3" height="2.5" fill="#3a9a5a"/><path d="M4 19.5h6M7 17v5" stroke="#2aa02a" stroke-width="2"/><path d="M15 18.5h5M17.5 16v5" stroke="#e03a1a" stroke-width="2"/></svg>
<div class="t" style="left:484.0px;top:985.3px;font-size:18px;color:#a6acb6;">1</div>
<svg class="abs" style="left:508.5px;top:981px" width="24" height="24" viewBox="0 0 24 24"><rect x="1" y="1" width="22" height="22" fill="#dfe9f2" stroke="#7a1a2a" stroke-width="1.6"/><path d="M7 6q4-3 8-1t3 6-4 6-7-2-3-6z" fill="#fff" stroke="#9db8cf" stroke-width="1.4" stroke-dasharray="2 1.5"/><circle cx="12" cy="11" r="3" fill="#f4f4f4"/><rect x="4" y="4" width="3" height="3" fill="#6a1a6a"/><rect x="4" y="12.5" width="3" height="3" fill="#6a1a6a"/><rect x="16" y="12" width="3.5" height="3.5" fill="#1a2a6a"/><rect x="12" y="13.5" width="3" height="2.5" fill="#3a9a5a"/><path d="M4 19.5h6M7 17v5" stroke="#2aa02a" stroke-width="2"/><path d="M15 18.5h5M17.5 16v5" stroke="#e03a1a" stroke-width="2"/></svg>
<div class="t" style="left:536.0px;top:985.3px;font-size:18px;color:#a6acb6;transform:scaleX(0.9158);transform-origin:0 0;">DATA IMPORT</div>
<svg class="abs" style="left:666px;top:981px" width="24" height="24" viewBox="0 0 24 24"><rect x="1" y="1" width="22" height="22" fill="#dbe8f6" stroke="#1c4f9c" stroke-width="1.8"/><path d="M2 22L21 3" stroke="#fff" stroke-width="5"/><path d="M3 14L21 3M9 22L21 3" stroke="#5a5f78" stroke-width="1.5" fill="none"/><path d="M5 21L20 4" stroke="#6a6f88" stroke-width="1.2" stroke-dasharray="3 2"/><path d="M17 5l5-3-2 6z" fill="#5a6aa8"/></svg>
<div class="t" style="left:693.0px;top:985.3px;font-size:18px;color:#a6acb6;">2</div>
<div style="position:absolute;left:153.5px;top:984px;width:1.5px;height:22px;background:#a9a9a9"></div>
<div style="position:absolute;left:256.5px;top:984px;width:1.5px;height:22px;background:#a9a9a9"></div>
<div style="position:absolute;left:318.5px;top:984px;width:1.5px;height:22px;background:#a9a9a9"></div>
<div style="position:absolute;left:501px;top:984px;width:1.5px;height:22px;background:#a9a9a9"></div>
<div style="position:absolute;left:658.5px;top:984px;width:1.5px;height:22px;background:#a9a9a9"></div>
<div style="position:absolute;left:712px;top:984px;width:1.5px;height:22px;background:#a9a9a9"></div>
<svg class="abs" style="left:1868px;top:987px" width="40" height="16" viewBox="0 0 40 16"><path d="M10.5 2.5v11l-6.5-5.5z M29.500 2.500v11l6.500-5.500z" fill="#f0f0f0" stroke="#333" stroke-width="1.2"/></svg>
<div style="position:absolute;left:49px;top:1012px;width:1113px;height:34px;background:linear-gradient(90deg,#f6f6f6 0,#f6f6f6 70%,#f0f0f0 100%)"></div>
<div class="t" style="left:53.5px;top:1020.8px;font-size:18px;color:#000;transform:scaleX(0.9155);transform-origin:0 0;">For Help, press F1</div>
<div style="position:absolute;left:1162.5px;top:1015px;width:581.5px;height:29.5px;box-sizing:border-box;border:1.5px solid #b4b4b4;background:#f2f2f2"></div>
<div style="position:absolute;left:1747.5px;top:1015px;width:40px;height:29.5px;box-sizing:border-box;border:1.5px solid #b4b4b4;background:#f2f2f2"></div>
<div style="position:absolute;left:1791px;top:1015px;width:47.5px;height:29.5px;box-sizing:border-box;border:1.5px solid #b4b4b4;background:#f2f2f2"></div>
<div style="position:absolute;left:1842.5px;top:1015px;width:46px;height:29.5px;box-sizing:border-box;border:1.5px solid #b4b4b4;background:#f2f2f2"></div>
<div style="position:absolute;left:1892.5px;top:1015px;width:32.5px;height:29.5px;box-sizing:border-box;border:1.5px solid #b4b4b4;background:#f2f2f2"></div>
<div class="t" style="left:1751.5px;top:1021.3px;font-size:18px;color:#a0a0a0;transform:scaleX(0.8784);transform-origin:0 0;">CAP</div>
<div class="t" style="left:1794.5px;top:1021.3px;font-size:18px;color:#111;transform:scaleX(1.0122);transform-origin:0 0;">NUM</div>
<div class="t" style="left:1845.5px;top:1021.3px;font-size:18px;color:#a0a0a0;transform:scaleX(0.8226);transform-origin:0 0;">SCRL</div>
<div style="position:absolute;left:52.5px;top:1047.5px;width:199px;height:40px;box-sizing:border-box;border:1.5px solid #b9b9b9;background:#f3f3f3"></div>
<div style="position:absolute;left:273px;top:1047.5px;width:211.5px;height:40px;box-sizing:border-box;border:1.5px solid #b9b9b9;background:#f3f3f3"></div>
<div class="t" style="left:60.5px;top:1053.6px;font-size:18px;color:#8c8c8c;transform:scaleX(1.0319);transform-origin:0 0;">Output Window</div>
<div class="t" style="left:281.0px;top:1053.6px;font-size:18px;color:#8c8c8c;transform:scaleX(0.9713);transform-origin:0 0;">Background tasks</div>
</body></html>
